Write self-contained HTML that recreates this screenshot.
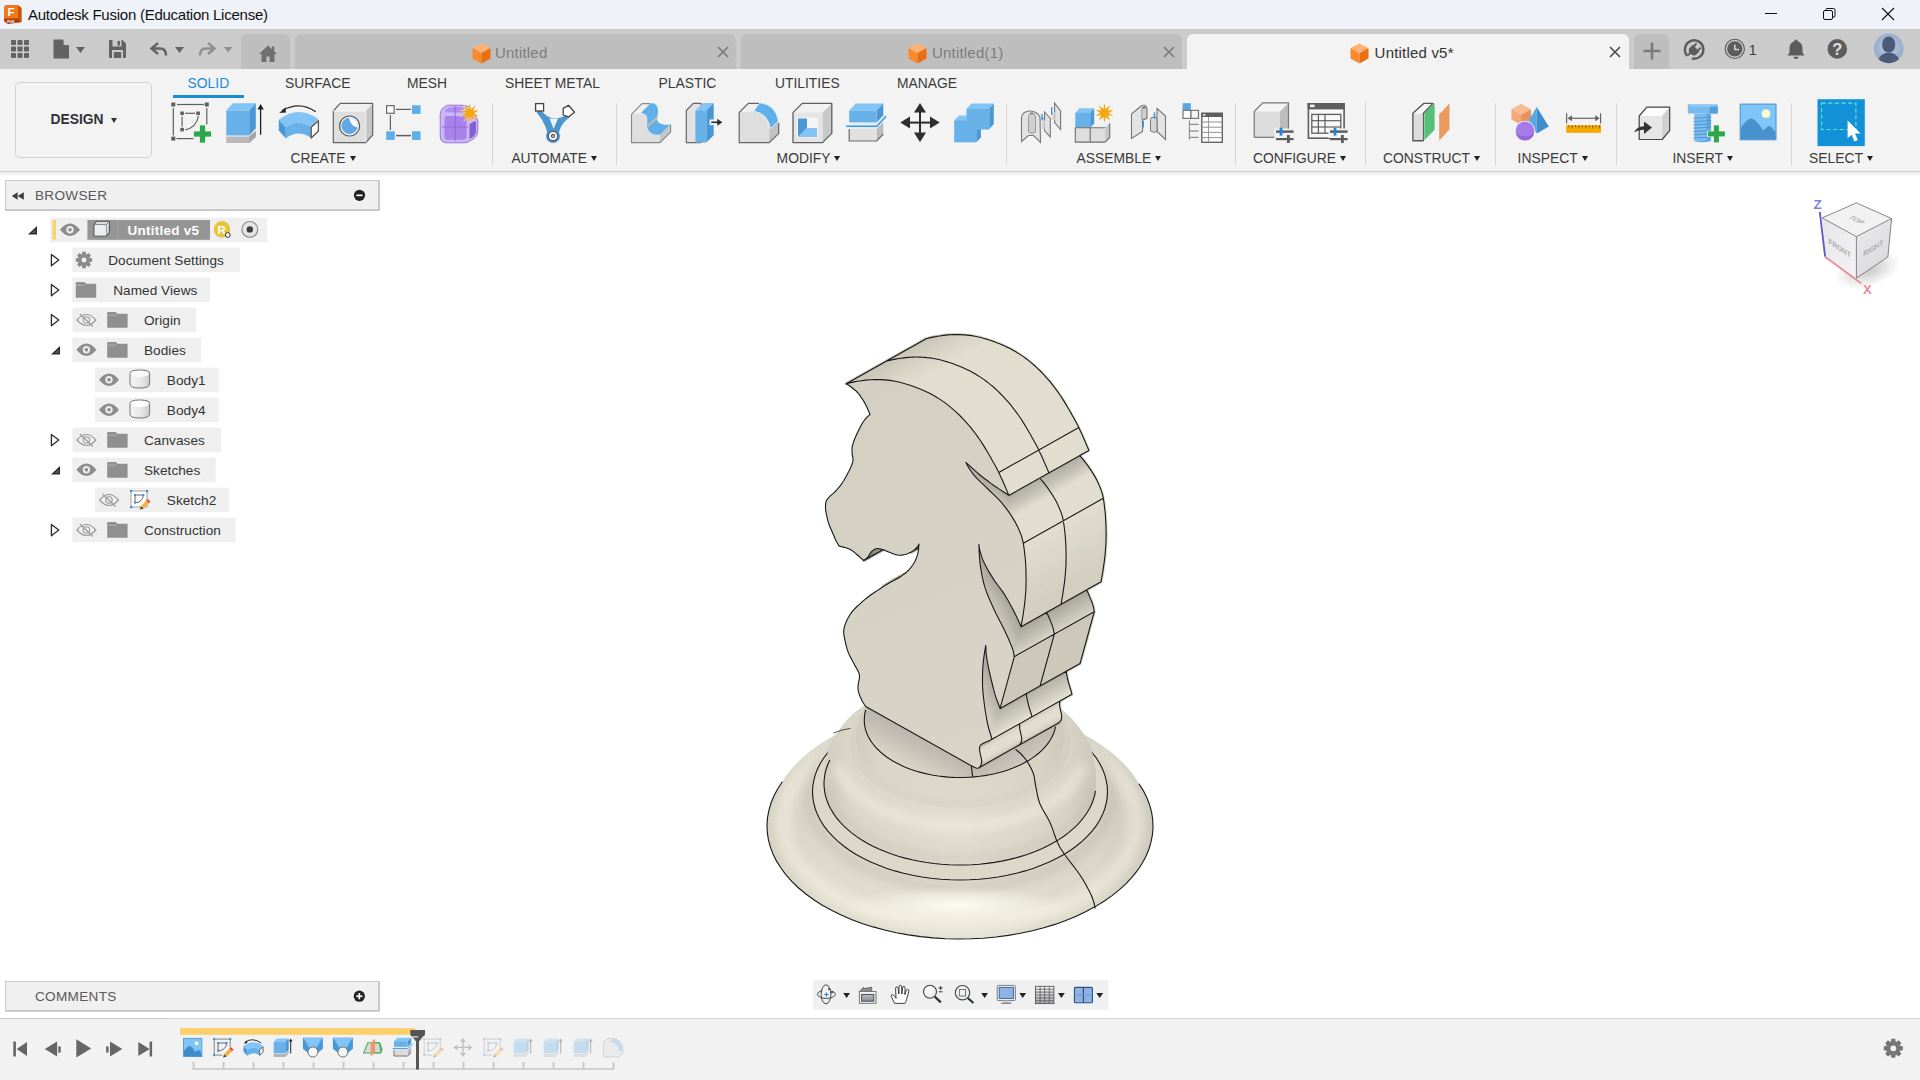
<!DOCTYPE html>
<html lang="en">
<head>
<meta charset="utf-8">
<title>Autodesk Fusion (Education License)</title>
<style>
*{box-sizing:border-box;margin:0;padding:0}
html,body{width:1920px;height:1080px;overflow:hidden;background:#fff;font-family:"Liberation Sans",sans-serif;color:#333}
.abs{position:absolute}
#titlebar{position:absolute;left:0;top:0;width:1920px;height:29px;background:#eff3f9}
#titlebar .t{position:absolute;left:28px;top:6px;font-size:15px;line-height:17px;color:#111;white-space:nowrap;letter-spacing:-0.25px}
#tabbar{position:absolute;left:0;top:29px;width:1920px;height:40px;background:#cbcbcb}
.dtab{position:absolute;top:5px;height:35px;background:#bebebe;border-radius:6px 6px 0 0}
.dtab.act{background:#f3f3f3}
.dtab .lbl{position:absolute;top:10.4px;font-size:15px;letter-spacing:0.2px;color:#7c7c7c;white-space:nowrap}
.dtab.act .lbl{color:#333}
#ribbon{position:absolute;left:0;top:69px;width:1920px;height:103px;background:#f3f3f3;border-bottom:1px solid #cfcfcf}
.rt{position:absolute;top:6.4px;font-size:13.85px;color:#3a3a3a;white-space:nowrap}
.gl{position:absolute;top:81.4px;font-size:13.85px;color:#3a3a3a;white-space:nowrap}
.gl i{display:inline-block;width:0;height:0;border-left:3.5px solid transparent;border-right:3.5px solid transparent;border-top:5px solid #222;margin-left:4px;vertical-align:2px}
.sep{position:absolute;top:34px;width:1px;height:62px;background:#d6d6d6}
.ic{position:absolute;top:33px;width:42px;height:42px}
#canvas{position:absolute;left:0;top:172px;width:1920px;height:847px;background:#fff}
#timeline{position:absolute;left:0;top:1018px;width:1920px;height:62px;background:#f2f2f2;border-top:1px solid #d6d6d6}
.panelhdr{position:absolute;left:5px;width:374px;height:30px;background:#f0f0f0;border:1px solid #c9c9c9;font-size:13.55px;color:#555}
.panelhdr span{position:absolute;left:31px;top:7px}
.row{position:absolute;height:25px;background:#ebebeb}
.row .tx{position:absolute;top:5px;font-size:13.55px;color:#333;white-space:nowrap}
</style>
</head>
<body>

<div id="titlebar">
<svg class="abs" style="left:3px;top:4px" width="20" height="21" viewBox="0 0 20 21"><path d="M2.5,1 L15,1 L18.5,4 L18.5,18 L5,20 L1,17 L1,3 Z" fill="#f2761b"/><path d="M15,1 L18.5,4 L18.5,18 L15,15 Z" fill="#c9540f"/><path d="M1,14.5 L15,14.5 L18.5,18 L5,20 L1,17 Z" fill="#a8400a"/><text x="4.6" y="12.2" font-family="Liberation Sans,sans-serif" font-weight="700" font-size="11.5" fill="#fff">F</text><text x="4.2" y="18.6" font-family="Liberation Sans,sans-serif" font-weight="700" font-size="3.6" fill="#fff">FUS</text></svg>
<div class="t">Autodesk Fusion (Education License)</div>
<svg class="abs" style="left:1750px;top:0" width="170" height="29" viewBox="1750 0 170 29"><line x1="1765" y1="13.5" x2="1777" y2="13.5" stroke="#111" stroke-width="1"/><rect x="1823.5" y="10.5" width="9" height="9" rx="1.5" fill="none" stroke="#111" stroke-width="1"/><path d="M1826,10 V9.5 Q1826,8.5 1827,8.5 H1833.5 Q1835,8.5 1835,10 V16 Q1835,17 1834,17 H1833" fill="none" stroke="#111" stroke-width="1"/><path d="M1882,8 L1894,20 M1894,8 L1882,20" stroke="#111" stroke-width="1.1" fill="none"/></svg>
</div>
<div id="tabbar">
<svg class="abs" style="left:0;top:0" width="240" height="40" viewBox="0 29 240 40"><rect x="11.00" y="40.00" width="5.00" height="5.00" fill="#636363" rx="0.8"/><rect x="17.50" y="40.00" width="5.00" height="5.00" fill="#636363" rx="0.8"/><rect x="24.00" y="40.00" width="5.00" height="5.00" fill="#636363" rx="0.8"/><rect x="11.00" y="46.50" width="5.00" height="5.00" fill="#636363" rx="0.8"/><rect x="17.50" y="46.50" width="5.00" height="5.00" fill="#636363" rx="0.8"/><rect x="24.00" y="46.50" width="5.00" height="5.00" fill="#636363" rx="0.8"/><rect x="11.00" y="53.00" width="5.00" height="5.00" fill="#636363" rx="0.8"/><rect x="17.50" y="53.00" width="5.00" height="5.00" fill="#636363" rx="0.8"/><rect x="24.00" y="53.00" width="5.00" height="5.00" fill="#636363" rx="0.8"/><path d="M53.5,39.5 H63 L69,45.5 V58.5 H53.5 Z" fill="#636363" /><path d="M63.6,39 V45 H69.6" fill="#cbcbcb" /><polygon points="76.00,47.00 85.00,47.00 80.50,53.00" fill="#636363" /><path d="M109,41 Q109,40 110,40 H122.5 L126,43.5 V57 Q126,58 125,58 H110 Q109,58 109,57 Z" fill="#636363" /><rect x="112.50" y="40.00" width="9.00" height="6.50" fill="#cbcbcb"/><rect x="117.50" y="41.00" width="2.50" height="4.50" fill="#636363"/><rect x="112.00" y="50.00" width="11.00" height="8.00" fill="#cbcbcb"/><rect x="113.80" y="52.00" width="7.40" height="6.00" fill="#636363"/><path d="M158,43 L151.5,48.5 L158,54 M152.5,48.5 H160 Q166,48.5 166,55.5" fill="none" stroke="#636363" stroke-width="2.4" stroke-linejoin="miter"/><polygon points="175.00,47.00 184.00,47.00 179.50,53.00" fill="#636363" /><path d="M208,43 L214.5,48.5 L208,54 M213.5,48.5 H206 Q200,48.5 200,55.5" fill="none" stroke="#8f8f8f" stroke-width="2.4" /><polygon points="224.00,47.00 232.50,47.00 228.20,52.50" fill="#8f8f8f" /></svg>
<div class="dtab" style="left:241px;width:49px"><svg class="abs" style="left:17px;top:10px" width="20" height="20" viewBox="0 0 20 20"><path d="M10,1.5 L19,10 H16.5 V18 H11.6 V12.5 H8.4 V18 H3.5 V10 H1 Z" fill="#6f6f6f"/><rect x="13.8" y="2.5" width="2.4" height="5" fill="#6f6f6f"/></svg></div>
<div class="dtab" style="left:295px;width:441px"><svg class="abs" style="left:177px;top:9px" width="19" height="21" viewBox="0 0 19 21"><path d="M9.5,0.5 L18.5,5 L9.5,10 L0.5,5 Z" fill="#ffb273"/><path d="M0.5,5 L9.5,10 V20.5 L0.5,15.5 Z" fill="#fb8a2c"/><path d="M18.5,5 L9.5,10 V20.5 L18.5,15.5 Z" fill="#e96f12"/></svg><span class="lbl" style="left:200px">Untitled</span><svg class="abs" style="left:422px;top:12px" width="12" height="12" viewBox="0 0 12 12"><path d="M1,1 L11,11 M11,1 L1,11" stroke="#777" stroke-width="1.5" fill="none"/></svg></div>
<div class="dtab" style="left:741px;width:441px"><svg class="abs" style="left:167px;top:9px" width="19" height="21" viewBox="0 0 19 21"><path d="M9.5,0.5 L18.5,5 L9.5,10 L0.5,5 Z" fill="#ffb273"/><path d="M0.5,5 L9.5,10 V20.5 L0.5,15.5 Z" fill="#fb8a2c"/><path d="M18.5,5 L9.5,10 V20.5 L18.5,15.5 Z" fill="#e96f12"/></svg><span class="lbl" style="left:191px">Untitled(1)</span><svg class="abs" style="left:422px;top:12px" width="12" height="12" viewBox="0 0 12 12"><path d="M1,1 L11,11 M11,1 L1,11" stroke="#777" stroke-width="1.5" fill="none"/></svg></div>
<div class="dtab act" style="left:1187px;width:442px"><svg class="abs" style="left:163px;top:9px" width="19" height="21" viewBox="0 0 19 21"><path d="M9.5,0.5 L18.5,5 L9.5,10 L0.5,5 Z" fill="#ffb273"/><path d="M0.5,5 L9.5,10 V20.5 L0.5,15.5 Z" fill="#fb8a2c"/><path d="M18.5,5 L9.5,10 V20.5 L18.5,15.5 Z" fill="#e96f12"/></svg><span class="lbl" style="left:187.6px">Untitled v5*</span><svg class="abs" style="left:422px;top:12px" width="12" height="12" viewBox="0 0 12 12"><path d="M1,1 L11,11 M11,1 L1,11" stroke="#444" stroke-width="1.5" fill="none"/></svg></div>
<div class="dtab" style="left:1634px;width:35px"><svg class="abs" style="left:8px;top:7px" width="20" height="20" viewBox="0 0 20 20"><path d="M10,1.5 V18.5 M1.5,10 H18.5" stroke="#7b7b7b" stroke-width="2.6" fill="none"/></svg></div>
<svg class="abs" style="left:1670px;top:0" width="250" height="40" viewBox="1670 29 250 40"><g transform="translate(1.2 1.2)"><path d="M1686.2,54.6 A9.2,9.2 0 1 1 1690.5,57.2" fill="none" stroke="#5c5c5c" stroke-width="2.5" /><path d="M1689.6,52.6 L1687.4,54.8 L1686,53.4 L1688.2,51.2 Q1686.6,48.6 1688.6,46.6 L1691.6,43.6 L1698.2,50.2 L1695.2,53.2 Q1693.2,55.2 1690.6,53.6 Z" fill="#5c5c5c" /><path d="M1692.6,45 L1695.4,42.2 M1696.8,49.2 L1699.6,46.4" fill="none" stroke="#5c5c5c" stroke-width="2" /></g><circle cx="1734.80" cy="48.90" r="9.60" fill="none" stroke="#5c5c5c" stroke-width="1.1"/><circle cx="1734.80" cy="48.90" r="7.60" fill="#5c5c5c"/><path d="M1734.8,44.4 V49.4 H1739" fill="none" stroke="#d6d6d6" stroke-width="1.5" /><text x="1748.6" y="54.6" font-family="Liberation Sans,sans-serif" font-size="15" fill="#4a3e3e">1</text><path d="M1796,39.5 Q1797.6,39.5 1797.6,41.2 Q1802.5,42.8 1802.5,48.5 V52.5 L1804.5,55.5 H1787.5 L1789.5,52.5 V48.5 Q1789.5,42.8 1794.4,41.2 Q1794.4,39.5 1796,39.5 Z" fill="#5c5c5c" /><path d="M1793.5,56.7 H1798.5 Q1798.5,59 1796,59 Q1793.5,59 1793.5,56.7 Z" fill="#5c5c5c" /><circle cx="1837.30" cy="48.90" r="9.80" fill="#5c5c5c"/><text x="1837.3" y="54.8" text-anchor="middle" font-family="Liberation Sans,sans-serif" font-weight="700" font-size="16.5" fill="#e0e0e0">?</text><defs><radialGradient id="avg" cx="0.5" cy="0.45" r="0.6"><stop offset="0" stop-color="#b9cce4"/><stop offset="1" stop-color="#8ea6c6"/></radialGradient><clipPath id="avc"><circle cx="1888.7" cy="48.4" r="14.8"/></clipPath></defs><circle cx="1888.70" cy="48.40" r="14.80" fill="url(#avg)"/><g clip-path="url(#avc)"><ellipse cx="1888.7" cy="44.6" rx="6.6" ry="8.2" fill="#4a5a78"/><path d="M1877,66 Q1877.5,55.5 1885.5,53 H1892 Q1900,55.5 1900.5,66 Z" fill="#4a5a78" /></g></svg>
</div>
<div id="ribbon">
<div class="abs" style="left:15px;top:13px;width:137px;height:76px;border:1px solid #d2d2d2;border-radius:5px;background:#f3f3f3"></div>
<div class="abs" style="left:50.6px;top:43.4px;font-size:13.8px;font-weight:700;color:#2e3238;letter-spacing:0">DESIGN<i style="display:inline-block;width:0;height:0;border-left:3.5px solid transparent;border-right:3.5px solid transparent;border-top:5px solid #333;margin-left:7px;vertical-align:1.5px"></i></div>
<div class="rt" style="left:187.6px;color:#1b8dd2">SOLID</div>
<div class="rt" style="left:285px">SURFACE</div>
<div class="rt" style="left:407px">MESH</div>
<div class="rt" style="left:505px">SHEET METAL</div>
<div class="rt" style="left:658.6px">PLASTIC</div>
<div class="rt" style="left:775px">UTILITIES</div>
<div class="rt" style="left:897px">MANAGE</div>
<div class="abs" style="left:173px;top:25.5px;width:71px;height:3.5px;background:#1b8dd2"></div>
<div class="gl" style="left:290.4px">CREATE<i></i></div>
<div class="gl" style="left:511.4px">AUTOMATE<i></i></div>
<div class="gl" style="left:776.6px">MODIFY<i></i></div>
<div class="gl" style="left:1076.6px">ASSEMBLE<i></i></div>
<div class="gl" style="left:1253px">CONFIGURE<i></i></div>
<div class="gl" style="left:1383px">CONSTRUCT<i></i></div>
<div class="gl" style="left:1517.6px">INSPECT<i></i></div>
<div class="gl" style="left:1672.4px">INSERT<i></i></div>
<div class="gl" style="left:1809px">SELECT<i></i></div>
<div class="sep" style="left:492px"></div>
<div class="sep" style="left:616px"></div>
<div class="sep" style="left:1006px"></div>
<div class="sep" style="left:1235px"></div>
<div class="sep" style="left:1364.5px"></div>
<div class="sep" style="left:1495px"></div>
<div class="sep" style="left:1616px"></div>
<div class="sep" style="left:1791px"></div>
<svg class="abs" style="left:0;top:0" width="1920" height="103" viewBox="0 69 1920 103"><rect x="171.30" y="102.50" width="4.00" height="4.00" fill="#5f5f5f"/><rect x="204.80" y="102.50" width="4.00" height="4.00" fill="#5f5f5f"/><rect x="171.30" y="136.60" width="4.00" height="4.00" fill="#5f5f5f"/><line x1="177.00" y1="104.50" x2="204.00" y2="104.50" stroke="#5f5f5f" stroke-width="1.2" /><line x1="173.30" y1="108.00" x2="173.30" y2="135.50" stroke="#5f5f5f" stroke-width="1.2" /><line x1="206.80" y1="108.00" x2="206.80" y2="124.50" stroke="#5f5f5f" stroke-width="1.2" /><line x1="176.50" y1="138.60" x2="193.50" y2="138.60" stroke="#5f5f5f" stroke-width="1.2" /><rect x="180.30" y="111.50" width="3.60" height="3.60" fill="#5f5f5f"/><rect x="196.30" y="111.50" width="3.60" height="3.60" fill="#5f5f5f"/><rect x="180.30" y="127.80" width="3.60" height="3.60" fill="#5f5f5f"/><line x1="185.00" y1="113.30" x2="195.00" y2="113.30" stroke="#5f5f5f" stroke-width="1.2" /><line x1="182.10" y1="116.50" x2="182.10" y2="126.50" stroke="#5f5f5f" stroke-width="1.2" /><path d="M198.4,116 Q196.5,127.5 185.3,129.8" fill="none" stroke="#5f5f5f" stroke-width="1.2" /><rect x="193.90" y="131.40" width="17.20" height="5.20" fill="#2aa84a"/><rect x="199.90" y="125.40" width="5.20" height="17.20" fill="#2aa84a"/><polygon points="226.30,136.60 249.20,136.60 255.80,130.80 255.80,137.00 249.20,143.00 226.30,143.00" fill="#b9b9b9" /><polygon points="249.20,136.60 255.80,130.80 255.80,137.00 249.20,143.00" fill="#a5a5a5" /><polygon points="226.30,110.50 232.90,103.30 255.80,103.30 249.20,110.50" fill="#82c4f5" /><polygon points="249.20,110.50 255.80,103.30 255.80,128.30 249.20,135.50" fill="#4a97d5" /><polygon points="226.30,110.50 249.20,110.50 249.20,135.50 226.30,135.50" fill="#68b1e8" /><line x1="260.60" y1="134.80" x2="260.60" y2="108.00" stroke="#222" stroke-width="1.3" /><polygon points="257.40,109.50 260.60,104.00 263.80,109.50" fill="#222" /><path d="M315.8,111.8 Q300,100.5 282,110.5" fill="none" stroke="#2a2a2a" stroke-width="1.3" /><polygon points="279.30,113.00 285.50,107.20 286.00,112.60" fill="#2a2a2a" /><path d="M278.8,119.8 Q298,104.5 318.6,119.2 L311.2,127.2 Q298,118 285.8,127.5 Z" fill="#82c4f5" /><path d="M278.8,119.8 L285.8,127.5 V138.5 L278.8,130.5 Z" fill="#4a97d5" /><path d="M285.8,127.5 Q298,118 311.2,127.2 V138 Q298,129 285.8,138.5 Z" fill="#68b1e8" /><polygon points="311.20,127.20 318.40,120.80 318.40,131.00 311.20,138.00" fill="#fff" stroke="#555" stroke-width="1.3" stroke-linejoin="round" /><polygon points="333.30,111.00 340.20,103.40 372.70,103.40 365.80,111.00" fill="#efefef" /><polygon points="365.80,111.00 372.70,103.40 372.70,135.00 365.80,142.60" fill="#c4c4c4" /><polygon points="333.30,111.00 365.80,111.00 365.80,142.60 333.30,142.60" fill="#dedede" /><polygon points="333.30,142.60 333.30,111.00 340.20,103.40 372.70,103.40 372.70,135.00 365.80,142.60" fill="none" stroke="#666" stroke-width="1.2" stroke-linejoin="round" /><line x1="333.30" y1="111.00" x2="365.80" y2="111.00" stroke="#f6f6f6" stroke-width="1" /><line x1="365.80" y1="111.00" x2="365.80" y2="142.00" stroke="#f0f0f0" stroke-width="1" /><circle cx="349.60" cy="126.00" r="10.00" fill="#fff" stroke="#555" stroke-width="1.2"/><circle cx="349.60" cy="126.00" r="8.30" fill="#62a9e6"/><path d="M349,118 A8.3,8.3 0 0 1 357.8,127.5 Q351,126.5 349,118 Z" fill="#fff" /><rect x="386.60" y="105.70" width="7.60" height="7.60" fill="#fff" stroke="#666" stroke-width="1.2"/><rect x="412.00" y="105.30" width="8.60" height="8.60" fill="#5eaee9"/><rect x="386.20" y="131.30" width="8.60" height="8.60" fill="#5eaee9"/><rect x="412.00" y="131.30" width="8.60" height="8.60" fill="#5eaee9"/><line x1="396.00" y1="109.40" x2="411.00" y2="109.40" stroke="#5f5f5f" stroke-width="1.2" /><line x1="390.40" y1="115.00" x2="390.40" y2="130.00" stroke="#5f5f5f" stroke-width="1.2" /><line x1="396.00" y1="135.60" x2="411.00" y2="135.60" stroke="#5f5f5f" stroke-width="1.5" /><path d="M447.5,105.2 H462 Q468,105.2 470,108 L477.8,120 V131 Q477.8,136 474,138.5 L468,142 Q466,142.8 463,142.8 H447 Q440.2,142.8 440.2,136 V114.5 Q440.2,108 447.5,105.2 Z" fill="#cdb6f6" stroke="#9b74dd" stroke-width="1" /><path d="M444.5,118.5 Q444.5,116 447.5,116 H462 Q466.5,116 466.5,119 V136 Q466.5,139.8 463,139.8 H447.5 Q444.5,139.8 444.5,136.5 Z" fill="#a981ea" /><path d="M445,110.5 Q448,107 453,107 H462 L466,112.5 H448 Q445.5,112.5 445,110.5 Z" fill="#b18df0" /><path d="M469.5,124 L476,120.5 V131 Q476,135 472,137.5 L469.5,139 Z" fill="#8460cf" /><line x1="455.20" y1="106.00" x2="455.20" y2="141.00" stroke="#8a66d6" stroke-width="0.9" /><line x1="442.00" y1="127.00" x2="468.00" y2="127.00" stroke="#8a66d6" stroke-width="0.9" /><polygon points="469.70,102.40 471.12,108.83 476.05,104.46 473.42,110.50 479.97,109.86 474.30,113.20 479.97,116.54 473.42,115.90 476.05,121.94 471.12,117.57 469.70,124.00 468.28,117.57 463.35,121.94 465.98,115.90 459.43,116.54 465.10,113.20 459.43,109.86 465.98,110.50 463.35,104.46 468.28,108.83" fill="#f3f3f3" /><polygon points="469.70,103.40 471.00,109.21 475.46,105.27 473.10,110.73 479.02,110.17 473.90,113.20 479.02,116.23 473.10,115.67 475.46,121.13 471.00,117.19 469.70,123.00 468.40,117.19 463.94,121.13 466.30,115.67 460.38,116.23 465.50,113.20 460.38,110.17 466.30,110.73 463.94,105.27 468.40,109.21" fill="#f5a611" /><path d="M541,109.5 Q547,119.5 557,118.2 Q563,117.8 566.5,114 L569.5,117.5 Q562.5,122 559.5,130.5 Q558.7,133 558.5,136 L547.5,136 Q547.3,132 546,128 Q543,120 536.5,112 Z" fill="#4b96cf" /><polygon points="549.50,118.60 558.00,118.60 553.60,128.80" fill="#f0f4f8" /><circle cx="553.00" cy="136.00" r="7.00" fill="#4b96cf"/><circle cx="553.00" cy="136.00" r="4.60" fill="#fff" stroke="#555" stroke-width="1.2"/><circle cx="553.00" cy="136.00" r="1.50" fill="#fff" stroke="#555" stroke-width="1.3"/><rect x="535.60" y="103.60" width="8.00" height="7.40" fill="#fff" stroke="#444" stroke-width="1.3"/><polygon points="568.50,105.30 574.50,112.20 568.80,116.80 563.20,115.00 563.20,108.40" fill="#fff" stroke="#444" stroke-width="1.3" stroke-linejoin="round" /><polygon points="631.50,114.30 642.00,103.60 655.50,103.60 645.00,114.30" fill="#f0f0f0" /><path d="M631.5,114.3 H646 C649,117 648,121 647.5,124 C647,131 653,135.5 660,134.5 V142.6 H631.5 Z" fill="#dedede" /><polygon points="660.00,134.50 670.60,124.30 670.60,132.00 660.00,142.60" fill="#c6c6c6" /><path d="M640.8,113 L650.5,103.4 C658.5,102.6 659,110.5 657.2,117 C655.5,123.5 663.5,125.8 670.4,124.4 L660.2,134.6 C652,136 645.6,130.5 647.2,122.5 C648.2,116.5 646.5,113.6 640.8,113 Z" fill="#5fb0ea" /><path d="M647,125 L657.5,115.5 L657,119.5 L647.6,128 Z" fill="#b9b9b9" /><path d="M631.5,114.3 L642,103.6 H650 M631.5,114.3 V142.6 H660 L670.6,132 V124.4" fill="none" stroke="#8a8a8a" stroke-width="1.1" /><polygon points="686.30,142.60 686.30,110.50 693.30,103.40 701.00,103.40 701.00,142.60" fill="#e2e2e2" stroke="#666" stroke-width="1.2" stroke-linejoin="round" /><polygon points="695.40,110.50 702.80,103.10 713.70,103.10 706.30,110.50" fill="#82c4f5" /><polygon points="706.30,110.50 713.70,103.10 713.70,135.20 706.30,142.60" fill="#4a97d5" /><polygon points="695.40,110.50 706.30,110.50 706.30,142.60 695.40,142.60" fill="#68b1e8" /><rect x="709.50" y="119.50" width="6.50" height="5.60" fill="#f3f3f3"/><line x1="711.20" y1="122.30" x2="718.50" y2="122.30" stroke="#2a2a2a" stroke-width="1.6" /><polygon points="717.30,118.80 722.30,122.30 717.30,125.80" fill="#2a2a2a" /><polygon points="739.20,112.60 748.30,103.40 760.00,103.40 754.00,112.00" fill="#f0f0f0" /><path d="M739.2,112.6 L753.8,111.2 Q767.5,113.5 769.2,128.8 V142.6 H739.2 Z" fill="#dedede" /><polygon points="769.20,128.80 778.50,121.30 778.70,133.60 769.20,142.60" fill="#c2c2c2" /><path d="M753.6,111.1 L759.8,102.7 Q776,105 778.4,121.2 L770.3,128.5 Q768,113.5 753.6,111.1 Z" fill="#5fb0ea" stroke="#e8f4fd" stroke-width="0.8" /><path d="M759,103.4 H748.3 L739.2,112.6 V142.6 H769.2 L778.7,133.6 V123" fill="none" stroke="#666" stroke-width="1.2" /><polygon points="793.00,112.60 802.30,103.40 831.80,103.40 822.50,112.60" fill="#f2f2f2" /><polygon points="822.50,112.60 831.80,103.40 831.80,133.40 822.50,142.60" fill="#c8c8c8" /><polygon points="793.00,112.60 822.50,112.60 822.50,142.60 793.00,142.60" fill="#e4e4e4" /><polygon points="793.00,142.60 793.00,112.60 802.30,103.40 831.80,103.40 831.80,133.40 822.50,142.60" fill="none" stroke="#5f5f5f" stroke-width="1.3" stroke-linejoin="round" /><rect x="796.80" y="117.50" width="21.00" height="20.20" fill="#f6f6f6"/><polygon points="798.00,118.40 807.00,118.40 807.00,128.00 798.00,137.00" fill="#4a97d5" /><polygon points="807.00,128.00 817.00,128.00 817.00,137.00 798.00,137.00" fill="#82c4f5" /><polygon points="849.20,128.80 855.80,122.00 883.30,122.00 876.70,128.80" fill="#eeeeee" /><polygon points="876.70,128.80 883.30,122.00 883.30,134.20 876.70,141.00" fill="#bcbcbc" /><polygon points="849.20,128.80 876.70,128.80 876.70,141.00 849.20,141.00" fill="#e0e0e0" /><path d="M849.2,129 V141 H876.7 L883.3,134.2" fill="none" stroke="#6a6a6a" stroke-width="1.2" /><polygon points="849.20,110.50 855.80,103.40 883.30,103.40 876.70,110.50" fill="#82c4f5" /><polygon points="876.70,110.50 883.30,103.40 883.30,115.30 876.70,122.40" fill="#4a97d5" /><polygon points="849.20,110.50 876.70,110.50 876.70,122.40 849.20,122.40" fill="#68b1e8" /><path d="M846.2,126.2 H876.9 L886,116.2" fill="none" stroke="#d4ecfc" stroke-width="3.2" /><path d="M846.2,126.2 H876.9 L886,116.2" fill="none" stroke="#4a97d5" stroke-width="1.4" /><line x1="905.00" y1="122.60" x2="935.00" y2="122.60" stroke="#2e2e2e" stroke-width="2" /><line x1="920.00" y1="108.00" x2="920.00" y2="138.00" stroke="#2e2e2e" stroke-width="2" /><polygon points="914.00,112.60 920.00,103.00 926.00,112.60" fill="#2e2e2e" /><polygon points="914.00,132.60 920.00,142.30 926.00,132.60" fill="#2e2e2e" /><polygon points="910.00,116.60 900.30,122.60 910.00,128.60" fill="#2e2e2e" /><polygon points="930.00,116.60 939.70,122.60 930.00,128.60" fill="#2e2e2e" /><polygon points="966.70,108.80 971.30,103.40 993.80,103.40 989.20,108.80" fill="#82c4f5" /><polygon points="989.20,108.80 993.80,103.40 993.80,123.90 989.20,129.30" fill="#4a97d5" /><polygon points="966.70,108.80 989.20,108.80 989.20,129.30 966.70,129.30" fill="#68b1e8" /><polygon points="954.20,120.20 959.00,115.40 967.00,115.40 967.00,120.20" fill="#82c4f5" /><polygon points="954.20,120.20 976.30,120.20 976.30,142.30 954.20,142.30" fill="#68b1e8" /><polygon points="966.70,108.80 989.20,108.80 989.20,129.30 966.70,129.30" fill="#68b1e8" /><polygon points="976.30,129.30 980.90,129.30 980.90,137.60 976.30,142.30" fill="#4a97d5" /><path d="M1021.5,141.5 V118 Q1022,112 1028,111.2 Q1036,110 1040,117 L1040.5,142.3 L1033.5,135.5 H1028.5 Z" fill="#e3e3e3" stroke="#777" stroke-width="1.1" /><path d="M1028.5,117 Q1028.5,113.5 1032,113.5 Q1035.5,113.5 1035.5,117 V132 Q1032,135 1028.5,132 Z" fill="#cfcfcf" stroke="#8a8a8a" stroke-width="0.8" /><path d="M1030,113.2 h3.4" fill="none" stroke="#555" stroke-width="1" /><path d="M1044.5,112 L1050.3,118.5 V137 L1044.5,130.5 Z" fill="#e3e3e3" stroke="#777" stroke-width="1.1" /><rect x="1041.60" y="120.50" width="3.20" height="8.50" fill="#d6d6d6"/><path d="M1054.6,103.2 L1060.6,111 V129.5 L1054.6,122.5 Z" fill="#e3e3e3" stroke="#777" stroke-width="1.1" /><rect x="1051.60" y="112.00" width="3.20" height="8.00" fill="#d6d6d6"/><path d="M1042,114 V119.5 l1.6,-1.6 M1051.7,107 V114.8" fill="none" stroke="#3a8fdb" stroke-width="1.3" /><polygon points="1075.30,127.80 1075.30,127.80 1090.20,127.80 1090.20,127.80" fill="#eee" /><polygon points="1090.20,127.80 1090.20,127.80 1090.20,142.10 1090.20,142.10" fill="#c6c6c6" /><polygon points="1075.30,127.80 1090.20,127.80 1090.20,142.10 1075.30,142.10" fill="#dedede" /><polygon points="1090.20,127.80 1094.80,123.20 1109.70,123.20 1105.10,127.80" fill="#efefef" /><polygon points="1105.10,127.80 1109.70,123.20 1109.70,137.50 1105.10,142.10" fill="#c6c6c6" /><polygon points="1090.20,127.80 1105.10,127.80 1105.10,142.10 1090.20,142.10" fill="#dedede" /><polygon points="1075.30,112.90 1079.30,108.30 1094.20,108.30 1090.20,112.90" fill="#82c4f5" /><polygon points="1090.20,112.90 1094.20,108.30 1094.20,123.20 1090.20,127.80" fill="#4a97d5" /><polygon points="1075.30,112.90 1090.20,112.90 1090.20,127.80 1075.30,127.80" fill="#68b1e8" /><path d="M1075.3,127.8 V142.1 H1105.1 L1109.7,137.5 V123.2 M1090.2,127.8 V142.1 M1075.3,127.8 H1105.1" fill="none" stroke="#6f6f6f" stroke-width="1.1" /><polygon points="1104.50,102.30 1105.92,108.53 1110.73,104.32 1108.22,110.20 1114.58,109.62 1109.10,112.90 1114.58,116.18 1108.22,115.60 1110.73,121.48 1105.92,117.27 1104.50,123.50 1103.08,117.27 1098.27,121.48 1100.78,115.60 1094.42,116.18 1099.90,112.90 1094.42,109.62 1100.78,110.20 1098.27,104.32 1103.08,108.53" fill="#f3f3f3" /><polygon points="1104.50,103.30 1105.80,108.91 1110.14,105.13 1107.90,110.43 1113.63,109.93 1108.70,112.90 1113.63,115.87 1107.90,115.37 1110.14,120.67 1105.80,116.89 1104.50,122.50 1103.20,116.89 1098.86,120.67 1101.10,115.37 1095.37,115.87 1100.30,112.90 1095.37,109.93 1101.10,110.43 1098.86,105.13 1103.20,108.91" fill="#f5a611" /><path d="M1131.5,138.5 V114 L1141,106 Q1146.5,103.5 1147,109 V118.5 L1142.5,120 V131.5 Z" fill="#e3e3e3" stroke="#777" stroke-width="1.1" /><path d="M1141.8,108 Q1144.5,105.5 1146.5,108.5 V118 L1141.8,119.5 Z" fill="#cfcfcf" stroke="#8a8a8a" stroke-width="0.8" /><path d="M1142.8,107.6 h2.4" fill="none" stroke="#444" stroke-width="1.2" /><path d="M1157,108.5 L1165.5,116 V139.5 L1157,131.5 Z" fill="#e3e3e3" stroke="#777" stroke-width="1.1" /><path d="M1150.5,119.5 Q1150.5,117 1153.7,117 Q1157,117 1157,119.5 V131.5 Q1153.7,133.5 1150.5,131 Z" fill="#d6d6d6" stroke="#777" stroke-width="1" /><path d="M1143.2,121 V127.5 M1154.5,112.5 V118.5" fill="none" stroke="#3a8fdb" stroke-width="1.5" /><rect x="1182.60" y="103.20" width="8.20" height="7.20" fill="#58a6e6"/><rect x="1183.00" y="110.40" width="8.00" height="8.00" fill="#fff" stroke="#777" stroke-width="1.2"/><rect x="1191.00" y="110.40" width="7.50" height="8.00" fill="#f4f4f4" stroke="#777" stroke-width="1.2"/><line x1="1189.40" y1="120.50" x2="1189.40" y2="139.80" stroke="#8c8c8c" stroke-width="1.1" /><line x1="1189.40" y1="124.40" x2="1198.60" y2="124.40" stroke="#8c8c8c" stroke-width="1.3" /><line x1="1189.40" y1="131.00" x2="1198.60" y2="131.00" stroke="#8c8c8c" stroke-width="1.3" /><line x1="1189.40" y1="137.40" x2="1198.60" y2="137.40" stroke="#8c8c8c" stroke-width="1.3" /><rect x="1201.80" y="113.30" width="20.50" height="29.00" fill="#fff" stroke="#666" stroke-width="1.4"/><rect x="1201.40" y="112.80" width="21.40" height="4.20" fill="#5e5e5e"/><rect x="1203.00" y="114.00" width="2.40" height="1.80" fill="#ddd"/><line x1="1202.00" y1="122.00" x2="1222.00" y2="122.00" stroke="#9a9a9a" stroke-width="1.1" /><line x1="1202.00" y1="127.20" x2="1222.00" y2="127.20" stroke="#9a9a9a" stroke-width="1.1" /><line x1="1202.00" y1="132.40" x2="1222.00" y2="132.40" stroke="#9a9a9a" stroke-width="1.1" /><line x1="1202.00" y1="137.60" x2="1222.00" y2="137.60" stroke="#9a9a9a" stroke-width="1.1" /><line x1="1208.50" y1="117.00" x2="1208.50" y2="142.00" stroke="#9a9a9a" stroke-width="1.1" /><polygon points="1254.20,111.50 1262.70,102.90 1288.50,102.90 1280.00,111.50" fill="#f4f4f4" /><polygon points="1280.00,111.50 1288.50,102.90 1288.50,128.70 1280.00,137.30" fill="#bdbdbd" /><polygon points="1254.20,111.50 1280.00,111.50 1280.00,137.30 1254.20,137.30" fill="#dcdcdc" /><path d="M1254.2,137.3 V111.5 L1262.8,102.9 H1288.5 V129" fill="none" stroke="#777" stroke-width="1.2" /><line x1="1254.20" y1="137.30" x2="1276.00" y2="137.30" stroke="#777" stroke-width="1.2" /><rect x="1274.50" y="128.50" width="20.00" height="9.50" fill="#f3f3f3"/><line x1="1276.00" y1="131.60" x2="1293.60" y2="131.60" stroke="#5c5c5c" stroke-width="2.4" /><line x1="1276.00" y1="139.10" x2="1293.60" y2="139.10" stroke="#5c5c5c" stroke-width="2.2" /><rect x="1279.60" y="127.60" width="2.80" height="8.00" fill="#1f86e0"/><rect x="1287.00" y="135.00" width="2.80" height="8.00" fill="#5c5c5c"/><rect x="1308.40" y="103.80" width="35.70" height="34.40" fill="#f7f7f7" stroke="#5e5e5e" stroke-width="1.6"/><rect x="1307.60" y="103.00" width="37.30" height="6.40" fill="#5e5e5e"/><rect x="1310.00" y="104.60" width="4.60" height="2.60" fill="#eee"/><rect x="1311.80" y="114.40" width="29.00" height="18.80" fill="none" stroke="#5e5e5e" stroke-width="1.3"/><line x1="1311.80" y1="120.70" x2="1340.80" y2="120.70" stroke="#5e5e5e" stroke-width="1.2" /><line x1="1311.80" y1="127.00" x2="1340.80" y2="127.00" stroke="#5e5e5e" stroke-width="1.2" /><line x1="1318.40" y1="114.40" x2="1318.40" y2="133.20" stroke="#5e5e5e" stroke-width="1.2" /><line x1="1325.00" y1="114.40" x2="1325.00" y2="133.20" stroke="#5e5e5e" stroke-width="1.2" /><rect x="1328.50" y="128.50" width="20.00" height="9.50" fill="#f3f3f3"/><line x1="1330.00" y1="131.60" x2="1347.60" y2="131.60" stroke="#5c5c5c" stroke-width="2.4" /><line x1="1330.00" y1="139.10" x2="1347.60" y2="139.10" stroke="#5c5c5c" stroke-width="2.2" /><rect x="1333.60" y="127.60" width="2.80" height="8.00" fill="#1f86e0"/><rect x="1341.00" y="135.00" width="2.80" height="8.00" fill="#5c5c5c"/><polygon points="1412.90,140.70 1412.90,113.20 1423.70,103.40 1433.00,103.40 1423.20,113.40 1423.20,140.70" fill="#f6f6f6" stroke="#555" stroke-width="1.4" stroke-linejoin="round" /><rect x="1414.00" y="114.00" width="8.60" height="26.00" fill="#dcdcdc"/><polygon points="1424.30,113.20 1434.60,103.20 1434.60,129.80 1424.30,140.20" fill="#55c07a" /><polygon points="1439.20,114.30 1449.50,103.40 1449.50,129.20 1439.20,140.70" fill="#ea9a5e" /><polygon points="1521.20,104.00 1531.00,109.50 1531.00,119.50 1521.20,125.00 1511.40,119.50 1511.40,109.50" fill="#f0a97a" /><polygon points="1521.20,104.00 1531.00,109.50 1521.20,115.00 1511.40,109.50" fill="#f6bd97" /><polygon points="1521.20,115.00 1531.00,109.50 1531.00,119.50 1521.20,125.00" fill="#e8935c" /><polygon points="1536.70,106.90 1528.60,120.60 1536.70,133.40" fill="#5aa7e2" /><polygon points="1536.70,106.90 1548.80,126.40 1536.70,133.40" fill="#3e8ed0" /><circle cx="1525.00" cy="131.00" r="10.30" fill="#f3f3f3"/><circle cx="1525.00" cy="131.00" r="9.40" fill="#a67cea"/><path d="M1516,133.5 A9.4,9.4 0 0 0 1534,133.5 Q1525,139 1516,133.5 Z" fill="#9268d8" /><line x1="1566.60" y1="113.20" x2="1566.60" y2="123.60" stroke="#666" stroke-width="1.2" /><line x1="1600.60" y1="113.20" x2="1600.60" y2="123.60" stroke="#666" stroke-width="1.2" /><line x1="1569.00" y1="118.30" x2="1598.00" y2="118.30" stroke="#666" stroke-width="1.2" /><polygon points="1567.40,118.30 1572.00,115.30 1572.00,121.30" fill="#666" /><polygon points="1599.80,118.30 1595.20,115.30 1595.20,121.30" fill="#666" /><rect x="1566.20" y="125.20" width="34.80" height="7.60" fill="#f5a800"/><line x1="1568.60" y1="125.20" x2="1568.60" y2="127.20" stroke="#7a5a10" stroke-width="0.9" /><line x1="1572.05" y1="125.20" x2="1572.05" y2="128.40" stroke="#7a5a10" stroke-width="0.9" /><line x1="1575.50" y1="125.20" x2="1575.50" y2="127.20" stroke="#7a5a10" stroke-width="0.9" /><line x1="1578.95" y1="125.20" x2="1578.95" y2="128.40" stroke="#7a5a10" stroke-width="0.9" /><line x1="1582.40" y1="125.20" x2="1582.40" y2="127.20" stroke="#7a5a10" stroke-width="0.9" /><line x1="1585.85" y1="125.20" x2="1585.85" y2="128.40" stroke="#7a5a10" stroke-width="0.9" /><line x1="1589.30" y1="125.20" x2="1589.30" y2="127.20" stroke="#7a5a10" stroke-width="0.9" /><line x1="1592.75" y1="125.20" x2="1592.75" y2="128.40" stroke="#7a5a10" stroke-width="0.9" /><line x1="1596.20" y1="125.20" x2="1596.20" y2="127.20" stroke="#7a5a10" stroke-width="0.9" /><line x1="1599.65" y1="125.20" x2="1599.65" y2="128.40" stroke="#7a5a10" stroke-width="0.9" /><polygon points="1639.20,116.00 1646.80,107.20 1669.70,107.20 1662.10,116.00" fill="#fbfbfb" /><polygon points="1662.10,116.00 1669.70,107.20 1669.70,130.70 1662.10,139.50" fill="#cfcfcf" /><polygon points="1639.20,116.00 1662.10,116.00 1662.10,139.50 1639.20,139.50" fill="#e6e6e6" /><polygon points="1639.20,139.50 1639.20,116.00 1646.80,107.20 1669.70,107.20 1669.70,130.70 1662.10,139.50" fill="none" stroke="#444" stroke-width="1.2" stroke-linejoin="round" /><path d="M1634,132.6 Q1636.5,126.3 1644,126.2 V121.6 L1652,127.6 L1644,133.9 V129.8 Q1638,129.5 1634,132.6 Z" fill="#333" /><path d="M1689,104.3 H1716.6 Q1717.8,104.3 1717.8,105.5 V112.3 Q1717.8,113.5 1716.6,113.5 H1689 Q1687.8,113.5 1687.8,112.3 V105.5 Q1687.8,104.3 1689,104.3 Z" fill="#79bbee" /><polygon points="1689.00,104.30 1716.60,104.30 1715.00,106.60 1690.60,106.60" fill="#95cdf7" /><rect x="1709.50" y="106.60" width="8.30" height="6.90" fill="#559fda"/><rect x="1694.30" y="113.50" width="16.40" height="27.60" fill="#79bbee"/><rect x="1706.60" y="113.50" width="4.10" height="27.60" fill="#5ea8e2"/><path d="M1694.3,141 Q1702.5,143.5 1710.7,141 Z" fill="#5ea8e2" /><line x1="1693.40" y1="118.30" x2="1711.40" y2="117.10" stroke="#4d93cf" stroke-width="0.9" /><line x1="1693.40" y1="121.60" x2="1711.40" y2="120.40" stroke="#4d93cf" stroke-width="0.9" /><line x1="1693.40" y1="124.90" x2="1711.40" y2="123.70" stroke="#4d93cf" stroke-width="0.9" /><line x1="1693.40" y1="128.20" x2="1711.40" y2="127.00" stroke="#4d93cf" stroke-width="0.9" /><line x1="1693.40" y1="131.50" x2="1711.40" y2="130.30" stroke="#4d93cf" stroke-width="0.9" /><line x1="1693.40" y1="134.80" x2="1711.40" y2="133.60" stroke="#4d93cf" stroke-width="0.9" /><line x1="1693.40" y1="138.10" x2="1711.40" y2="136.90" stroke="#4d93cf" stroke-width="0.9" /><rect x="1707.00" y="130.70" width="18.80" height="6.40" fill="#f3f3f3"/><rect x="1713.20" y="124.50" width="6.40" height="18.80" fill="#f3f3f3"/><rect x="1707.90" y="131.40" width="17.00" height="5.00" fill="#2aa84a"/><rect x="1713.90" y="125.40" width="5.00" height="17.00" fill="#2aa84a"/><rect x="1740.20" y="104.10" width="35.80" height="35.70" fill="#80c5f8" stroke="#4a90c8" stroke-width="1"/><path d="M1740.7,128 Q1747,118.5 1751.5,118.5 Q1755,118.5 1763.5,130.5 Q1767.5,126 1769.5,126 Q1771.5,126 1775.5,132.5 V139.3 H1740.7 Z" fill="#4791cd" /><circle cx="1766.00" cy="113.70" r="4.10" fill="#ffffc4" stroke="#d6ecfb" stroke-width="0.8"/><rect x="1817.50" y="99.20" width="47.30" height="46.90" fill="#1391d8"/><rect x="1821.60" y="103.20" width="34.30" height="26.30" fill="none" stroke="#5fe3cf" stroke-width="1.2" stroke-dasharray="4.2 2.4"/><path d="M1847.6,120.6 V138.2 L1851.6,134.8 L1854.4,141.4 L1857.8,140 L1855,133.6 L1860.6,133.4 Z" fill="#fff" /></svg>
</div>
<div id="canvas"><div class="abs" style="left:0;top:0;width:1920px;height:2.5px;background:#efefef"></div>
<svg class="abs" style="left:700px;top:128px" width="520" height="680" viewBox="700 300 520 680"><defs><linearGradient id="kface" gradientUnits="userSpaceOnUse" x1="830" y1="400" x2="980" y2="760"><stop offset="0" stop-color="#d3d0c3"/><stop offset="1" stop-color="#d8d5c8"/></linearGradient><linearGradient id="kmouth" gradientUnits="userSpaceOnUse" x1="866" y1="560" x2="884" y2="549"><stop offset="0" stop-color="#6a6860"/><stop offset="1" stop-color="#aeaca0"/></linearGradient></defs><defs><linearGradient id="brim" gradientUnits="userSpaceOnUse" x1="767" y1="0" x2="1153" y2="0"><stop offset="0" stop-color="#d5d1c3"/><stop offset="0.15" stop-color="#dedacc"/><stop offset="0.5" stop-color="#e3dfd1"/><stop offset="0.85" stop-color="#dad6c8"/><stop offset="1" stop-color="#cdc9bb"/></linearGradient><radialGradient id="brimhl" gradientUnits="userSpaceOnUse" cx="958" cy="906" r="115" gradientTransform="translate(958 906) scale(1 0.17) translate(-958 -906)"><stop offset="0" stop-color="#fffdf4" stop-opacity="0.95"/><stop offset="1" stop-color="#fffdf4" stop-opacity="0"/></radialGradient><linearGradient id="btier" gradientUnits="userSpaceOnUse" x1="823" y1="0" x2="1096" y2="0"><stop offset="0" stop-color="#cfcbbd"/><stop offset="0.1" stop-color="#dad6c8"/><stop offset="0.5" stop-color="#e0dcce"/><stop offset="0.9" stop-color="#d7d3c5"/><stop offset="1" stop-color="#cbc7b9"/></linearGradient><linearGradient id="bneck" gradientUnits="userSpaceOnUse" x1="856" y1="0" x2="1064" y2="0"><stop offset="0" stop-color="#d3cfc1"/><stop offset="0.12" stop-color="#dedacc"/><stop offset="0.5" stop-color="#e1ddcf"/><stop offset="0.88" stop-color="#dcd8ca"/><stop offset="1" stop-color="#d0ccbe"/></linearGradient><linearGradient id="bcove" gradientUnits="userSpaceOnUse" x1="0" y1="0" x2="0" y2="1" ><stop offset="0" stop-color="#000" stop-opacity="0"/><stop offset="1" stop-color="#000" stop-opacity="0"/></linearGradient><linearGradient id="btop" gradientUnits="userSpaceOnUse" x1="870" y1="700" x2="1000" y2="790"><stop offset="0" stop-color="#d6d2c4"/><stop offset="1" stop-color="#dbd7c9"/></linearGradient></defs><path d="M1139.0,783.7 L1134.6,776.8 L1129.5,770.0 L1123.7,763.5 L1117.1,757.2 L1109.9,751.2 L1102.1,745.5 L1093.6,740.1 L1084.6,735.0 L1075.1,730.4 L1065.0,726.0 L1054.5,722.1 L1043.6,718.7 L1032.3,715.6 L1020.8,713.0 L1008.9,710.9 L996.9,709.2 L984.7,708.0 L972.4,707.2 L960.0,707.0 L947.6,707.2 L935.3,708.0 L923.1,709.2 L911.1,710.9 L899.2,713.0 L887.7,715.6 L876.4,718.7 L865.5,722.1 L855.0,726.0 L844.9,730.4 L835.4,735.0 L826.4,740.1 L817.9,745.5 L810.1,751.2 L802.9,757.2 L796.3,763.5 L790.5,770.0 L785.4,776.8 L781.0,783.7 L780.8,784.2 L777.2,789.7 L773.6,796.8 L770.7,804.0 L768.7,811.3 L767.4,818.6 L767.0,826.0 L767.4,833.4 L768.7,840.7 L770.7,848.0 L773.6,855.2 L777.2,862.3 L781.7,869.2 L786.9,876.0 L792.9,882.5 L799.5,888.8 L806.9,894.8 L814.9,900.5 L823.5,905.9 L832.7,911.0 L842.5,915.6 L852.8,920.0 L863.5,923.9 L874.6,927.3 L886.1,930.4 L898.0,933.0 L910.0,935.1 L922.3,936.8 L934.8,938.0 L947.4,938.8 L960.0,939.0 L972.6,938.8 L985.2,938.0 L997.7,936.8 L1010.0,935.1 L1022.0,933.0 L1033.9,930.4 L1045.4,927.3 L1056.5,923.9 L1067.2,920.0 L1077.5,915.6 L1087.3,911.0 L1096.5,905.9 L1105.1,900.5 L1113.1,894.8 L1120.5,888.8 L1127.1,882.5 L1133.1,876.0 L1138.3,869.2 L1142.8,862.3 L1146.4,855.2 L1149.3,848.0 L1151.3,840.7 L1152.6,833.4 L1153.0,826.0 L1152.6,818.6 L1151.3,811.3 L1149.3,804.0 L1146.4,796.8 L1142.8,789.7 L1139.2,784.2 L1139.0,783.7Z" fill="url(#brim)"/><clipPath id="rimclip"><path d="M1139.0,783.7 L1134.6,776.8 L1129.5,770.0 L1123.7,763.5 L1117.1,757.2 L1109.9,751.2 L1102.1,745.5 L1093.6,740.1 L1084.6,735.0 L1075.1,730.4 L1065.0,726.0 L1054.5,722.1 L1043.6,718.7 L1032.3,715.6 L1020.8,713.0 L1008.9,710.9 L996.9,709.2 L984.7,708.0 L972.4,707.2 L960.0,707.0 L947.6,707.2 L935.3,708.0 L923.1,709.2 L911.1,710.9 L899.2,713.0 L887.7,715.6 L876.4,718.7 L865.5,722.1 L855.0,726.0 L844.9,730.4 L835.4,735.0 L826.4,740.1 L817.9,745.5 L810.1,751.2 L802.9,757.2 L796.3,763.5 L790.5,770.0 L785.4,776.8 L781.0,783.7 L780.8,784.2 L777.2,789.7 L773.6,796.8 L770.7,804.0 L768.7,811.3 L767.4,818.6 L767.0,826.0 L767.4,833.4 L768.7,840.7 L770.7,848.0 L773.6,855.2 L777.2,862.3 L781.7,869.2 L786.9,876.0 L792.9,882.5 L799.5,888.8 L806.9,894.8 L814.9,900.5 L823.5,905.9 L832.7,911.0 L842.5,915.6 L852.8,920.0 L863.5,923.9 L874.6,927.3 L886.1,930.4 L898.0,933.0 L910.0,935.1 L922.3,936.8 L934.8,938.0 L947.4,938.8 L960.0,939.0 L972.6,938.8 L985.2,938.0 L997.7,936.8 L1010.0,935.1 L1022.0,933.0 L1033.9,930.4 L1045.4,927.3 L1056.5,923.9 L1067.2,920.0 L1077.5,915.6 L1087.3,911.0 L1096.5,905.9 L1105.1,900.5 L1113.1,894.8 L1120.5,888.8 L1127.1,882.5 L1133.1,876.0 L1138.3,869.2 L1142.8,862.3 L1146.4,855.2 L1149.3,848.0 L1151.3,840.7 L1152.6,833.4 L1153.0,826.0 L1152.6,818.6 L1151.3,811.3 L1149.3,804.0 L1146.4,796.8 L1142.8,789.7 L1139.2,784.2 L1139.0,783.7Z"/></clipPath><filter id="kblur" x="-20%" y="-20%" width="140%" height="140%"><feGaussianBlur stdDeviation="5"/></filter><g clip-path="url(#rimclip)"><path d="M1137.0,822.0 L1136.0,832.9 L1133.1,843.6 L1128.3,854.1 L1121.7,864.3 L1113.3,874.0 L1103.2,883.1 L1091.5,891.6 L1078.4,899.3 L1064.0,906.1 L1048.5,912.1 L1032.0,917.0 L1014.7,920.9 L996.8,923.7 L978.5,925.4 L960.0,926.0 L941.5,925.4 L923.2,923.7 L905.3,920.9 L888.0,917.0 L871.5,912.1 L856.0,906.1 L841.6,899.3 L828.5,891.6 L816.8,883.1 L806.7,874.0 L798.3,864.3 L791.7,854.1 L786.9,843.6 L784.0,832.9 L783.0,822.0 L784.0,811.1 L786.9,800.4 L791.7,789.9 L798.3,779.7 L806.7,770.0 L816.8,760.9 L828.5,752.4 L841.6,744.7 L856.0,737.9 L871.5,731.9 L888.0,727.0 L905.3,723.1 L923.2,720.3 L941.5,718.6 L960.0,718.0 L978.5,718.6 L996.8,720.3 L1014.7,723.1 L1032.0,727.0 L1048.5,731.9 L1064.0,737.9 L1078.4,744.7 L1091.5,752.4 L1103.2,760.9 L1113.3,770.0 L1121.7,779.7 L1128.3,789.9 L1133.1,800.4 L1136.0,811.1 L1137.0,822.0" fill="none" stroke="#fffdf2" stroke-opacity="0.38" stroke-width="16" filter="url(#kblur)"/><path d="M1112.0,796.0 L1111.2,805.5 L1108.7,814.9 L1104.6,824.1 L1098.9,833.0 L1091.6,841.5 L1083.0,849.5 L1073.0,856.9 L1061.7,863.6 L1049.3,869.6 L1036.0,874.8 L1021.8,879.1 L1007.0,882.5 L991.6,885.0 L975.9,886.5 L960.0,887.0 L944.1,886.5 L928.4,885.0 L913.0,882.5 L898.2,879.1 L884.0,874.8 L870.7,869.6 L858.3,863.6 L847.0,856.9 L837.0,849.5 L828.4,841.5 L821.1,833.0 L815.4,824.1 L811.3,814.9 L808.8,805.5 L808.0,796.0 L808.8,786.5 L811.3,777.1 L815.4,767.9 L821.1,759.0 L828.4,750.5 L837.0,742.5 L847.0,735.1 L858.3,728.4 L870.7,722.4 L884.0,717.2 L898.2,712.9 L913.0,709.5 L928.4,707.0 L944.1,705.5 L960.0,705.0 L975.9,705.5 L991.6,707.0 L1007.0,709.5 L1021.8,712.9 L1036.0,717.2 L1049.3,722.4 L1061.7,728.4 L1073.0,735.1 L1083.0,742.5 L1091.6,750.5 L1098.9,759.0 L1104.6,767.9 L1108.7,777.1 L1111.2,786.5 L1112.0,796.0" fill="none" stroke="#6a685e" stroke-opacity="0.13" stroke-width="12" filter="url(#kblur)"/></g><path d="M1139.0,783.7 L1134.6,776.8 L1129.5,770.0 L1123.7,763.5 L1117.1,757.2 L1109.9,751.2 L1102.1,745.5 L1093.6,740.1 L1084.6,735.0 L1075.1,730.4 L1065.0,726.0 L1054.5,722.1 L1043.6,718.7 L1032.3,715.6 L1020.8,713.0 L1008.9,710.9 L996.9,709.2 L984.7,708.0 L972.4,707.2 L960.0,707.0 L947.6,707.2 L935.3,708.0 L923.1,709.2 L911.1,710.9 L899.2,713.0 L887.7,715.6 L876.4,718.7 L865.5,722.1 L855.0,726.0 L844.9,730.4 L835.4,735.0 L826.4,740.1 L817.9,745.5 L810.1,751.2 L802.9,757.2 L796.3,763.5 L790.5,770.0 L785.4,776.8 L781.0,783.7 L780.8,784.2 L777.2,789.7 L773.6,796.8 L770.7,804.0 L768.7,811.3 L767.4,818.6 L767.0,826.0 L767.4,833.4 L768.7,840.7 L770.7,848.0 L773.6,855.2 L777.2,862.3 L781.7,869.2 L786.9,876.0 L792.9,882.5 L799.5,888.8 L806.9,894.8 L814.9,900.5 L823.5,905.9 L832.7,911.0 L842.5,915.6 L852.8,920.0 L863.5,923.9 L874.6,927.3 L886.1,930.4 L898.0,933.0 L910.0,935.1 L922.3,936.8 L934.8,938.0 L947.4,938.8 L960.0,939.0 L972.6,938.8 L985.2,938.0 L997.7,936.8 L1010.0,935.1 L1022.0,933.0 L1033.9,930.4 L1045.4,927.3 L1056.5,923.9 L1067.2,920.0 L1077.5,915.6 L1087.3,911.0 L1096.5,905.9 L1105.1,900.5 L1113.1,894.8 L1120.5,888.8 L1127.1,882.5 L1133.1,876.0 L1138.3,869.2 L1142.8,862.3 L1146.4,855.2 L1149.3,848.0 L1151.3,840.7 L1152.6,833.4 L1153.0,826.0 L1152.6,818.6 L1151.3,811.3 L1149.3,804.0 L1146.4,796.8 L1142.8,789.7 L1139.2,784.2 L1139.0,783.7Z" fill="url(#brimhl)"/><path d="M1138.9,783.7 L1143.3,790.6 L1146.9,797.7 L1149.6,804.9 L1151.6,812.2 L1152.7,819.6 L1153.0,827.0 L1152.5,834.4 L1151.1,841.7 L1149.0,849.0 L1146.0,856.2 L1142.2,863.3 L1137.7,870.2 L1132.3,876.9 L1126.3,883.4 L1119.5,889.6 L1112.1,895.6 L1104.0,901.2 L1095.3,906.6 L1086.0,911.6 L1076.2,916.2 L1065.8,920.5 L1055.0,924.4 L1043.8,927.8 L1032.3,930.8 L1020.4,933.3 L1008.3,935.4 L996.0,937.0 L983.5,938.2 L970.9,938.8 L958.3,939.0 L945.7,938.7 L933.1,937.9 L920.7,936.6 L908.4,934.9 L896.4,932.7 L884.6,930.0 L873.1,926.9 L862.0,923.4 L851.4,919.4 L841.2,915.0 L831.5,910.3 L822.3,905.2 L813.8,899.8 L805.9,894.0 L798.6,888.0 L792.0,881.6 L786.2,875.1 L781.1,868.3 L776.7,861.4 L773.1,854.3 L770.4,847.1 L768.4,839.8 L767.3,832.4 L767.0,825.0 L767.5,817.6 L768.9,810.3 L771.0,803.0 L774.0,795.8 L777.8,788.7 L782.3,781.8" fill="none" stroke="#181818" stroke-width="1.1"/><path d="M1107.5,791.8 L1107.2,797.6 L1106.2,803.3 L1104.7,809.0 L1102.5,814.6 L1099.7,820.2 L1096.3,825.6 L1092.3,830.8 L1087.7,835.9 L1082.6,840.8 L1077.0,845.5 L1070.9,850.0 L1064.3,854.2 L1057.3,858.1 L1049.8,861.8 L1041.9,865.1 L1033.8,868.2 L1025.2,870.9 L1016.4,873.3 L1007.4,875.3 L998.2,877.0 L988.8,878.3 L979.3,879.3 L969.6,879.8 L960.0,880.0 L950.4,879.8 L940.7,879.3 L931.2,878.3 L921.8,877.0 L912.6,875.3 L903.6,873.3 L894.8,870.9 L886.2,868.2 L878.1,865.1 L870.2,861.8 L862.7,858.1 L855.7,854.2 L849.1,850.0 L843.0,845.5 L837.4,840.8 L832.3,835.9 L827.7,830.8 L823.7,825.6 L820.3,820.2 L817.5,814.6 L815.3,809.0 L813.8,803.3 L812.8,797.6 L812.5,791.8 L812.8,786.0 L813.8,780.3 L815.3,774.6 L817.5,769.0 L820.3,763.4 L823.7,758.0 L827.7,752.8 L832.3,747.7 L837.4,742.8 L843.0,738.1 L849.1,733.6 L855.7,729.4 L862.7,725.5 L870.2,721.8 L878.1,718.5 L886.2,715.4 L894.8,712.7 L903.6,710.3 L912.6,708.3 L921.8,706.6 L931.2,705.3 L940.7,704.3 L950.4,703.8 L960.0,703.6 L969.6,703.8 L979.3,704.3 L988.8,705.3 L998.2,706.6 L1007.4,708.3 L1016.4,710.3 L1025.2,712.7 L1033.8,715.4 L1041.9,718.5 L1049.8,721.8 L1057.3,725.5 L1064.3,729.4 L1070.9,733.6 L1077.0,738.1 L1082.6,742.8 L1087.7,747.7 L1092.3,752.8 L1096.3,758.0 L1099.7,763.4 L1102.5,769.0 L1104.7,774.6 L1106.2,780.3 L1107.2,786.0 L1107.5,791.8Z" fill="#dbd7c9" stroke="#181818" stroke-width="1.1"/><path d="M866.0,704.2 L866.0,704.2 L865.0,704.9 L865.0,704.9 L864.0,705.5 L864.0,705.5 L863.0,706.1 L857.7,710.0 L852.7,714.1 L848.3,718.4 L844.3,722.9 L840.8,727.5 L840.3,728.2 L840.0,728.6 L839.6,729.4 L839.3,729.8 L838.8,730.5 L838.5,730.9 L838.0,731.7 L837.7,732.0 L837.3,732.8 L837.0,733.2 L836.5,733.9 L836.2,734.3 L833.1,739.2 L830.6,744.3 L828.6,749.4 L827.1,754.5 L827.0,755.6 L826.8,756.2 L826.6,757.3 L826.5,757.8 L826.3,758.9 L826.2,759.5 L826.0,760.6 L825.8,761.1 L825.6,762.2 L825.5,762.7 L825.3,763.8 L825.2,764.4 L824.3,769.7 L824.0,775.0 L824.0,775.7 L824.0,776.5 L824.0,777.2 L824.0,777.9 L824.0,778.6 L824.0,779.4 L824.0,780.1 L824.0,780.8 L824.0,781.5 L824.0,782.2 L824.0,783.0 L824.0,783.7 L824.3,789.0 L825.2,794.3 L826.6,799.6 L828.6,804.7 L831.2,809.8 L834.4,814.8 L838.0,819.7 L842.2,824.4 L846.9,828.9 L852.1,833.2 L857.7,837.3 L863.8,841.2 L870.3,844.8 L877.2,848.2 L884.4,851.3 L892.0,854.1 L899.8,856.6 L908.0,858.8 L916.3,860.7 L924.8,862.3 L933.5,863.5 L942.2,864.3 L951.1,864.9 L960.0,865.0 L968.9,864.9 L977.8,864.3 L986.5,863.5 L995.2,862.3 L1003.7,860.7 L1012.0,858.8 L1020.2,856.6 L1028.0,854.1 L1035.6,851.3 L1042.8,848.2 L1049.7,844.8 L1056.2,841.2 L1062.3,837.3 L1067.9,833.2 L1073.1,828.9 L1077.8,824.4 L1082.0,819.7 L1085.6,814.8 L1088.8,809.8 L1091.4,804.7 L1093.4,799.6 L1094.8,794.3 L1095.7,789.0 L1096.0,783.7 L1096.0,783.0 L1096.0,782.2 L1096.0,781.5 L1096.0,780.8 L1096.0,780.1 L1096.0,779.4 L1096.0,778.6 L1096.0,777.9 L1096.0,777.2 L1096.0,776.5 L1096.0,775.7 L1096.0,775.0 L1095.7,769.7 L1094.8,764.4 L1094.7,763.8 L1094.5,762.7 L1094.4,762.2 L1094.2,761.1 L1094.0,760.6 L1093.8,759.5 L1093.7,758.9 L1093.5,757.8 L1093.4,757.3 L1093.2,756.2 L1093.0,755.6 L1092.9,754.5 L1091.4,749.4 L1089.4,744.3 L1086.9,739.2 L1083.8,734.3 L1083.5,733.9 L1083.0,733.2 L1082.7,732.8 L1082.3,732.0 L1082.0,731.7 L1081.5,730.9 L1081.2,730.5 L1080.7,729.8 L1080.4,729.4 L1080.0,728.6 L1079.7,728.2 L1079.2,727.5 L1075.7,722.9 L1071.7,718.4 L1067.3,714.1 L1062.3,710.0 L1057.0,706.1 L1056.0,705.5 L1056.0,705.5 L1055.0,704.9 L1055.0,704.9 L1054.0,704.2 L1054.0,704.2 L1053.0,703.6 L1053.0,703.6 L1052.0,702.9 L1052.0,702.9 L1051.0,702.3 L1051.0,702.3 L1045.6,698.8 L1039.8,695.6 L1033.7,692.6 L1027.2,689.8 L1020.5,687.3 L1019.4,687.0 L1017.8,686.3 L1012.0,684.1 L1006.0,682.2 L999.8,680.5 L993.4,679.1 L986.9,677.9 L980.3,677.0 L973.6,676.3 L966.8,675.9 L960.0,675.8 L953.2,675.9 L946.4,676.3 L939.7,677.0 L933.1,677.9 L926.6,679.1 L920.2,680.5 L914.0,682.2 L908.0,684.1 L902.2,686.3 L900.6,687.0 L899.5,687.3 L892.8,689.8 L886.3,692.6 L880.2,695.6 L874.4,698.8 L869.0,702.3 L869.0,702.3 L868.0,702.9 L868.0,702.9 L867.0,703.6 L867.0,703.6 L866.0,704.2Z" fill="url(#btier)"/><clipPath id="tierclip"><path d="M866.0,704.2 L866.0,704.2 L865.0,704.9 L865.0,704.9 L864.0,705.5 L864.0,705.5 L863.0,706.1 L857.7,710.0 L852.7,714.1 L848.3,718.4 L844.3,722.9 L840.8,727.5 L840.3,728.2 L840.0,728.6 L839.6,729.4 L839.3,729.8 L838.8,730.5 L838.5,730.9 L838.0,731.7 L837.7,732.0 L837.3,732.8 L837.0,733.2 L836.5,733.9 L836.2,734.3 L833.1,739.2 L830.6,744.3 L828.6,749.4 L827.1,754.5 L827.0,755.6 L826.8,756.2 L826.6,757.3 L826.5,757.8 L826.3,758.9 L826.2,759.5 L826.0,760.6 L825.8,761.1 L825.6,762.2 L825.5,762.7 L825.3,763.8 L825.2,764.4 L824.3,769.7 L824.0,775.0 L824.0,775.7 L824.0,776.5 L824.0,777.2 L824.0,777.9 L824.0,778.6 L824.0,779.4 L824.0,780.1 L824.0,780.8 L824.0,781.5 L824.0,782.2 L824.0,783.0 L824.0,783.7 L824.3,789.0 L825.2,794.3 L826.6,799.6 L828.6,804.7 L831.2,809.8 L834.4,814.8 L838.0,819.7 L842.2,824.4 L846.9,828.9 L852.1,833.2 L857.7,837.3 L863.8,841.2 L870.3,844.8 L877.2,848.2 L884.4,851.3 L892.0,854.1 L899.8,856.6 L908.0,858.8 L916.3,860.7 L924.8,862.3 L933.5,863.5 L942.2,864.3 L951.1,864.9 L960.0,865.0 L968.9,864.9 L977.8,864.3 L986.5,863.5 L995.2,862.3 L1003.7,860.7 L1012.0,858.8 L1020.2,856.6 L1028.0,854.1 L1035.6,851.3 L1042.8,848.2 L1049.7,844.8 L1056.2,841.2 L1062.3,837.3 L1067.9,833.2 L1073.1,828.9 L1077.8,824.4 L1082.0,819.7 L1085.6,814.8 L1088.8,809.8 L1091.4,804.7 L1093.4,799.6 L1094.8,794.3 L1095.7,789.0 L1096.0,783.7 L1096.0,783.0 L1096.0,782.2 L1096.0,781.5 L1096.0,780.8 L1096.0,780.1 L1096.0,779.4 L1096.0,778.6 L1096.0,777.9 L1096.0,777.2 L1096.0,776.5 L1096.0,775.7 L1096.0,775.0 L1095.7,769.7 L1094.8,764.4 L1094.7,763.8 L1094.5,762.7 L1094.4,762.2 L1094.2,761.1 L1094.0,760.6 L1093.8,759.5 L1093.7,758.9 L1093.5,757.8 L1093.4,757.3 L1093.2,756.2 L1093.0,755.6 L1092.9,754.5 L1091.4,749.4 L1089.4,744.3 L1086.9,739.2 L1083.8,734.3 L1083.5,733.9 L1083.0,733.2 L1082.7,732.8 L1082.3,732.0 L1082.0,731.7 L1081.5,730.9 L1081.2,730.5 L1080.7,729.8 L1080.4,729.4 L1080.0,728.6 L1079.7,728.2 L1079.2,727.5 L1075.7,722.9 L1071.7,718.4 L1067.3,714.1 L1062.3,710.0 L1057.0,706.1 L1056.0,705.5 L1056.0,705.5 L1055.0,704.9 L1055.0,704.9 L1054.0,704.2 L1054.0,704.2 L1053.0,703.6 L1053.0,703.6 L1052.0,702.9 L1052.0,702.9 L1051.0,702.3 L1051.0,702.3 L1045.6,698.8 L1039.8,695.6 L1033.7,692.6 L1027.2,689.8 L1020.5,687.3 L1019.4,687.0 L1017.8,686.3 L1012.0,684.1 L1006.0,682.2 L999.8,680.5 L993.4,679.1 L986.9,677.9 L980.3,677.0 L973.6,676.3 L966.8,675.9 L960.0,675.8 L953.2,675.9 L946.4,676.3 L939.7,677.0 L933.1,677.9 L926.6,679.1 L920.2,680.5 L914.0,682.2 L908.0,684.1 L902.2,686.3 L900.6,687.0 L899.5,687.3 L892.8,689.8 L886.3,692.6 L880.2,695.6 L874.4,698.8 L869.0,702.3 L869.0,702.3 L868.0,702.9 L868.0,702.9 L867.0,703.6 L867.0,703.6 L866.0,704.2Z"/></clipPath><g clip-path="url(#tierclip)"><path d="M1082.1,764.8 L1081.0,768.2 L1079.6,771.6 L1077.9,774.9 L1076.0,778.1 L1073.9,781.3 L1071.5,784.4 L1068.8,787.5 L1065.9,790.5 L1062.8,793.4 L1059.5,796.2 L1055.9,798.9 L1052.1,801.5 L1048.2,804.0 L1044.0,806.4 L1039.7,808.7 L1035.2,810.8 L1030.5,812.9 L1025.7,814.8 L1020.7,816.5 L1015.7,818.1 L1010.4,819.6 L1005.1,820.9 L999.7,822.1 L994.2,823.1 L988.6,824.0 L983.0,824.7 L977.3,825.3 L971.5,825.7 L965.8,825.9 L960.0,826.0 L954.2,825.9 L948.5,825.7 L942.7,825.3 L937.0,824.7 L931.4,824.0 L925.8,823.1 L920.3,822.1 L914.9,820.9 L909.6,819.6 L904.3,818.1 L899.3,816.5 L894.3,814.8 L889.5,812.9 L884.8,810.8 L880.3,808.7 L876.0,806.4 L871.8,804.0 L867.9,801.5 L864.1,798.9 L860.5,796.2 L857.2,793.4 L854.1,790.5 L851.2,787.5 L848.5,784.4 L846.1,781.3 L844.0,778.1 L842.1,774.9 L840.4,771.6 L839.0,768.2 L837.9,764.8" fill="none" stroke="#fffdf2" stroke-opacity="0.4" stroke-width="10" filter="url(#kblur)"/><path d="M1093.5,786.0 L1092.7,789.9 L1091.7,793.8 L1090.3,797.7 L1088.6,801.5 L1086.6,805.3 L1084.2,809.0 L1081.6,812.6 L1078.7,816.1 L1075.5,819.6 L1072.0,823.0 L1068.2,826.2 L1064.1,829.3 L1059.8,832.4 L1055.3,835.2 L1050.5,838.0 L1045.5,840.6 L1040.3,843.0 L1034.9,845.3 L1029.3,847.5 L1023.6,849.4 L1017.7,851.2 L1011.6,852.8 L1005.5,854.3 L999.2,855.5 L992.8,856.6 L986.3,857.4 L979.8,858.1 L973.2,858.6 L966.6,858.9 L960.0,859.0 L953.4,858.9 L946.8,858.6 L940.2,858.1 L933.7,857.4 L927.2,856.6 L920.8,855.5 L914.5,854.3 L908.4,852.8 L902.3,851.2 L896.4,849.4 L890.7,847.5 L885.1,845.3 L879.7,843.0 L874.5,840.6 L869.5,838.0 L864.7,835.2 L860.2,832.4 L855.9,829.3 L851.8,826.2 L848.0,823.0 L844.5,819.6 L841.3,816.1 L838.4,812.6 L835.8,809.0 L833.4,805.3 L831.4,801.5 L829.7,797.7 L828.3,793.8 L827.3,789.9 L826.5,786.0" fill="none" stroke="#6a685e" stroke-opacity="0.10" stroke-width="9" filter="url(#kblur)"/></g><path d="M861.3,712.9 L858.4,716.8 L855.8,720.9 L853.7,725.0 L852.1,729.2 L850.9,733.4 L850.2,737.7 L850.0,742.0 L850.2,746.3 L850.9,750.6 L852.1,754.8 L853.7,759.0 L855.8,763.1 L858.4,767.2 L861.3,771.1 L864.7,774.9 L868.5,778.5 L872.7,782.0 L877.3,785.4 L882.2,788.5 L887.5,791.5 L893.0,794.2 L898.9,796.7 L905.0,799.0 L911.3,801.0 L917.9,802.8 L924.6,804.3 L931.5,805.5 L938.5,806.5 L945.6,807.2 L952.8,807.6 L960.0,807.8 L967.2,807.6 L974.4,807.2 L981.5,806.5 L988.5,805.5 L995.4,804.3 L1002.1,802.8 L1008.7,801.0 L1015.0,799.0 L1021.1,796.7 L1027.0,794.2 L1032.5,791.5 L1037.8,788.5 L1042.7,785.4 L1047.3,782.0 L1051.5,778.5 L1055.3,774.9 L1058.7,771.1 L1061.6,767.2 L1064.2,763.1 L1066.3,759.0 L1067.9,754.8 L1069.1,750.6 L1069.8,746.3 L1070.0,742.0 L1069.8,737.7 L1069.1,733.4 L1067.9,729.2 L1066.3,725.0 L1064.2,720.9 L1061.6,716.8 L1058.7,712.9 L1056.2,710.2 L1057.1,712.5 L1057.2,712.9 L1057.4,713.4 L1057.5,713.8 L1057.8,714.4 L1057.9,714.8 L1058.1,715.3 L1058.2,715.8 L1058.4,716.3 L1058.5,716.7 L1058.7,717.3 L1058.8,717.7 L1059.1,718.2 L1060.1,722.1 L1060.8,726.0 L1061.0,730.0 L1060.8,734.0 L1060.1,737.9 L1059.1,741.8 L1057.6,745.6 L1055.6,749.4 L1053.3,753.1 L1050.6,756.7 L1047.5,760.2 L1044.0,763.6 L1040.1,766.8 L1035.9,769.8 L1031.4,772.7 L1026.6,775.4 L1021.5,777.9 L1016.1,780.2 L1010.5,782.3 L1004.7,784.2 L998.7,785.8 L992.5,787.2 L986.1,788.3 L979.7,789.2 L973.2,789.9 L966.6,790.3 L960.0,790.4 L953.4,790.3 L946.8,789.9 L940.3,789.2 L933.9,788.3 L927.5,787.2 L921.3,785.8 L915.3,784.2 L909.5,782.3 L903.9,780.2 L898.5,777.9 L893.4,775.4 L888.6,772.7 L884.1,769.8 L879.9,766.8 L876.0,763.6 L872.5,760.2 L869.4,756.7 L866.7,753.1 L864.4,749.4 L862.4,745.6 L860.9,741.8 L859.9,737.9 L859.2,734.0 L859.0,730.0 L859.2,726.0 L859.9,722.1 L860.9,718.2 L861.2,717.7 L861.3,717.3 L861.5,716.7 L861.6,716.3 L861.8,715.8 L861.9,715.3 L862.1,714.8 L862.2,714.4 L862.5,713.8 L862.6,713.4 L862.8,712.9 L862.9,712.5 L863.8,710.2 L861.3,712.9Z" fill="#8a887c" fill-opacity="0.06"/><path d="M1095.5,790.8 L1094.6,795.3 L1093.3,799.8 L1091.6,804.2 L1089.5,808.6 L1087.0,812.8 L1084.0,817.0 L1080.7,821.1 L1077.1,825.1 L1073.0,828.9 L1068.6,832.6 L1063.9,836.2 L1058.8,839.6 L1053.4,842.8 L1047.8,845.8 L1041.8,848.7 L1035.7,851.3 L1029.2,853.7 L1022.6,855.9 L1015.7,857.9 L1008.7,859.6 L1001.6,861.1 L994.3,862.4 L986.9,863.4 L979.4,864.2 L971.9,864.7 L964.3,865.0 L956.7,865.0 L949.1,864.8 L941.5,864.3 L934.0,863.5 L926.6,862.5 L919.3,861.3 L912.1,859.8 L905.1,858.1 L898.3,856.2 L891.6,854.0 L885.1,851.6 L878.9,849.0 L872.9,846.2 L867.2,843.2 L861.8,840.0 L856.7,836.6 L852.0,833.1 L847.5,829.4 L843.4,825.6 L839.7,821.6 L836.3,817.6 L833.4,813.4 L830.8,809.1 L828.6,804.7 L826.9,800.3 L825.5,795.9 L824.6,791.4 L824.1,786.8 L824.0,782.3 L824.4,777.7 L825.1,773.2 L826.3,768.7 L827.9,764.3 L829.9,759.9" fill="none" stroke="#181818" stroke-width="1.1"/><path d="M1053.8,704.8 L1053.7,704.7 L1053.3,704.1 L1053.3,704.0 L1052.8,703.3 L1052.8,703.3 L1052.4,702.6 L1052.3,702.5 L1051.9,701.9 L1051.9,701.8 L1051.5,701.2 L1051.4,701.1 L1051.0,700.5 L1048.3,696.9 L1045.3,693.5 L1045.1,693.4 L1044.9,693.2 L1044.8,693.0 L1044.6,692.8 L1044.4,692.6 L1044.2,692.4 L1044.0,692.2 L1043.9,692.0 L1043.7,691.9 L1043.5,691.7 L1043.3,691.5 L1043.1,691.3 L1039.8,688.1 L1036.2,685.1 L1032.2,682.1 L1027.9,679.4 L1023.3,676.8 L1018.4,674.5 L1013.3,672.3 L1008.0,670.3 L1002.5,668.5 L996.7,667.0 L990.9,665.6 L984.8,664.5 L978.7,663.7 L972.5,663.1 L966.3,662.7 L960.0,662.6 L953.7,662.7 L947.5,663.1 L941.3,663.7 L935.2,664.5 L929.1,665.6 L923.3,667.0 L917.5,668.5 L912.0,670.3 L906.7,672.3 L901.6,674.5 L896.7,676.8 L892.1,679.4 L887.8,682.1 L883.8,685.1 L880.2,688.1 L876.9,691.3 L876.7,691.5 L876.5,691.7 L876.3,691.9 L876.1,692.0 L876.0,692.2 L875.8,692.4 L875.6,692.6 L875.4,692.8 L875.2,693.0 L875.1,693.2 L874.9,693.4 L874.7,693.5 L871.7,696.9 L869.0,700.5 L868.6,701.1 L868.5,701.2 L868.1,701.8 L868.1,701.9 L867.7,702.5 L867.6,702.6 L867.2,703.3 L867.2,703.3 L866.7,704.0 L866.7,704.1 L866.3,704.7 L866.2,704.8 L863.9,708.5 L862.0,712.3 L860.5,716.2 L860.3,716.8 L860.2,717.0 L860.0,717.6 L860.0,717.8 L859.8,718.4 L859.7,718.6 L859.5,719.2 L859.5,719.4 L859.3,720.0 L859.2,720.2 L859.1,720.8 L859.0,721.0 L857.9,725.0 L857.8,725.5 L857.7,725.8 L857.6,726.3 L857.6,726.6 L857.5,727.2 L857.4,727.4 L857.3,728.0 L857.2,728.2 L857.1,728.8 L857.1,729.1 L857.0,729.6 L856.9,729.9 L856.2,733.9 L856.0,738.0 L856.2,742.1 L856.9,746.1 L858.0,750.1 L859.5,754.1 L861.5,758.0 L863.9,761.8 L866.7,765.5 L869.9,769.1 L873.5,772.6 L877.5,775.9 L881.8,779.0 L886.5,782.0 L891.4,784.8 L896.7,787.3 L902.2,789.7 L908.0,791.9 L914.0,793.8 L920.2,795.5 L926.6,796.9 L933.1,798.1 L939.7,799.0 L946.4,799.7 L953.2,800.1 L960.0,800.2 L966.8,800.1 L973.6,799.7 L980.3,799.0 L986.9,798.1 L993.4,796.9 L999.8,795.5 L1006.0,793.8 L1012.0,791.9 L1017.8,789.7 L1023.3,787.3 L1028.6,784.8 L1033.5,782.0 L1038.2,779.0 L1042.5,775.9 L1046.5,772.6 L1050.1,769.1 L1053.3,765.5 L1056.1,761.8 L1058.5,758.0 L1060.5,754.1 L1062.0,750.1 L1063.1,746.1 L1063.8,742.1 L1064.0,738.0 L1063.8,733.9 L1063.1,729.9 L1063.0,729.6 L1062.9,729.1 L1062.9,728.8 L1062.8,728.2 L1062.7,728.0 L1062.6,727.4 L1062.5,727.2 L1062.4,726.6 L1062.4,726.3 L1062.3,725.8 L1062.2,725.5 L1062.1,725.0 L1061.0,721.0 L1060.9,720.8 L1060.8,720.2 L1060.7,720.0 L1060.5,719.4 L1060.5,719.2 L1060.3,718.6 L1060.2,718.4 L1060.0,717.8 L1060.0,717.6 L1059.8,717.0 L1059.7,716.8 L1059.5,716.2 L1058.0,712.3 L1056.1,708.5 L1053.8,704.8Z" fill="url(#bneck)"/><path d="M1059.8,717.1 L1058.3,713.2 L1056.4,709.4 L1054.1,705.7 L1051.3,702.1 L1048.2,698.6 L1044.6,695.2 L1040.8,691.9 L1036.5,688.9 L1032.0,686.0 L1027.1,683.2 L1022.0,680.7 L1016.6,678.4 L1010.9,676.3 L1005.0,674.4 L999.0,672.8 L992.7,671.4 L986.3,670.2 L979.9,669.3 L973.3,668.6 L966.7,668.3 L960.0,668.1 L953.3,668.3 L946.7,668.6 L940.1,669.3 L933.7,670.2 L927.3,671.4 L921.0,672.8 L915.0,674.4 L909.1,676.3 L903.4,678.4 L898.0,680.7 L892.9,683.2 L888.0,686.0 L883.5,688.9 L879.2,691.9 L875.4,695.2 L871.8,698.6 L868.7,702.1 L865.9,705.7 L863.6,709.4 L861.7,713.2 L860.2,717.1 L859.1,721.1 L859.0,721.4 L858.7,722.5 L858.6,722.9 L858.3,724.0 L858.3,724.4 L858.0,725.5 L857.9,725.9 L857.6,726.9 L857.6,727.3 L857.3,728.4 L857.2,728.8 L856.9,729.9 L856.2,733.9 L856.0,738.0 L856.2,742.1 L856.9,746.1 L858.0,750.1 L859.5,754.1 L861.5,758.0 L863.9,761.8 L866.7,765.5 L869.9,769.1 L873.5,772.6 L877.5,775.9 L881.8,779.0 L886.5,782.0 L891.4,784.8 L896.7,787.3 L902.2,789.7 L908.0,791.9 L914.0,793.8 L920.2,795.5 L926.6,796.9 L933.1,798.1 L939.7,799.0 L946.4,799.7 L953.2,800.1 L960.0,800.2 L966.8,800.1 L973.6,799.7 L980.3,799.0 L986.9,798.1 L993.4,796.9 L999.8,795.5 L1006.0,793.8 L1012.0,791.9 L1017.8,789.7 L1023.3,787.3 L1028.6,784.8 L1033.5,782.0 L1038.2,779.0 L1042.5,775.9 L1046.5,772.6 L1050.1,769.1 L1053.3,765.5 L1056.1,761.8 L1058.5,758.0 L1060.5,754.1 L1062.0,750.1 L1063.1,746.1 L1063.8,742.1 L1064.0,738.0 L1063.8,733.9 L1063.1,729.9 L1062.8,728.8 L1062.7,728.4 L1062.4,727.3 L1062.4,726.9 L1062.1,725.9 L1062.0,725.5 L1061.7,724.4 L1061.7,724.0 L1061.4,722.9 L1061.3,722.5 L1061.0,721.4 L1060.9,721.1 L1059.8,717.1Z" fill="#8a887c" fill-opacity="0.05"/><path d="M1056.2,720.0 L1056.0,723.8 L1055.4,727.5 L1054.4,731.2 L1053.0,734.9 L1051.2,738.5 L1048.9,742.0 L1046.3,745.4 L1043.4,748.8 L1040.1,751.9 L1036.4,755.0 L1032.4,757.9 L1028.1,760.7 L1023.5,763.2 L1018.7,765.6 L1013.6,767.8 L1008.2,769.8 L1002.7,771.6 L997.0,773.1 L991.1,774.4 L985.1,775.5 L979.0,776.4 L972.8,777.0 L966.5,777.4 L960.2,777.5 L954.0,777.4 L947.7,777.0 L941.5,776.4 L935.4,775.5 L929.4,774.4 L923.5,773.1 L917.8,771.6 L912.2,769.8 L906.9,767.8 L901.8,765.6 L897.0,763.2 L892.4,760.7 L888.1,757.9 L884.1,755.0 L880.4,751.9 L877.1,748.8 L874.2,745.4 L871.6,742.0 L869.3,738.5 L867.5,734.9 L866.1,731.2 L865.1,727.5 L864.5,723.8 L864.2,720.0 L864.5,716.2 L865.1,712.5 L866.1,708.8 L867.5,705.1 L869.3,701.5 L871.6,698.0 L874.2,694.6 L877.1,691.2 L880.4,688.1 L884.1,685.0 L888.1,682.1 L892.4,679.3 L897.0,676.8 L901.8,674.4 L906.9,672.2 L912.2,670.2 L917.8,668.4 L923.5,666.9 L929.4,665.6 L935.4,664.5 L941.5,663.6 L947.7,663.0 L954.0,662.6 L960.2,662.5 L966.5,662.6 L972.8,663.0 L979.0,663.6 L985.1,664.5 L991.1,665.6 L997.0,666.9 L1002.7,668.4 L1008.2,670.2 L1013.6,672.2 L1018.7,674.4 L1023.5,676.8 L1028.1,679.3 L1032.4,682.1 L1036.4,685.0 L1040.1,688.1 L1043.4,691.2 L1046.3,694.6 L1048.9,698.0 L1051.2,701.5 L1053.0,705.1 L1054.4,708.8 L1055.4,712.5 L1056.0,716.2 L1056.2,720.0Z" fill="url(#btop)"/><path d="M977.5,768.3 L971.2,765.7 L866.8,707.1 L866.1,708.8 L865.8,710.0 L969.8,768.3 L970.1,768.5 L976.3,771.1 L976.6,771.2 L976.9,771.2 L977.2,771.3 L977.5,771.3 L977.8,771.3 L978.1,771.2 L978.4,771.2 L978.7,771.0 L979.0,770.9 L1055.3,728.0 L1055.4,727.5 L1056.0,724.2 L977.5,768.3Z" fill="#3c3a32" fill-opacity="0.017"/><path d="M977.5,768.3 L971.2,765.7 L866.8,707.1 L866.1,708.8 L865.1,712.5 L865.0,713.0 L968.3,770.9 L968.9,771.2 L975.2,773.8 L975.8,774.0 L976.4,774.2 L976.9,774.3 L977.6,774.3 L978.2,774.3 L978.8,774.2 L979.3,774.0 L979.9,773.8 L980.4,773.5 L1054.1,732.1 L1054.4,731.2 L1055.4,727.5 L1056.0,724.2 L977.5,768.3Z" fill="#3c3a32" fill-opacity="0.017"/><path d="M977.5,768.3 L971.2,765.7 L866.8,707.1 L866.1,708.8 L865.1,712.5 L864.5,716.1 L966.8,773.5 L967.8,774.0 L974.0,776.6 L974.6,776.8 L979.0,776.4 L982.3,775.9 L1052.1,736.7 L1053.0,734.9 L1054.4,731.2 L1055.4,727.5 L1056.0,724.2 L977.5,768.3Z" fill="#3c3a32" fill-opacity="0.017"/><path d="M977.5,768.3 L971.2,765.7 L866.8,707.1 L866.1,708.8 L865.1,712.5 L864.5,716.2 L864.3,719.5 L965.4,776.2 L966.6,776.8 L967.9,777.3 L972.8,777.0 L979.0,776.4 L985.1,775.5 L991.0,774.5 L1049.1,741.8 L1051.2,738.5 L1053.0,734.9 L1054.4,731.2 L1055.4,727.5 L1056.0,724.2 L977.5,768.3Z" fill="#3c3a32" fill-opacity="0.017"/><path d="M977.5,768.3 L971.2,765.7 L866.8,707.1 L866.1,708.8 L865.1,712.5 L864.5,716.2 L864.2,720.0 L864.4,723.0 L961.6,777.5 L966.5,777.4 L972.8,777.0 L979.0,776.4 L985.1,775.5 L991.1,774.4 L997.0,773.1 L1001.9,771.8 L1043.9,748.1 L1046.3,745.4 L1048.9,742.0 L1051.2,738.5 L1053.0,734.9 L1054.4,731.2 L1055.4,727.5 L1056.0,724.2 L977.5,768.3Z" fill="#3c3a32" fill-opacity="0.017"/><path d="M977.5,768.3 L971.2,765.7 L866.8,707.1 L866.1,708.8 L865.1,712.5 L864.5,716.2 L864.2,720.0 L864.5,723.8 L864.9,726.7 L955.3,777.4 L960.2,777.5 L966.5,777.4 L972.8,777.0 L979.0,776.4 L985.1,775.5 L991.1,774.4 L997.0,773.1 L1002.7,771.6 L1008.2,769.8 L1013.6,767.8 L1018.7,765.6 L1021.0,764.5 L1030.6,759.1 L1032.4,757.9 L1036.4,755.0 L1040.1,751.9 L1043.4,748.8 L1046.3,745.4 L1048.9,742.0 L1051.2,738.5 L1053.0,734.9 L1054.4,731.2 L1055.4,727.5 L1056.0,724.2 L977.5,768.3Z" fill="#3c3a32" fill-opacity="0.017"/><path d="M977.5,768.3 L971.2,765.7 L866.8,707.1 L866.1,708.8 L865.1,712.5 L864.5,716.2 L864.2,720.0 L864.5,723.8 L865.1,727.5 L866.0,730.7 L948.6,777.1 L954.0,777.4 L960.2,777.5 L966.5,777.4 L972.8,777.0 L979.0,776.4 L985.1,775.5 L991.1,774.4 L997.0,773.1 L1002.7,771.6 L1008.2,769.8 L1013.6,767.8 L1018.7,765.6 L1023.5,763.2 L1028.1,760.7 L1032.4,757.9 L1036.4,755.0 L1040.1,751.9 L1043.4,748.8 L1046.3,745.4 L1048.9,742.0 L1051.2,738.5 L1053.0,734.9 L1054.4,731.2 L1055.4,727.5 L1056.0,724.2 L977.5,768.3Z" fill="#3c3a32" fill-opacity="0.017"/><path d="M977.5,768.3 L971.2,765.7 L866.8,707.1 L866.1,708.8 L865.1,712.5 L864.5,716.2 L864.2,720.0 L864.5,723.8 L865.1,727.5 L866.1,731.2 L867.5,734.9 L867.6,735.1 L941.2,776.3 L941.5,776.4 L947.7,777.0 L954.0,777.4 L960.2,777.5 L966.5,777.4 L972.8,777.0 L979.0,776.4 L985.1,775.5 L991.1,774.4 L997.0,773.1 L1002.7,771.6 L1008.2,769.8 L1013.6,767.8 L1018.7,765.6 L1023.5,763.2 L1028.1,760.7 L1032.4,757.9 L1036.4,755.0 L1040.1,751.9 L1043.4,748.8 L1046.3,745.4 L1048.9,742.0 L1051.2,738.5 L1053.0,734.9 L1054.4,731.2 L1055.4,727.5 L1056.0,724.2 L977.5,768.3Z" fill="#3c3a32" fill-opacity="0.017"/><path d="M977.5,768.3 L971.2,765.7 L866.8,707.1 L866.1,708.8 L865.1,712.5 L864.5,716.2 L864.2,720.0 L864.5,723.8 L865.1,727.5 L866.1,731.2 L867.5,734.9 L869.3,738.5 L870.3,740.1 L932.7,775.1 L935.4,775.5 L941.5,776.4 L947.7,777.0 L954.0,777.4 L960.2,777.5 L966.5,777.4 L972.8,777.0 L979.0,776.4 L985.1,775.5 L991.1,774.4 L997.0,773.1 L1002.7,771.6 L1008.2,769.8 L1013.6,767.8 L1018.7,765.6 L1023.5,763.2 L1028.1,760.7 L1032.4,757.9 L1036.4,755.0 L1040.1,751.9 L1043.4,748.8 L1046.3,745.4 L1048.9,742.0 L1051.2,738.5 L1053.0,734.9 L1054.4,731.2 L1055.4,727.5 L1056.0,724.2 L977.5,768.3Z" fill="#3c3a32" fill-opacity="0.017"/><path d="M977.5,768.3 L971.2,765.7 L866.8,707.1 L866.1,708.8 L865.1,712.5 L864.5,716.2 L864.2,720.0 L864.5,723.8 L865.1,727.5 L866.1,731.2 L867.5,734.9 L869.3,738.5 L871.6,742.0 L874.2,745.4 L874.5,745.8 L922.8,772.9 L923.5,773.1 L929.4,774.4 L935.4,775.5 L941.5,776.4 L947.7,777.0 L954.0,777.4 L960.2,777.5 L966.5,777.4 L972.8,777.0 L979.0,776.4 L985.1,775.5 L991.1,774.4 L997.0,773.1 L1002.7,771.6 L1008.2,769.8 L1013.6,767.8 L1018.7,765.6 L1023.5,763.2 L1028.1,760.7 L1032.4,757.9 L1036.4,755.0 L1040.1,751.9 L1043.4,748.8 L1046.3,745.4 L1048.9,742.0 L1051.2,738.5 L1053.0,734.9 L1054.4,731.2 L1055.4,727.5 L1056.0,724.2 L977.5,768.3Z" fill="#3c3a32" fill-opacity="0.017"/><path d="M1056.0,724.0 L1055.5,727.1 L1054.7,730.2 L1053.7,733.2 L1052.3,736.2 L1050.7,739.2 L1048.9,742.1 L1046.8,744.9 L1044.4,747.7 L1041.8,750.4 L1038.9,753.0 L1035.8,755.5 L1032.5,757.9 L1029.0,760.2 L1025.2,762.3 L1021.3,764.4 L1017.2,766.3 L1013.0,768.1 L1008.5,769.7 L1004.0,771.2 L999.3,772.5 L994.5,773.7 L989.6,774.7 L984.6,775.6 L979.6,776.3 L974.4,776.9 L969.3,777.2 L964.1,777.5 L958.9,777.5 L953.7,777.4 L948.6,777.1 L943.4,776.6 L938.3,776.0 L933.3,775.2 L928.4,774.2 L923.5,773.1 L918.8,771.9 L914.1,770.4 L909.7,768.9 L905.3,767.2 L901.1,765.3 L897.1,763.3 L893.3,761.2 L889.7,759.0 L886.3,756.7 L883.1,754.2 L880.1,751.7 L877.4,749.0 L874.9,746.3 L872.6,743.5 L870.6,740.6 L868.9,737.7 L867.4,734.7 L866.2,731.7 L865.3,728.6 L864.7,725.5 L864.3,722.4 L864.3,719.3 L864.5,716.2 L864.9,713.1 L865.7,710.0" fill="none" stroke="#181818" stroke-width="1.1"/><path d="M1017.9,744.8 L1017.2,745.4 L1016.2,746.2 L1015.3,747.3 L1015.2,748.4 L1016.1,749.6 L1017.6,751.0 L1019.4,752.5 L1021.0,754.0 L1022.4,755.5 L1023.8,757.0 L1025.2,758.7 L1026.7,760.8 L1028.4,763.5 L1030.2,766.6 L1031.9,770.0 L1033.3,773.3 L1034.2,776.5 L1034.7,779.7 L1035.2,783.1 L1035.8,786.7 L1036.6,790.7 L1037.4,795.0 L1038.5,799.5 L1040.0,804.0 L1042.2,808.5 L1044.8,813.1 L1047.5,817.7 L1050.0,822.5 L1052.1,827.6 L1053.9,832.9 L1055.7,838.0 L1057.5,842.5 L1059.2,846.0 L1060.8,848.8 L1062.6,851.5 L1065.0,855.0 L1068.3,859.5 L1072.3,864.7 L1076.4,870.0 L1080.0,875.0 L1083.0,879.7 L1085.7,884.3 L1088.0,888.7 L1090.0,892.5 L1091.5,895.7 L1092.6,898.5 L1093.4,900.9 L1094.0,903.0 L1094.5,904.9 L1094.8,906.4 L1094.9,907.6 L1095.0,908.5" fill="none" stroke="#181818" stroke-width="1.1"/><path d="M971.3,765.7 L972.7,777" fill="none" stroke="#181818" stroke-width="1.1"/><path d="M833.5,733 Q842,729.5 850.5,728.4" fill="none" stroke="#181818" stroke-width="0.9" stroke-opacity="0.8"/><defs><g id="kl"><polygon points="846.2,383.8 848.1,383.3 850.8,382.6 854.0,381.9 857.5,381.2 861.4,380.7 865.7,380.1 870.3,379.7 875.0,379.5 879.8,379.6 884.8,379.9 889.9,380.4 895.0,381.2 900.0,382.3 905.0,383.7 910.0,385.2 915.0,387.0 920.1,389.0 925.2,391.2 930.2,393.6 935.0,396.2 939.6,399.1 944.1,402.1 948.4,405.4 952.5,408.8 956.5,412.3 960.3,416.0 964.0,419.9 967.5,423.8 970.9,427.7 974.1,431.8 977.1,435.9 980.0,440.0 982.7,444.1 985.2,448.1 987.6,452.2 990.0,456.2 992.3,460.4 994.6,464.5 996.8,468.6 998.8,472.5 1000.5,476.2 1002.2,479.8 1003.7,483.2 1005.0,486.2 1006.2,489.1 1007.3,491.7 1008.3,493.9 1008.9,495.4 1006.4,493.8 1002.9,491.5 998.9,488.9 995.0,486.2 991.3,483.6 987.5,480.8 983.7,478.0 980.0,475.0 976.1,471.6 972.0,467.9 968.3,464.6 965.8,462.3 967.0,464.4 968.6,467.4 970.7,470.8 973.3,474.4 976.7,478.1 980.7,482.1 985.0,486.2 988.9,490.0 992.4,493.4 995.8,496.6 999.1,499.9 1002.2,503.3 1005.2,507.1 1008.2,511.1 1010.9,515.1 1013.3,518.9 1015.4,522.4 1017.1,525.8 1018.7,529.1 1020.0,532.2 1021.1,534.9 1021.9,537.3 1022.6,540.0 1023.3,543.3 1024.0,547.6 1024.6,552.6 1025.2,557.9 1025.6,563.3 1025.9,568.8 1026.0,574.4 1026.1,580.1 1026.0,585.6 1025.8,590.7 1025.4,595.7 1025.0,600.6 1024.4,605.6 1023.6,611.3 1022.7,617.4 1021.7,622.9 1021.1,626.7 1020.0,624.2 1018.4,620.6 1016.5,616.4 1014.4,612.2 1012.2,607.9 1009.7,603.4 1007.1,598.8 1004.4,594.4 1001.7,590.4 998.8,586.5 995.9,582.7 993.3,578.9 990.8,574.9 988.4,570.9 986.3,567.0 984.4,563.3 982.9,559.9 981.7,556.6 980.8,553.6 980.0,551.0 979.5,548.8 979.2,546.9 979.0,545.5 978.9,544.4 979.0,547.7 979.2,552.5 979.5,557.9 980.0,563.3 980.8,568.6 981.7,574.2 982.9,580.0 984.4,585.6 986.3,591.2 988.4,596.7 990.8,602.3 993.3,607.8 996.0,613.5 998.9,619.2 1001.8,624.8 1004.4,630.0 1006.7,635.0 1008.9,639.7 1010.7,644.1 1012.2,647.8 1013.2,650.9 1013.7,653.4 1014.1,655.3 1014.3,656.7 1000.1,708.4 999.2,706.0 997.9,702.7 996.4,698.7 995.0,694.4 993.7,689.7 992.4,684.5 991.1,679.1 989.9,674.0 988.8,669.1 987.9,664.2 987.0,659.7 986.4,655.7 986.0,652.3 985.9,649.3 985.8,646.9 985.8,645.2 985.3,648.0 984.6,652.1 983.9,656.8 983.3,661.7 982.9,666.8 982.6,672.3 982.5,677.9 982.5,683.3 982.7,688.4 983.1,693.4 983.6,698.3 984.2,703.3 984.9,708.4 985.7,713.5 986.6,718.6 987.5,723.3 988.6,728.0 990.0,732.5 991.2,736.5 992.0,739.3 990.6,739.9 988.5,740.9 986.2,741.9 984.4,742.8 983.0,743.5 981.9,744.1 981.0,744.7 980.3,745.5 979.8,746.4 979.6,747.4 979.6,748.5 979.6,749.7 979.7,751.0 980.0,752.5 980.3,754.0 980.6,755.5 980.9,756.9 981.3,758.2 981.5,759.6 981.7,760.8 981.7,761.9 981.6,763.0 981.4,764.0 981.0,765.0 980.4,766.0 979.6,767.1 978.6,767.9 977.5,768.3 976.0,768.0 974.2,767.2 972.4,766.3 971.2,765.7 865.7,706.5 865.1,705.6 864.2,704.3 863.2,702.7 862.2,701.0 861.3,699.1 860.3,697.0 859.4,694.8 858.8,692.8 858.3,691.1 858.1,689.5 858.0,687.8 858.0,685.8 858.4,683.3 859.0,680.5 859.5,677.6 859.4,674.7 858.5,671.9 857.1,669.2 855.4,666.4 853.9,663.6 852.5,660.9 851.0,658.1 849.5,655.4 848.3,652.5 847.2,649.4 846.3,646.2 845.5,643.0 844.9,640.0 844.4,637.3 843.9,634.8 843.7,632.4 843.8,630.0 844.2,627.5 845.0,624.9 845.9,622.4 847.0,620.0 848.2,617.7 849.5,615.5 850.9,613.3 852.5,611.2 854.2,609.3 856.0,607.5 857.9,605.6 860.0,603.8 862.3,601.7 864.8,599.6 867.4,597.5 870.0,595.5 872.5,593.7 875.0,592.0 877.5,590.4 880.0,588.8 882.5,587.1 885.0,585.5 887.5,584.0 890.0,582.5 892.5,581.1 895.1,579.8 897.6,578.5 900.0,577.0 902.3,575.4 904.6,573.7 906.8,571.9 908.8,570.0 910.6,567.9 912.2,565.7 913.7,563.5 915.0,561.2 916.0,559.1 916.8,556.9 917.5,554.7 918.0,552.5 918.4,550.2 918.7,547.7 918.9,545.5 919.0,544.0 918.8,544.4 918.6,545.0 918.2,545.7 917.5,546.5 916.6,547.6 915.4,548.8 914.0,550.1 912.5,551.2 910.8,552.2 908.9,553.1 906.9,553.9 905.0,554.5 903.1,554.9 901.2,555.1 899.4,555.2 897.5,555.0 895.6,554.6 893.8,554.0 891.9,553.2 890.0,552.5 888.1,551.7 886.2,550.9 884.3,550.1 882.5,549.5 880.8,549.1 879.2,548.7 877.7,548.6 876.2,548.8 874.9,549.2 873.6,550.0 872.4,550.9 871.2,552.0 870.2,553.3 869.3,554.8 868.4,556.2 867.5,557.5 866.5,558.5 865.4,559.3 864.4,560.0 863.8,560.5 862.6,559.5 861.0,558.1 859.2,556.5 857.5,555.0 855.9,553.7 854.4,552.3 852.8,551.1 851.2,550.0 849.7,549.2 848.1,548.5 846.5,548.0 845.0,547.5 843.4,547.1 841.7,546.7 840.3,546.4 839.2,546.2 838.7,545.4 838.0,544.2 837.1,542.8 836.2,541.2 835.5,539.6 834.7,537.7 833.9,535.8 833.0,533.8 832.1,531.7 831.1,529.5 830.1,527.2 829.2,525.0 828.5,522.8 827.8,520.6 827.3,518.4 826.8,516.2 826.3,514.0 825.9,511.7 825.6,509.5 825.5,507.5 825.5,505.7 825.6,504.1 825.8,502.7 826.2,501.2 826.9,499.9 827.8,498.7 828.8,497.5 830.0,496.2 831.4,494.9 833.0,493.6 834.6,492.1 836.2,490.5 837.8,488.7 839.5,486.7 841.0,484.6 842.5,482.5 843.9,480.3 845.2,478.1 846.4,475.9 847.5,473.8 848.6,471.8 849.6,469.8 850.5,468.0 851.2,466.2 851.9,464.5 852.4,462.9 852.8,461.4 853.0,460.0 853.0,459.0 852.9,458.2 852.7,457.4 852.5,456.2 852.3,454.6 852.1,452.7 852.0,450.7 852.0,448.8 852.2,446.9 852.6,445.1 853.1,443.2 853.8,441.2 854.5,439.2 855.5,437.0 856.5,434.7 857.5,432.5 858.6,430.2 859.7,427.9 860.9,425.7 862.0,423.8 863.1,422.0 864.2,420.5 865.2,419.2 866.2,418.0 867.3,416.9 868.4,415.9 869.3,415.1 870.0,414.5 869.5,413.3 868.8,411.5 867.9,409.4 867.0,407.5 866.1,405.7 865.2,403.8 864.1,401.9 863.0,400.0 861.7,398.1 860.4,396.1 859.0,394.2 857.5,392.5 856.0,390.9 854.3,389.5 852.7,388.2 851.2,387.0 849.8,386.0 848.4,385.0 847.1,384.3" fill="#d6d2c4"/><path d="M846.2,383.8L848.1,383.3L850.8,382.6" fill="none" stroke="#c9c3b7" stroke-width="3" stroke-linecap="round" stroke-linejoin="round"/><path d="M850.8,382.6L854.0,381.9" fill="none" stroke="#c9c6b7" stroke-width="3" stroke-linecap="round" stroke-linejoin="round"/><path d="M854.0,381.9L857.5,381.2" fill="none" stroke="#c9c6ba" stroke-width="3" stroke-linecap="round" stroke-linejoin="round"/><path d="M857.5,381.2L861.4,380.7L865.7,380.1M1014.3,656.7L1000.1,708.4" fill="none" stroke="#ccc9ba" stroke-width="3" stroke-linecap="round" stroke-linejoin="round"/><path d="M865.7,380.1L870.3,379.7" fill="none" stroke="#ccc9bd" stroke-width="3" stroke-linecap="round" stroke-linejoin="round"/><path d="M870.3,379.7L875.0,379.5M979.8,746.4L979.6,747.4M981.6,763.0L981.4,764.0" fill="none" stroke="#cfccbd" stroke-width="3" stroke-linecap="round" stroke-linejoin="round"/><path d="M875.0,379.5L879.8,379.6M1024.4,605.6L1023.6,611.3L1022.7,617.4L1021.7,622.9L1021.1,626.7M984.6,652.1L983.9,656.8" fill="none" stroke="#d2cfc0" stroke-width="3" stroke-linecap="round" stroke-linejoin="round"/><path d="M879.8,379.6L884.8,379.9M1025.0,600.6L1024.4,605.6" fill="none" stroke="#d5cfc3" stroke-width="3" stroke-linecap="round" stroke-linejoin="round"/><path d="M884.8,379.9L889.9,380.4M1025.8,590.7L1025.4,595.7L1025.0,600.6M983.3,661.7L982.9,666.8M981.7,761.9L981.6,763.0" fill="none" stroke="#d5d2c3" stroke-width="3" stroke-linecap="round" stroke-linejoin="round"/><path d="M889.9,380.4L895.0,381.2M1026.1,580.1L1026.0,585.6M982.6,672.3L982.5,677.9" fill="none" stroke="#d8d5c6" stroke-width="3" stroke-linecap="round" stroke-linejoin="round"/><path d="M895.0,381.2L900.0,382.3M1025.6,563.3L1025.9,568.8L1026.0,574.4M978.9,544.4L979.0,547.7L979.2,552.5L979.5,557.9M982.5,683.3L982.7,688.4M979.6,748.5L979.6,749.7" fill="none" stroke="#dbd8c9" stroke-width="3" stroke-linecap="round" stroke-linejoin="round"/><path d="M900.0,382.3L905.0,383.7M1025.2,557.9L1025.6,563.3M982.7,688.4L983.1,693.4" fill="none" stroke="#ded8cc" stroke-width="3" stroke-linecap="round" stroke-linejoin="round"/><path d="M905.0,383.7L910.0,385.2M1024.6,552.6L1025.2,557.9M979.5,557.9L980.0,563.3M983.1,693.4L983.6,698.3M979.6,749.7L979.7,751.0" fill="none" stroke="#dedbcc" stroke-width="3" stroke-linecap="round" stroke-linejoin="round"/><path d="M910.0,385.2L915.0,387.0L920.1,389.0L925.2,391.2L930.2,393.6L935.0,396.2L939.6,399.1L944.1,402.1L948.4,405.4L952.5,408.8L956.5,412.3L960.3,416.0L964.0,419.9L967.5,423.8L970.9,427.7L974.1,431.8L977.1,435.9L980.0,440.0L982.7,444.1L985.2,448.1L987.6,452.2L990.0,456.2L992.3,460.4L994.6,464.5L996.8,468.6L998.8,472.5L1000.5,476.2L1002.2,479.8L1003.7,483.2L1005.0,486.2L1006.2,489.1L1007.3,491.7L1008.3,493.9L1008.9,495.4M965.8,462.3L967.0,464.4L968.6,467.4L970.7,470.8L973.3,474.4L976.7,478.1L980.7,482.1L985.0,486.2L988.9,490.0L992.4,493.4L995.8,496.6L999.1,499.9L1002.2,503.3L1005.2,507.1L1008.2,511.1L1010.9,515.1L1013.3,518.9L1015.4,522.4L1017.1,525.8L1018.7,529.1L1020.0,532.2L1021.1,534.9L1021.9,537.3L1022.6,540.0L1023.3,543.3L1024.0,547.6M980.0,563.3L980.8,568.6L981.7,574.2L982.9,580.0L984.4,585.6L986.3,591.2L988.4,596.7L990.8,602.3L993.3,607.8L996.0,613.5L998.9,619.2L1001.8,624.8L1004.4,630.0L1006.7,635.0L1008.9,639.7L1010.7,644.1L1012.2,647.8L1013.2,650.9L1013.7,653.4L1014.1,655.3L1014.3,656.7M984.9,708.4L985.7,713.5L986.6,718.6L987.5,723.3L988.6,728.0L990.0,732.5L991.2,736.5L992.0,739.3M979.7,751.0L980.0,752.5L980.3,754.0L980.6,755.5L980.9,756.9L981.3,758.2L981.5,759.6" fill="none" stroke="#e1decf" stroke-width="3" stroke-linecap="round" stroke-linejoin="round"/><path d="M1024.0,547.6L1024.6,552.6M984.2,703.3L984.9,708.4" fill="none" stroke="#e1dbcf" stroke-width="3" stroke-linecap="round" stroke-linejoin="round"/><path d="M1026.0,574.4L1026.1,580.1M982.5,677.9L982.5,683.3" fill="none" stroke="#d8d5c9" stroke-width="3" stroke-linecap="round" stroke-linejoin="round"/><path d="M1026.0,585.6L1025.8,590.7M979.6,747.4L979.6,748.5" fill="none" stroke="#d8d2c6" stroke-width="3" stroke-linecap="round" stroke-linejoin="round"/><path d="M985.8,645.2L985.3,648.0L984.6,652.1" fill="none" stroke="#d2ccc0" stroke-width="3" stroke-linecap="round" stroke-linejoin="round"/><path d="M983.9,656.8L983.3,661.7" fill="none" stroke="#d2cfc3" stroke-width="3" stroke-linecap="round" stroke-linejoin="round"/><path d="M982.9,666.8L982.6,672.3" fill="none" stroke="#d5d2c6" stroke-width="3" stroke-linecap="round" stroke-linejoin="round"/><path d="M983.6,698.3L984.2,703.3M981.5,759.6L981.7,760.8" fill="none" stroke="#dedbcf" stroke-width="3" stroke-linecap="round" stroke-linejoin="round"/><path d="M984.4,742.8L983.0,743.5L981.9,744.1L981.0,744.7M912.5,551.2L910.8,552.2M874.9,549.2L873.6,550.0" fill="none" stroke="#b4aea2" stroke-width="3" stroke-linecap="round" stroke-linejoin="round"/><path d="M981.0,744.7L980.3,745.5M916.6,547.6L915.4,548.8" fill="none" stroke="#bab7a8" stroke-width="3" stroke-linecap="round" stroke-linejoin="round"/><path d="M980.3,745.5L979.8,746.4" fill="none" stroke="#c6c0b4" stroke-width="3" stroke-linecap="round" stroke-linejoin="round"/><path d="M981.7,760.8L981.7,761.9" fill="none" stroke="#dbd5c9" stroke-width="3" stroke-linecap="round" stroke-linejoin="round"/><path d="M981.4,764.0L981.0,765.0M919.0,544.0L918.8,544.4L918.6,545.0" fill="none" stroke="#c6c3b4" stroke-width="3" stroke-linecap="round" stroke-linejoin="round"/><path d="M981.0,765.0L980.4,766.0M869.3,554.8L868.4,556.2" fill="none" stroke="#c3bdb1" stroke-width="3" stroke-linecap="round" stroke-linejoin="round"/><path d="M980.4,766.0L979.6,767.1" fill="none" stroke="#bdbaae" stroke-width="3" stroke-linecap="round" stroke-linejoin="round"/><path d="M979.6,767.1L978.6,767.9" fill="none" stroke="#b7b4a5" stroke-width="3" stroke-linecap="round" stroke-linejoin="round"/><path d="M882.5,587.1L885.0,585.5L887.5,584.0L890.0,582.5M897.6,578.5L900.0,577.0M918.2,545.7L917.5,546.5M871.2,552.0L870.2,553.3" fill="none" stroke="#bdbaab" stroke-width="3" stroke-linecap="round" stroke-linejoin="round"/><path d="M890.0,582.5L892.5,581.1M868.4,556.2L867.5,557.5" fill="none" stroke="#c0baae" stroke-width="3" stroke-linecap="round" stroke-linejoin="round"/><path d="M892.5,581.1L895.1,579.8L897.6,578.5" fill="none" stroke="#c0bdae" stroke-width="3" stroke-linecap="round" stroke-linejoin="round"/><path d="M918.6,545.0L918.2,545.7" fill="none" stroke="#c3c0b1" stroke-width="3" stroke-linecap="round" stroke-linejoin="round"/><path d="M917.5,546.5L916.6,547.6" fill="none" stroke="#bab7ab" stroke-width="3" stroke-linecap="round" stroke-linejoin="round"/><path d="M915.4,548.8L914.0,550.1M872.4,550.9L871.2,552.0" fill="none" stroke="#b7b4a8" stroke-width="3" stroke-linecap="round" stroke-linejoin="round"/><path d="M914.0,550.1L912.5,551.2M873.6,550.0L872.4,550.9M866.5,558.5L865.4,559.3L864.4,560.0L863.8,560.5" fill="none" stroke="#b4b1a2" stroke-width="3" stroke-linecap="round" stroke-linejoin="round"/><path d="M870.2,553.3L869.3,554.8" fill="none" stroke="#c0bdb1" stroke-width="3" stroke-linecap="round" stroke-linejoin="round"/><path d="M867.5,557.5L866.5,558.5" fill="none" stroke="#bab4a8" stroke-width="3" stroke-linecap="round" stroke-linejoin="round"/></g></defs><use href="#kl" x="80.00" y="-45.00"/><use href="#kl" x="79.13" y="-44.51"/><use href="#kl" x="78.26" y="-44.02"/><use href="#kl" x="77.39" y="-43.53"/><use href="#kl" x="76.52" y="-43.04"/><use href="#kl" x="75.65" y="-42.55"/><use href="#kl" x="74.78" y="-42.07"/><use href="#kl" x="73.91" y="-41.58"/><use href="#kl" x="73.04" y="-41.09"/><use href="#kl" x="72.17" y="-40.60"/><use href="#kl" x="71.30" y="-40.11"/><use href="#kl" x="70.43" y="-39.62"/><use href="#kl" x="69.57" y="-39.13"/><use href="#kl" x="68.70" y="-38.64"/><use href="#kl" x="67.83" y="-38.15"/><use href="#kl" x="66.96" y="-37.66"/><use href="#kl" x="66.09" y="-37.17"/><use href="#kl" x="65.22" y="-36.68"/><use href="#kl" x="64.35" y="-36.20"/><use href="#kl" x="63.48" y="-35.71"/><use href="#kl" x="62.61" y="-35.22"/><use href="#kl" x="61.74" y="-34.73"/><use href="#kl" x="60.87" y="-34.24"/><use href="#kl" x="60.00" y="-33.75"/><use href="#kl" x="59.13" y="-33.26"/><use href="#kl" x="58.26" y="-32.77"/><use href="#kl" x="57.39" y="-32.28"/><use href="#kl" x="56.52" y="-31.79"/><use href="#kl" x="55.65" y="-31.30"/><use href="#kl" x="54.78" y="-30.82"/><use href="#kl" x="53.91" y="-30.33"/><use href="#kl" x="53.04" y="-29.84"/><use href="#kl" x="52.17" y="-29.35"/><use href="#kl" x="51.30" y="-28.86"/><use href="#kl" x="50.43" y="-28.37"/><use href="#kl" x="49.57" y="-27.88"/><use href="#kl" x="48.70" y="-27.39"/><use href="#kl" x="47.83" y="-26.90"/><use href="#kl" x="46.96" y="-26.41"/><use href="#kl" x="46.09" y="-25.92"/><use href="#kl" x="45.22" y="-25.43"/><use href="#kl" x="44.35" y="-24.95"/><use href="#kl" x="43.48" y="-24.46"/><use href="#kl" x="42.61" y="-23.97"/><use href="#kl" x="41.74" y="-23.48"/><use href="#kl" x="40.87" y="-22.99"/><use href="#kl" x="40.00" y="-22.50"/><use href="#kl" x="39.13" y="-22.01"/><use href="#kl" x="38.26" y="-21.52"/><use href="#kl" x="37.39" y="-21.03"/><use href="#kl" x="36.52" y="-20.54"/><use href="#kl" x="35.65" y="-20.05"/><use href="#kl" x="34.78" y="-19.57"/><use href="#kl" x="33.91" y="-19.08"/><use href="#kl" x="33.04" y="-18.59"/><use href="#kl" x="32.17" y="-18.10"/><use href="#kl" x="31.30" y="-17.61"/><use href="#kl" x="30.43" y="-17.12"/><use href="#kl" x="29.57" y="-16.63"/><use href="#kl" x="28.70" y="-16.14"/><use href="#kl" x="27.83" y="-15.65"/><use href="#kl" x="26.96" y="-15.16"/><use href="#kl" x="26.09" y="-14.67"/><use href="#kl" x="25.22" y="-14.18"/><use href="#kl" x="24.35" y="-13.70"/><use href="#kl" x="23.48" y="-13.21"/><use href="#kl" x="22.61" y="-12.72"/><use href="#kl" x="21.74" y="-12.23"/><use href="#kl" x="20.87" y="-11.74"/><use href="#kl" x="20.00" y="-11.25"/><use href="#kl" x="19.13" y="-10.76"/><use href="#kl" x="18.26" y="-10.27"/><use href="#kl" x="17.39" y="-9.78"/><use href="#kl" x="16.52" y="-9.29"/><use href="#kl" x="15.65" y="-8.80"/><use href="#kl" x="14.78" y="-8.32"/><use href="#kl" x="13.91" y="-7.83"/><use href="#kl" x="13.04" y="-7.34"/><use href="#kl" x="12.17" y="-6.85"/><use href="#kl" x="11.30" y="-6.36"/><use href="#kl" x="10.43" y="-5.87"/><use href="#kl" x="9.57" y="-5.38"/><use href="#kl" x="8.70" y="-4.89"/><use href="#kl" x="7.83" y="-4.40"/><use href="#kl" x="6.96" y="-3.91"/><use href="#kl" x="6.09" y="-3.42"/><use href="#kl" x="5.22" y="-2.93"/><use href="#kl" x="4.35" y="-2.45"/><use href="#kl" x="3.48" y="-1.96"/><use href="#kl" x="2.61" y="-1.47"/><use href="#kl" x="1.74" y="-0.98"/><use href="#kl" x="0.87" y="-0.49"/><use href="#kl" x="0.00" y="-0.00"/><path d="M1009.2,495.3 L1009.2,495.3 L1009.2,495.3 L1009.2,495.3 L1009.2,495.4 L1009.2,495.4 L1009.2,495.4 L1009.2,495.5 L1009.2,495.5 L1009.2,495.5 L1009.2,495.5 L1009.2,495.6 L1009.1,495.6 L1009.1,495.6 L1009.1,495.6 L1009.1,495.6 L1009.0,495.7 L1009.0,495.7 L1009.0,495.7 L1009.0,495.7 L1008.9,495.7 L1008.9,495.7 L1008.9,495.7 L1008.8,495.7 L1008.8,495.7 L1008.8,495.7 L1008.8,495.7 L1008.7,495.7 L1006.3,494.1 L1002.7,491.8 L1002.7,491.8 L998.7,489.2 L998.7,489.1 L994.8,486.5 L994.8,486.5 L991.1,483.9 L991.1,483.9 L987.3,481.1 L987.3,481.1 L983.5,478.2 L983.5,478.2 L979.8,475.2 L979.8,475.2 L975.9,471.9 L975.9,471.9 L971.8,468.2 L971.8,468.2 L968.1,464.8 L966.9,463.8 L967.2,464.2 L967.2,464.2 L968.8,467.2 L969.6,468.5 L970.6,469.4 L974.7,473.1 L978.7,476.5 L982.5,479.5 L986.3,482.5 L990.1,485.2 L993.9,487.9 L997.8,490.6 L1001.8,493.2 L1005.3,495.5 L1008.8,497.7 L1081.1,457.1 L1079.7,455.6 L1088.9,450.4 L1009.2,495.3Z" fill="#3c3a32" fill-opacity="0.03"/><path d="M1009.2,495.3 L1009.2,495.3 L1009.2,495.3 L1009.2,495.3 L1009.2,495.4 L1009.2,495.4 L1009.2,495.4 L1009.2,495.5 L1009.2,495.5 L1009.2,495.5 L1009.2,495.5 L1009.2,495.6 L1009.1,495.6 L1009.1,495.6 L1009.1,495.6 L1009.1,495.6 L1009.0,495.7 L1009.0,495.7 L1009.0,495.7 L1009.0,495.7 L1008.9,495.7 L1008.9,495.7 L1008.9,495.7 L1008.8,495.7 L1008.8,495.7 L1008.8,495.7 L1008.8,495.7 L1008.7,495.7 L1006.3,494.1 L1002.7,491.8 L1002.7,491.8 L998.7,489.2 L998.7,489.1 L994.8,486.5 L994.8,486.5 L991.1,483.9 L991.1,483.9 L987.3,481.1 L987.3,481.1 L983.5,478.2 L983.5,478.2 L979.8,475.2 L979.8,475.2 L975.9,471.9 L975.9,471.9 L971.8,468.2 L971.8,468.2 L968.1,464.8 L966.9,463.8 L967.2,464.2 L967.2,464.2 L968.8,467.2 L970.9,470.7 L973.5,474.2 L975.7,476.6 L977.5,478.1 L981.3,481.1 L985.1,484.1 L989.0,486.9 L992.7,489.5 L996.7,492.2 L1000.7,494.9 L1004.3,497.2 L1008.8,500.1 L1082.5,458.6 L1082.2,458.3 L1079.7,455.6 L1088.9,450.4 L1009.2,495.3Z" fill="#3c3a32" fill-opacity="0.03"/><path d="M1009.2,495.3 L1009.2,495.3 L1009.2,495.3 L1009.2,495.3 L1009.2,495.4 L1009.2,495.4 L1009.2,495.4 L1009.2,495.5 L1009.2,495.5 L1009.2,495.5 L1009.2,495.5 L1009.2,495.6 L1009.1,495.6 L1009.1,495.6 L1009.1,495.6 L1009.1,495.6 L1009.0,495.7 L1009.0,495.7 L1009.0,495.7 L1009.0,495.7 L1008.9,495.7 L1008.9,495.7 L1008.9,495.7 L1008.8,495.7 L1008.8,495.7 L1008.8,495.7 L1008.8,495.7 L1008.7,495.7 L1006.3,494.1 L1002.7,491.8 L1002.7,491.8 L998.7,489.2 L998.7,489.1 L994.8,486.5 L994.8,486.5 L991.1,483.9 L991.1,483.9 L987.3,481.1 L987.3,481.1 L983.5,478.2 L983.5,478.2 L979.8,475.2 L979.8,475.2 L975.9,471.9 L975.9,471.9 L971.8,468.2 L971.8,468.2 L968.1,464.8 L966.9,463.8 L967.2,464.2 L967.2,464.2 L968.8,467.2 L970.9,470.7 L973.5,474.2 L976.9,477.9 L980.9,481.9 L985.2,486.0 L985.2,486.0 L987.7,488.4 L987.8,488.5 L991.6,491.2 L995.5,493.9 L999.6,496.6 L1003.2,498.8 L1008.7,502.4 L1083.7,460.2 L1082.2,458.3 L1079.7,455.6 L1088.9,450.4 L1009.2,495.3Z" fill="#3c3a32" fill-opacity="0.03"/><path d="M1009.2,495.3 L1009.2,495.3 L1009.2,495.3 L1009.2,495.3 L1009.2,495.4 L1009.2,495.4 L1009.2,495.4 L1009.2,495.5 L1009.2,495.5 L1009.2,495.5 L1009.2,495.5 L1009.2,495.6 L1009.1,495.6 L1009.1,495.6 L1009.1,495.6 L1009.1,495.6 L1009.0,495.7 L1009.0,495.7 L1009.0,495.7 L1009.0,495.7 L1008.9,495.7 L1008.9,495.7 L1008.9,495.7 L1008.8,495.7 L1008.8,495.7 L1008.8,495.7 L1008.8,495.7 L1008.7,495.7 L1006.3,494.1 L1002.7,491.8 L1002.7,491.8 L998.7,489.2 L998.7,489.1 L994.8,486.5 L994.8,486.5 L991.1,483.9 L991.1,483.9 L987.3,481.1 L987.3,481.1 L983.5,478.2 L983.5,478.2 L979.8,475.2 L979.8,475.2 L975.9,471.9 L975.9,471.9 L971.8,468.2 L971.8,468.2 L968.1,464.8 L966.9,463.8 L967.2,464.2 L967.2,464.2 L968.8,467.2 L970.9,470.7 L973.5,474.2 L976.9,477.9 L980.9,481.9 L985.2,486.0 L985.2,486.0 L989.1,489.8 L992.6,493.2 L996.0,496.4 L996.0,496.4 L996.6,496.9 L998.5,498.2 L1002.1,500.5 L1008.6,504.7 L1085.0,461.8 L1082.2,458.3 L1079.7,455.6 L1088.9,450.4 L1009.2,495.3Z" fill="#3c3a32" fill-opacity="0.03"/><path d="M1009.2,495.3 L1009.2,495.3 L1009.2,495.3 L1009.2,495.3 L1009.2,495.4 L1009.2,495.4 L1009.2,495.4 L1009.2,495.5 L1009.2,495.5 L1009.2,495.5 L1009.2,495.5 L1009.2,495.6 L1009.1,495.6 L1009.1,495.6 L1009.1,495.6 L1009.1,495.6 L1009.0,495.7 L1009.0,495.7 L1009.0,495.7 L1009.0,495.7 L1008.9,495.7 L1008.9,495.7 L1008.9,495.7 L1008.8,495.7 L1008.8,495.7 L1008.8,495.7 L1008.8,495.7 L1008.7,495.7 L1006.3,494.1 L1002.7,491.8 L1002.7,491.8 L998.7,489.2 L998.7,489.1 L994.8,486.5 L994.8,486.5 L991.1,483.9 L991.1,483.9 L987.3,481.1 L987.3,481.1 L983.5,478.2 L983.5,478.2 L979.8,475.2 L979.8,475.2 L975.9,471.9 L975.9,471.9 L971.8,468.2 L971.8,468.2 L968.1,464.8 L966.9,463.8 L967.2,464.2 L967.2,464.2 L968.8,467.2 L970.9,470.7 L973.5,474.2 L976.9,477.9 L980.9,481.9 L985.2,486.0 L985.2,486.0 L989.1,489.8 L992.6,493.2 L996.0,496.4 L996.0,496.4 L999.3,499.7 L999.3,499.7 L1002.4,503.1 L1002.4,503.1 L1002.5,503.1 L1008.5,507.1 L1086.2,463.4 L1085.2,462.1 L1082.2,458.3 L1079.7,455.6 L1088.9,450.4 L1009.2,495.3Z" fill="#3c3a32" fill-opacity="0.03"/><path d="M1009.2,495.3 L1009.2,495.3 L1009.2,495.3 L1009.2,495.3 L1009.2,495.4 L1009.2,495.4 L1009.2,495.4 L1009.2,495.5 L1009.2,495.5 L1009.2,495.5 L1009.2,495.5 L1009.2,495.6 L1009.1,495.6 L1009.1,495.6 L1009.1,495.6 L1009.1,495.6 L1009.0,495.7 L1009.0,495.7 L1009.0,495.7 L1009.0,495.7 L1008.9,495.7 L1008.9,495.7 L1008.9,495.7 L1008.8,495.7 L1008.8,495.7 L1008.8,495.7 L1008.8,495.7 L1008.7,495.7 L1006.3,494.1 L1002.7,491.8 L1002.7,491.8 L998.7,489.2 L998.7,489.1 L994.8,486.5 L994.8,486.5 L991.1,483.9 L991.1,483.9 L987.3,481.1 L987.3,481.1 L983.5,478.2 L983.5,478.2 L979.8,475.2 L979.8,475.2 L975.9,471.9 L975.9,471.9 L971.8,468.2 L971.8,468.2 L968.1,464.8 L966.9,463.8 L967.2,464.2 L967.2,464.2 L968.8,467.2 L970.9,470.7 L973.5,474.2 L976.9,477.9 L980.9,481.9 L985.2,486.0 L985.2,486.0 L989.1,489.8 L992.6,493.2 L996.0,496.4 L996.0,496.4 L999.3,499.7 L999.3,499.7 L1002.4,503.1 L1002.4,503.1 L1005.5,506.9 L1005.5,506.9 L1006.2,508.0 L1008.5,509.4 L1087.4,465.0 L1085.2,462.1 L1082.2,458.3 L1079.7,455.6 L1088.9,450.4 L1009.2,495.3Z" fill="#3c3a32" fill-opacity="0.03"/><path d="M1009.2,495.3 L1009.2,495.3 L1009.2,495.3 L1009.2,495.3 L1009.2,495.4 L1009.2,495.4 L1009.2,495.4 L1009.2,495.5 L1009.2,495.5 L1009.2,495.5 L1009.2,495.5 L1009.2,495.6 L1009.1,495.6 L1009.1,495.6 L1009.1,495.6 L1009.1,495.6 L1009.0,495.7 L1009.0,495.7 L1009.0,495.7 L1009.0,495.7 L1008.9,495.7 L1008.9,495.7 L1008.9,495.7 L1008.8,495.7 L1008.8,495.7 L1008.8,495.7 L1008.8,495.7 L1008.7,495.7 L1006.3,494.1 L1002.7,491.8 L1002.7,491.8 L998.7,489.2 L998.7,489.1 L994.8,486.5 L994.8,486.5 L991.1,483.9 L991.1,483.9 L987.3,481.1 L987.3,481.1 L983.5,478.2 L983.5,478.2 L979.8,475.2 L979.8,475.2 L975.9,471.9 L975.9,471.9 L971.8,468.2 L971.8,468.2 L968.1,464.8 L966.9,463.8 L967.2,464.2 L967.2,464.2 L968.8,467.2 L970.9,470.7 L973.5,474.2 L976.9,477.9 L980.9,481.9 L985.2,486.0 L985.2,486.0 L989.1,489.8 L992.6,493.2 L996.0,496.4 L996.0,496.4 L999.3,499.7 L999.3,499.7 L1002.4,503.1 L1002.4,503.1 L1005.5,506.9 L1005.5,506.9 L1008.4,510.9 L1008.4,510.9 L1008.8,511.5 L1088.5,466.7 L1088.2,466.1 L1085.2,462.1 L1082.2,458.3 L1079.7,455.6 L1088.9,450.4 L1009.2,495.3Z" fill="#3c3a32" fill-opacity="0.03"/><path d="M1009.2,495.3 L1009.2,495.3 L1009.2,495.3 L1009.2,495.3 L1009.2,495.4 L1009.2,495.4 L1009.2,495.4 L1009.2,495.5 L1009.2,495.5 L1009.2,495.5 L1009.2,495.5 L1009.2,495.6 L1009.1,495.6 L1009.1,495.6 L1009.1,495.6 L1009.1,495.6 L1009.0,495.7 L1009.0,495.7 L1009.0,495.7 L1009.0,495.7 L1008.9,495.7 L1008.9,495.7 L1008.9,495.7 L1008.8,495.7 L1008.8,495.7 L1008.8,495.7 L1008.8,495.7 L1008.7,495.7 L1006.3,494.1 L1002.7,491.8 L1002.7,491.8 L998.7,489.2 L998.7,489.1 L994.8,486.5 L994.8,486.5 L991.1,483.9 L991.1,483.9 L987.3,481.1 L987.3,481.1 L983.5,478.2 L983.5,478.2 L979.8,475.2 L979.8,475.2 L975.9,471.9 L975.9,471.9 L971.8,468.2 L971.8,468.2 L968.1,464.8 L966.9,463.8 L967.2,464.2 L967.2,464.2 L968.8,467.2 L970.9,470.7 L973.5,474.2 L976.9,477.9 L980.9,481.9 L985.2,486.0 L985.2,486.0 L989.1,489.8 L992.6,493.2 L996.0,496.4 L996.0,496.4 L999.3,499.7 L999.3,499.7 L1002.4,503.1 L1002.4,503.1 L1005.5,506.9 L1005.5,506.9 L1008.4,510.9 L1008.4,510.9 L1009.9,513.2 L1089.7,468.3 L1088.2,466.1 L1085.2,462.1 L1082.2,458.3 L1079.7,455.6 L1088.9,450.4 L1009.2,495.3Z" fill="#3c3a32" fill-opacity="0.03"/><path d="M1009.2,495.3 L1009.2,495.3 L1009.2,495.3 L1009.2,495.3 L1009.2,495.4 L1009.2,495.4 L1009.2,495.4 L1009.2,495.5 L1009.2,495.5 L1009.2,495.5 L1009.2,495.5 L1009.2,495.6 L1009.1,495.6 L1009.1,495.6 L1009.1,495.6 L1009.1,495.6 L1009.0,495.7 L1009.0,495.7 L1009.0,495.7 L1009.0,495.7 L1008.9,495.7 L1008.9,495.7 L1008.9,495.7 L1008.8,495.7 L1008.8,495.7 L1008.8,495.7 L1008.8,495.7 L1008.7,495.7 L1006.3,494.1 L1002.7,491.8 L1002.7,491.8 L998.7,489.2 L998.7,489.1 L994.8,486.5 L994.8,486.5 L991.1,483.9 L991.1,483.9 L987.3,481.1 L987.3,481.1 L983.5,478.2 L983.5,478.2 L979.8,475.2 L979.8,475.2 L975.9,471.9 L975.9,471.9 L971.8,468.2 L971.8,468.2 L968.1,464.8 L966.9,463.8 L967.2,464.2 L967.2,464.2 L968.8,467.2 L970.9,470.7 L973.5,474.2 L976.9,477.9 L980.9,481.9 L985.2,486.0 L985.2,486.0 L989.1,489.8 L992.6,493.2 L996.0,496.4 L996.0,496.4 L999.3,499.7 L999.3,499.7 L1002.4,503.1 L1002.4,503.1 L1005.5,506.9 L1005.5,506.9 L1008.4,510.9 L1008.4,510.9 L1011.1,514.8 L1090.8,470.0 L1088.2,466.1 L1085.2,462.1 L1082.2,458.3 L1079.7,455.6 L1088.9,450.4 L1009.2,495.3Z" fill="#3c3a32" fill-opacity="0.03"/><path d="M1009.2,495.3 L1009.2,495.3 L1009.2,495.3 L1009.2,495.3 L1009.2,495.4 L1009.2,495.4 L1009.2,495.4 L1009.2,495.5 L1009.2,495.5 L1009.2,495.5 L1009.2,495.5 L1009.2,495.6 L1009.1,495.6 L1009.1,495.6 L1009.1,495.6 L1009.1,495.6 L1009.0,495.7 L1009.0,495.7 L1009.0,495.7 L1009.0,495.7 L1008.9,495.7 L1008.9,495.7 L1008.9,495.7 L1008.8,495.7 L1008.8,495.7 L1008.8,495.7 L1008.8,495.7 L1008.7,495.7 L1006.3,494.1 L1002.7,491.8 L1002.7,491.8 L998.7,489.2 L998.7,489.1 L994.8,486.5 L994.8,486.5 L991.1,483.9 L991.1,483.9 L987.3,481.1 L987.3,481.1 L983.5,478.2 L983.5,478.2 L979.8,475.2 L979.8,475.2 L975.9,471.9 L975.9,471.9 L971.8,468.2 L971.8,468.2 L968.1,464.8 L966.9,463.8 L967.2,464.2 L967.2,464.2 L968.8,467.2 L970.9,470.7 L973.5,474.2 L976.9,477.9 L980.9,481.9 L985.2,486.0 L985.2,486.0 L989.1,489.8 L992.6,493.2 L996.0,496.4 L996.0,496.4 L999.3,499.7 L999.3,499.7 L1002.4,503.1 L1002.4,503.1 L1005.5,506.9 L1005.5,506.9 L1008.4,510.9 L1008.4,510.9 L1011.1,514.9 L1011.1,514.9 L1012.1,516.5 L1091.9,471.7 L1090.9,470.1 L1088.2,466.1 L1085.2,462.1 L1082.2,458.3 L1079.7,455.6 L1088.9,450.4 L1009.2,495.3Z" fill="#3c3a32" fill-opacity="0.03"/><path d="M1021.4,626.5 L1021.4,626.7 L1021.4,626.8 L1021.4,626.8 L1021.4,626.8 L1021.4,626.9 L1021.3,626.9 L1021.3,626.9 L1021.3,626.9 L1021.3,626.9 L1021.2,627.0 L1021.2,627.0 L1021.2,627.0 L1021.2,627.0 L1021.1,627.0 L1021.1,627.0 L1021.1,627.0 L1021.0,627.0 L1021.0,627.0 L1021.0,627.0 L1021.0,627.0 L1020.9,627.0 L1020.9,626.9 L1020.9,626.9 L1020.9,626.9 L1020.9,626.9 L1020.8,626.8 L1020.8,626.8 L1019.7,624.3 L1019.7,624.3 L1018.1,620.7 L1016.2,616.5 L1014.1,612.3 L1011.9,608.1 L1009.4,603.5 L1006.8,598.9 L1004.1,594.6 L1001.4,590.5 L998.5,586.7 L995.7,582.9 L995.7,582.9 L993.1,579.1 L993.0,579.1 L990.6,575.1 L990.6,575.1 L988.2,571.1 L988.2,571.0 L986.0,567.1 L986.0,567.1 L984.1,563.4 L984.1,563.4 L982.6,560.0 L982.6,560.0 L981.4,556.7 L981.4,556.7 L980.5,553.7 L980.5,553.7 L979.7,551.1 L979.7,551.1 L979.4,549.7 L979.5,552.4 L979.7,556.9 L979.8,557.2 L981.0,560.6 L982.6,564.2 L984.5,567.9 L986.7,571.9 L989.1,576.0 L991.6,580.0 L994.3,583.9 L997.2,587.7 L1000.0,591.5 L1002.7,595.5 L1005.3,599.8 L1007.9,604.3 L1010.4,608.9 L1012.6,613.1 L1014.7,617.3 L1016.6,621.4 L1018.1,625.0 L1020.2,629.5 L1087.5,591.7 L1086.7,590.0 L1086.7,589.8 L1101.1,581.7 L1021.4,626.5Z" fill="#3c3a32" fill-opacity="0.024"/><path d="M1021.4,626.5 L1021.4,626.7 L1021.4,626.8 L1021.4,626.8 L1021.4,626.8 L1021.4,626.9 L1021.3,626.9 L1021.3,626.9 L1021.3,626.9 L1021.3,626.9 L1021.2,627.0 L1021.2,627.0 L1021.2,627.0 L1021.2,627.0 L1021.1,627.0 L1021.1,627.0 L1021.1,627.0 L1021.0,627.0 L1021.0,627.0 L1021.0,627.0 L1021.0,627.0 L1020.9,627.0 L1020.9,626.9 L1020.9,626.9 L1020.9,626.9 L1020.9,626.9 L1020.8,626.8 L1020.8,626.8 L1019.7,624.3 L1019.7,624.3 L1018.1,620.7 L1016.2,616.5 L1014.1,612.3 L1011.9,608.1 L1009.4,603.5 L1006.8,598.9 L1004.1,594.6 L1001.4,590.5 L998.5,586.7 L995.7,582.9 L995.7,582.9 L993.1,579.1 L993.0,579.1 L990.6,575.1 L990.6,575.1 L988.2,571.1 L988.2,571.0 L986.0,567.1 L986.0,567.1 L984.1,563.4 L984.1,563.4 L982.6,560.0 L982.6,560.0 L981.4,556.7 L981.4,556.7 L980.5,553.7 L980.5,553.7 L979.7,551.1 L979.7,551.1 L979.4,549.7 L979.5,552.4 L979.8,557.9 L980.3,563.3 L980.4,564.2 L980.8,565.0 L982.7,568.8 L985.0,572.9 L987.4,577.0 L990.0,581.1 L992.7,585.1 L995.6,588.9 L998.4,592.7 L1001.0,596.6 L1003.6,600.8 L1006.2,605.3 L1008.6,609.8 L1010.8,614.0 L1012.9,618.1 L1014.7,622.2 L1016.3,625.8 L1019.2,632.3 L1088.3,593.5 L1086.7,590.0 L1086.7,589.8 L1101.1,581.7 L1021.4,626.5Z" fill="#3c3a32" fill-opacity="0.024"/><path d="M1021.4,626.5 L1021.4,626.7 L1021.4,626.8 L1021.4,626.8 L1021.4,626.8 L1021.4,626.9 L1021.3,626.9 L1021.3,626.9 L1021.3,626.9 L1021.3,626.9 L1021.2,627.0 L1021.2,627.0 L1021.2,627.0 L1021.2,627.0 L1021.1,627.0 L1021.1,627.0 L1021.1,627.0 L1021.0,627.0 L1021.0,627.0 L1021.0,627.0 L1021.0,627.0 L1020.9,627.0 L1020.9,626.9 L1020.9,626.9 L1020.9,626.9 L1020.9,626.9 L1020.8,626.8 L1020.8,626.8 L1019.7,624.3 L1019.7,624.3 L1018.1,620.7 L1016.2,616.5 L1014.1,612.3 L1011.9,608.1 L1009.4,603.5 L1006.8,598.9 L1004.1,594.6 L1001.4,590.5 L998.5,586.7 L995.7,582.9 L995.7,582.9 L993.1,579.1 L993.0,579.1 L990.6,575.1 L990.6,575.1 L988.2,571.1 L988.2,571.0 L986.0,567.1 L986.0,567.1 L984.1,563.4 L984.1,563.4 L982.6,560.0 L982.6,560.0 L981.4,556.7 L981.4,556.7 L980.5,553.7 L980.5,553.7 L979.7,551.1 L979.7,551.1 L979.4,549.7 L979.5,552.4 L979.8,557.9 L980.3,563.3 L981.1,568.6 L981.4,570.6 L983.2,573.9 L985.7,578.0 L988.3,582.2 L991.1,586.2 L994.0,590.1 L996.8,593.8 L999.4,597.7 L1001.9,601.8 L1004.4,606.3 L1006.9,610.8 L1009.1,614.9 L1011.0,619.0 L1012.9,623.0 L1014.5,626.6 L1018.3,635.2 L1089.1,595.3 L1088.9,594.7 L1086.7,590.0 L1086.7,589.8 L1101.1,581.7 L1021.4,626.5Z" fill="#3c3a32" fill-opacity="0.024"/><path d="M1021.4,626.5 L1021.4,626.7 L1021.4,626.8 L1021.4,626.8 L1021.4,626.8 L1021.4,626.9 L1021.3,626.9 L1021.3,626.9 L1021.3,626.9 L1021.3,626.9 L1021.2,627.0 L1021.2,627.0 L1021.2,627.0 L1021.2,627.0 L1021.1,627.0 L1021.1,627.0 L1021.1,627.0 L1021.0,627.0 L1021.0,627.0 L1021.0,627.0 L1021.0,627.0 L1020.9,627.0 L1020.9,626.9 L1020.9,626.9 L1020.9,626.9 L1020.9,626.9 L1020.8,626.8 L1020.8,626.8 L1019.7,624.3 L1019.7,624.3 L1018.1,620.7 L1016.2,616.5 L1014.1,612.3 L1011.9,608.1 L1009.4,603.5 L1006.8,598.9 L1004.1,594.6 L1001.4,590.5 L998.5,586.7 L995.7,582.9 L995.7,582.9 L993.1,579.1 L993.0,579.1 L990.6,575.1 L990.6,575.1 L988.2,571.1 L988.2,571.0 L986.0,567.1 L986.0,567.1 L984.1,563.4 L984.1,563.4 L982.6,560.0 L982.6,560.0 L981.4,556.7 L981.4,556.7 L980.5,553.7 L980.5,553.7 L979.7,551.1 L979.7,551.1 L979.4,549.7 L979.5,552.4 L979.8,557.9 L980.3,563.3 L981.1,568.6 L982.0,574.2 L982.5,576.6 L984.0,579.1 L986.6,583.3 L989.5,587.4 L992.4,591.3 L995.1,595.0 L997.7,598.7 L1000.2,602.8 L1002.7,607.3 L1005.1,611.7 L1007.3,615.8 L1009.2,619.8 L1011.1,623.9 L1012.7,627.4 L1017.4,638.0 L1089.9,597.2 L1088.9,594.7 L1086.7,590.0 L1086.7,589.8 L1101.1,581.7 L1021.4,626.5Z" fill="#3c3a32" fill-opacity="0.024"/><path d="M1021.4,626.5 L1021.4,626.7 L1021.4,626.8 L1021.4,626.8 L1021.4,626.8 L1021.4,626.9 L1021.3,626.9 L1021.3,626.9 L1021.3,626.9 L1021.3,626.9 L1021.2,627.0 L1021.2,627.0 L1021.2,627.0 L1021.2,627.0 L1021.1,627.0 L1021.1,627.0 L1021.1,627.0 L1021.0,627.0 L1021.0,627.0 L1021.0,627.0 L1021.0,627.0 L1020.9,627.0 L1020.9,626.9 L1020.9,626.9 L1020.9,626.9 L1020.9,626.9 L1020.8,626.8 L1020.8,626.8 L1019.7,624.3 L1019.7,624.3 L1018.1,620.7 L1016.2,616.5 L1014.1,612.3 L1011.9,608.1 L1009.4,603.5 L1006.8,598.9 L1004.1,594.6 L1001.4,590.5 L998.5,586.7 L995.7,582.9 L995.7,582.9 L993.1,579.1 L993.0,579.1 L990.6,575.1 L990.6,575.1 L988.2,571.1 L988.2,571.0 L986.0,567.1 L986.0,567.1 L984.1,563.4 L984.1,563.4 L982.6,560.0 L982.6,560.0 L981.4,556.7 L981.4,556.7 L980.5,553.7 L980.5,553.7 L979.7,551.1 L979.7,551.1 L979.4,549.7 L979.5,552.4 L979.8,557.9 L980.3,563.3 L981.1,568.6 L982.0,574.2 L983.2,579.9 L984.0,582.9 L984.9,584.4 L987.8,588.6 L990.8,592.5 L993.5,596.2 L996.0,599.8 L998.4,603.8 L1000.9,608.2 L1003.3,612.6 L1005.5,616.7 L1007.4,620.7 L1009.3,624.7 L1010.8,628.2 L1016.4,640.8 L1090.7,599.0 L1088.9,594.7 L1086.7,590.0 L1086.7,589.8 L1101.1,581.7 L1021.4,626.5Z" fill="#3c3a32" fill-opacity="0.024"/><path d="M1021.4,626.5 L1021.4,626.7 L1021.4,626.8 L1021.4,626.8 L1021.4,626.8 L1021.4,626.9 L1021.3,626.9 L1021.3,626.9 L1021.3,626.9 L1021.3,626.9 L1021.2,627.0 L1021.2,627.0 L1021.2,627.0 L1021.2,627.0 L1021.1,627.0 L1021.1,627.0 L1021.1,627.0 L1021.0,627.0 L1021.0,627.0 L1021.0,627.0 L1021.0,627.0 L1020.9,627.0 L1020.9,626.9 L1020.9,626.9 L1020.9,626.9 L1020.9,626.9 L1020.8,626.8 L1020.8,626.8 L1019.7,624.3 L1019.7,624.3 L1018.1,620.7 L1016.2,616.5 L1014.1,612.3 L1011.9,608.1 L1009.4,603.5 L1006.8,598.9 L1004.1,594.6 L1001.4,590.5 L998.5,586.7 L995.7,582.9 L995.7,582.9 L993.1,579.1 L993.0,579.1 L990.6,575.1 L990.6,575.1 L988.2,571.1 L988.2,571.0 L986.0,567.1 L986.0,567.1 L984.1,563.4 L984.1,563.4 L982.6,560.0 L982.6,560.0 L981.4,556.7 L981.4,556.7 L980.5,553.7 L980.5,553.7 L979.7,551.1 L979.7,551.1 L979.4,549.7 L979.5,552.4 L979.8,557.9 L980.3,563.3 L981.1,568.6 L982.0,574.2 L983.2,579.9 L984.7,585.5 L986.0,589.4 L986.2,589.7 L989.2,593.7 L991.9,597.3 L994.3,600.9 L996.7,604.9 L999.2,609.2 L1001.6,613.6 L1003.7,617.6 L1005.6,621.5 L1007.4,625.5 L1009.0,629.0 L1015.5,643.6 L1091.4,600.9 L1090.7,599.1 L1088.9,594.7 L1086.7,590.0 L1086.7,589.8 L1101.1,581.7 L1021.4,626.5Z" fill="#3c3a32" fill-opacity="0.024"/><path d="M1021.4,626.5 L1021.4,626.7 L1021.4,626.8 L1021.4,626.8 L1021.4,626.8 L1021.4,626.9 L1021.3,626.9 L1021.3,626.9 L1021.3,626.9 L1021.3,626.9 L1021.2,627.0 L1021.2,627.0 L1021.2,627.0 L1021.2,627.0 L1021.1,627.0 L1021.1,627.0 L1021.1,627.0 L1021.0,627.0 L1021.0,627.0 L1021.0,627.0 L1021.0,627.0 L1020.9,627.0 L1020.9,626.9 L1020.9,626.9 L1020.9,626.9 L1020.9,626.9 L1020.8,626.8 L1020.8,626.8 L1019.7,624.3 L1019.7,624.3 L1018.1,620.7 L1016.2,616.5 L1014.1,612.3 L1011.9,608.1 L1009.4,603.5 L1006.8,598.9 L1004.1,594.6 L1001.4,590.5 L998.5,586.7 L995.7,582.9 L995.7,582.9 L993.1,579.1 L993.0,579.1 L990.6,575.1 L990.6,575.1 L988.2,571.1 L988.2,571.0 L986.0,567.1 L986.0,567.1 L984.1,563.4 L984.1,563.4 L982.6,560.0 L982.6,560.0 L981.4,556.7 L981.4,556.7 L980.5,553.7 L980.5,553.7 L979.7,551.1 L979.7,551.1 L979.4,549.7 L979.5,552.4 L979.8,557.9 L980.3,563.3 L981.1,568.6 L982.0,574.2 L983.2,579.9 L984.7,585.5 L986.5,591.1 L988.6,596.2 L990.2,598.5 L992.6,602.0 L995.0,605.9 L997.4,610.2 L999.8,614.5 L1001.9,618.5 L1003.8,622.4 L1005.6,626.3 L1007.2,629.9 L1014.6,646.4 L1092.2,602.8 L1090.7,599.1 L1088.9,594.7 L1086.7,590.0 L1086.7,589.8 L1101.1,581.7 L1021.4,626.5Z" fill="#3c3a32" fill-opacity="0.024"/><path d="M1021.4,626.5 L1021.4,626.7 L1021.4,626.8 L1021.4,626.8 L1021.4,626.8 L1021.4,626.9 L1021.3,626.9 L1021.3,626.9 L1021.3,626.9 L1021.3,626.9 L1021.2,627.0 L1021.2,627.0 L1021.2,627.0 L1021.2,627.0 L1021.1,627.0 L1021.1,627.0 L1021.1,627.0 L1021.0,627.0 L1021.0,627.0 L1021.0,627.0 L1021.0,627.0 L1020.9,627.0 L1020.9,626.9 L1020.9,626.9 L1020.9,626.9 L1020.9,626.9 L1020.8,626.8 L1020.8,626.8 L1019.7,624.3 L1019.7,624.3 L1018.1,620.7 L1016.2,616.5 L1014.1,612.3 L1011.9,608.1 L1009.4,603.5 L1006.8,598.9 L1004.1,594.6 L1001.4,590.5 L998.5,586.7 L995.7,582.9 L995.7,582.9 L993.1,579.1 L993.0,579.1 L990.6,575.1 L990.6,575.1 L988.2,571.1 L988.2,571.0 L986.0,567.1 L986.0,567.1 L984.1,563.4 L984.1,563.4 L982.6,560.0 L982.6,560.0 L981.4,556.7 L981.4,556.7 L980.5,553.7 L980.5,553.7 L979.7,551.1 L979.7,551.1 L979.4,549.7 L979.5,552.4 L979.8,557.9 L980.3,563.3 L981.1,568.6 L982.0,574.2 L983.2,579.9 L984.7,585.5 L986.5,591.1 L988.7,596.6 L991.1,602.1 L993.1,606.6 L993.3,606.9 L995.7,611.1 L998.0,615.5 L1000.1,619.4 L1002.0,623.3 L1003.8,627.1 L1005.4,630.7 L1013.6,649.3 L1092.8,604.7 L1092.2,602.8 L1090.7,599.1 L1088.9,594.7 L1086.7,590.0 L1086.7,589.8 L1101.1,581.7 L1021.4,626.5Z" fill="#3c3a32" fill-opacity="0.024"/><path d="M1021.4,626.5 L1021.4,626.7 L1021.4,626.8 L1021.4,626.8 L1021.4,626.8 L1021.4,626.9 L1021.3,626.9 L1021.3,626.9 L1021.3,626.9 L1021.3,626.9 L1021.2,627.0 L1021.2,627.0 L1021.2,627.0 L1021.2,627.0 L1021.1,627.0 L1021.1,627.0 L1021.1,627.0 L1021.0,627.0 L1021.0,627.0 L1021.0,627.0 L1021.0,627.0 L1020.9,627.0 L1020.9,626.9 L1020.9,626.9 L1020.9,626.9 L1020.9,626.9 L1020.8,626.8 L1020.8,626.8 L1019.7,624.3 L1019.7,624.3 L1018.1,620.7 L1016.2,616.5 L1014.1,612.3 L1011.9,608.1 L1009.4,603.5 L1006.8,598.9 L1004.1,594.6 L1001.4,590.5 L998.5,586.7 L995.7,582.9 L995.7,582.9 L993.1,579.1 L993.0,579.1 L990.6,575.1 L990.6,575.1 L988.2,571.1 L988.2,571.0 L986.0,567.1 L986.0,567.1 L984.1,563.4 L984.1,563.4 L982.6,560.0 L982.6,560.0 L981.4,556.7 L981.4,556.7 L980.5,553.7 L980.5,553.7 L979.7,551.1 L979.7,551.1 L979.4,549.7 L979.5,552.4 L979.8,557.9 L980.3,563.3 L981.1,568.6 L982.0,574.2 L983.2,579.9 L984.7,585.5 L986.5,591.1 L988.7,596.6 L991.1,602.1 L993.6,607.7 L996.3,613.3 L999.2,619.0 L1002.1,624.6 L1002.1,624.6 L1004.7,629.9 L1004.7,629.9 L1007.0,634.8 L1007.0,634.8 L1009.1,639.6 L1009.1,639.6 L1011.0,644.0 L1011.0,644.0 L1012.5,647.7 L1012.5,647.7 L1013.5,650.8 L1013.5,650.8 L1013.6,651.5 L1093.4,606.7 L1093.2,605.9 L1092.2,602.8 L1090.7,599.1 L1088.9,594.7 L1086.7,590.0 L1086.7,589.8 L1101.1,581.7 L1021.4,626.5Z" fill="#3c3a32" fill-opacity="0.024"/><path d="M1021.4,626.5 L1021.4,626.7 L1021.4,626.8 L1021.4,626.8 L1021.4,626.8 L1021.4,626.9 L1021.3,626.9 L1021.3,626.9 L1021.3,626.9 L1021.3,626.9 L1021.2,627.0 L1021.2,627.0 L1021.2,627.0 L1021.2,627.0 L1021.1,627.0 L1021.1,627.0 L1021.1,627.0 L1021.0,627.0 L1021.0,627.0 L1021.0,627.0 L1021.0,627.0 L1020.9,627.0 L1020.9,626.9 L1020.9,626.9 L1020.9,626.9 L1020.9,626.9 L1020.8,626.8 L1020.8,626.8 L1019.7,624.3 L1019.7,624.3 L1018.1,620.7 L1016.2,616.5 L1014.1,612.3 L1011.9,608.1 L1009.4,603.5 L1006.8,598.9 L1004.1,594.6 L1001.4,590.5 L998.5,586.7 L995.7,582.9 L995.7,582.9 L993.1,579.1 L993.0,579.1 L990.6,575.1 L990.6,575.1 L988.2,571.1 L988.2,571.0 L986.0,567.1 L986.0,567.1 L984.1,563.4 L984.1,563.4 L982.6,560.0 L982.6,560.0 L981.4,556.7 L981.4,556.7 L980.5,553.7 L980.5,553.7 L979.7,551.1 L979.7,551.1 L979.4,549.7 L979.5,552.4 L979.8,557.9 L980.3,563.3 L981.1,568.6 L982.0,574.2 L983.2,579.9 L984.7,585.5 L986.5,591.1 L988.7,596.6 L991.1,602.1 L993.6,607.7 L996.3,613.3 L999.2,619.0 L1002.1,624.6 L1002.1,624.6 L1004.7,629.9 L1004.7,629.9 L1007.0,634.8 L1007.0,634.8 L1009.1,639.6 L1009.1,639.6 L1011.0,644.0 L1011.0,644.0 L1012.5,647.7 L1012.5,647.7 L1013.5,650.8 L1013.5,650.8 L1014.0,653.3 L1014.0,653.3 L1014.1,653.6 L1093.8,608.8 L1093.7,608.4 L1093.2,605.9 L1092.2,602.8 L1090.7,599.1 L1088.9,594.7 L1086.7,590.0 L1086.7,589.8 L1101.1,581.7 L1021.4,626.5Z" fill="#3c3a32" fill-opacity="0.024"/><path d="M1021.4,626.5 L1021.4,626.7 L1021.4,626.8 L1021.4,626.8 L1021.4,626.8 L1021.4,626.9 L1021.3,626.9 L1021.3,626.9 L1021.3,626.9 L1021.3,626.9 L1021.2,627.0 L1021.2,627.0 L1021.2,627.0 L1021.2,627.0 L1021.1,627.0 L1021.1,627.0 L1021.1,627.0 L1021.0,627.0 L1021.0,627.0 L1021.0,627.0 L1021.0,627.0 L1020.9,627.0 L1020.9,626.9 L1020.9,626.9 L1020.9,626.9 L1020.9,626.9 L1020.8,626.8 L1020.8,626.8 L1019.7,624.3 L1019.7,624.3 L1018.1,620.7 L1016.2,616.5 L1014.1,612.3 L1011.9,608.1 L1009.4,603.5 L1006.8,598.9 L1004.1,594.6 L1001.4,590.5 L998.5,586.7 L995.7,582.9 L995.7,582.9 L993.1,579.1 L993.0,579.1 L990.6,575.1 L990.6,575.1 L988.2,571.1 L988.2,571.0 L986.0,567.1 L986.0,567.1 L984.1,563.4 L984.1,563.4 L982.6,560.0 L982.6,560.0 L981.4,556.7 L981.4,556.7 L980.5,553.7 L980.5,553.7 L979.7,551.1 L979.7,551.1 L979.4,549.7 L979.5,552.4 L979.8,557.9 L980.3,563.3 L981.1,568.6 L982.0,574.2 L983.2,579.9 L984.7,585.5 L986.5,591.1 L988.7,596.6 L991.1,602.1 L993.6,607.7 L996.3,613.3 L999.2,619.0 L1002.1,624.6 L1002.1,624.6 L1004.7,629.9 L1004.7,629.9 L1007.0,634.8 L1007.0,634.8 L1009.1,639.6 L1009.1,639.6 L1011.0,644.0 L1011.0,644.0 L1012.5,647.7 L1012.5,647.7 L1013.5,650.8 L1013.5,650.8 L1014.0,653.3 L1014.0,653.3 L1014.4,655.3 L1014.4,655.7 L1094.2,610.9 L1094.1,610.3 L1093.7,608.4 L1093.2,605.9 L1092.2,602.8 L1090.7,599.1 L1088.9,594.7 L1086.7,590.0 L1086.7,589.8 L1101.1,581.7 L1021.4,626.5Z" fill="#3c3a32" fill-opacity="0.024"/><path d="M1021.4,626.5 L1021.4,626.7 L1021.4,626.8 L1021.4,626.8 L1021.4,626.8 L1021.4,626.9 L1021.3,626.9 L1021.3,626.9 L1021.3,626.9 L1021.3,626.9 L1021.2,627.0 L1021.2,627.0 L1021.2,627.0 L1021.2,627.0 L1021.1,627.0 L1021.1,627.0 L1021.1,627.0 L1021.0,627.0 L1021.0,627.0 L1021.0,627.0 L1021.0,627.0 L1020.9,627.0 L1020.9,626.9 L1020.9,626.9 L1020.9,626.9 L1020.9,626.9 L1020.8,626.8 L1020.8,626.8 L1019.7,624.3 L1019.7,624.3 L1018.1,620.7 L1016.2,616.5 L1014.1,612.3 L1011.9,608.1 L1009.4,603.5 L1006.8,598.9 L1004.1,594.6 L1001.4,590.5 L998.5,586.7 L995.7,582.9 L995.7,582.9 L993.1,579.1 L993.0,579.1 L990.6,575.1 L990.6,575.1 L988.2,571.1 L988.2,571.0 L986.0,567.1 L986.0,567.1 L984.1,563.4 L984.1,563.4 L982.6,560.0 L982.6,560.0 L981.4,556.7 L981.4,556.7 L980.5,553.7 L980.5,553.7 L979.7,551.1 L979.7,551.1 L979.4,549.7 L979.5,552.4 L979.8,557.9 L980.3,563.3 L981.1,568.6 L982.0,574.2 L983.2,579.9 L984.7,585.5 L986.5,591.1 L988.7,596.6 L991.1,602.1 L993.6,607.7 L996.3,613.3 L999.2,619.0 L1002.1,624.6 L1002.1,624.6 L1004.7,629.9 L1004.7,629.9 L1007.0,634.8 L1007.0,634.8 L1009.1,639.6 L1009.1,639.6 L1011.0,644.0 L1011.0,644.0 L1012.5,647.7 L1012.5,647.7 L1013.5,650.8 L1013.5,650.8 L1014.0,653.3 L1014.0,653.3 L1014.4,655.3 L1014.6,656.6 L1014.6,656.7 L1014.6,656.7 L1014.6,656.7 L1014.6,656.8 L1014.2,658.1 L1093.9,613.3 L1094.3,611.7 L1094.1,610.3 L1093.7,608.4 L1093.2,605.9 L1092.2,602.8 L1090.7,599.1 L1088.9,594.7 L1086.7,590.0 L1086.7,589.8 L1101.1,581.7 L1021.4,626.5Z" fill="#3c3a32" fill-opacity="0.024"/><path d="M1021.4,626.5 L1021.4,626.7 L1021.4,626.8 L1021.4,626.8 L1021.4,626.8 L1021.4,626.9 L1021.3,626.9 L1021.3,626.9 L1021.3,626.9 L1021.3,626.9 L1021.2,627.0 L1021.2,627.0 L1021.2,627.0 L1021.2,627.0 L1021.1,627.0 L1021.1,627.0 L1021.1,627.0 L1021.0,627.0 L1021.0,627.0 L1021.0,627.0 L1021.0,627.0 L1020.9,627.0 L1020.9,626.9 L1020.9,626.9 L1020.9,626.9 L1020.9,626.9 L1020.8,626.8 L1020.8,626.8 L1019.7,624.3 L1019.7,624.3 L1018.1,620.7 L1016.2,616.5 L1014.1,612.3 L1011.9,608.1 L1009.4,603.5 L1006.8,598.9 L1004.1,594.6 L1001.4,590.5 L998.5,586.7 L995.7,582.9 L995.7,582.9 L993.1,579.1 L993.0,579.1 L990.6,575.1 L990.6,575.1 L988.2,571.1 L988.2,571.0 L986.0,567.1 L986.0,567.1 L984.1,563.4 L984.1,563.4 L982.6,560.0 L982.6,560.0 L981.4,556.7 L981.4,556.7 L980.5,553.7 L980.5,553.7 L979.7,551.1 L979.7,551.1 L979.4,549.7 L979.5,552.4 L979.8,557.9 L980.3,563.3 L981.1,568.6 L982.0,574.2 L983.2,579.9 L984.7,585.5 L986.5,591.1 L988.7,596.6 L991.1,602.1 L993.6,607.7 L996.3,613.3 L999.2,619.0 L1002.1,624.6 L1002.1,624.6 L1004.7,629.9 L1004.7,629.9 L1007.0,634.8 L1007.0,634.8 L1009.1,639.6 L1009.1,639.6 L1011.0,644.0 L1011.0,644.0 L1012.5,647.7 L1012.5,647.7 L1013.5,650.8 L1013.5,650.8 L1014.0,653.3 L1014.0,653.3 L1014.4,655.3 L1014.6,656.6 L1014.6,656.7 L1014.6,656.7 L1014.6,656.7 L1014.6,656.8 L1013.5,660.8 L1093.1,616.0 L1094.3,611.7 L1094.1,610.3 L1093.7,608.4 L1093.2,605.9 L1092.2,602.8 L1090.7,599.1 L1088.9,594.7 L1086.7,590.0 L1086.7,589.8 L1101.1,581.7 L1021.4,626.5Z" fill="#3c3a32" fill-opacity="0.024"/><path d="M1000.5,708.2 L1000.4,708.5 L1000.4,708.5 L1000.4,708.5 L1000.4,708.6 L1000.3,708.6 L1000.3,708.6 L1000.3,708.6 L1000.3,708.6 L1000.3,708.7 L1000.2,708.7 L1000.2,708.7 L1000.2,708.7 L1000.1,708.7 L1000.1,708.7 L1000.1,708.7 L1000.1,708.7 L1000.0,708.7 L1000.0,708.7 L1000.0,708.7 L999.9,708.7 L999.9,708.6 L999.9,708.6 L999.9,708.6 L999.9,708.6 L999.8,708.6 L999.8,708.5 L999.8,708.5 L998.9,706.1 L997.6,702.8 L997.6,702.8 L996.1,698.8 L996.1,698.8 L994.7,694.5 L994.7,694.5 L993.4,689.8 L993.4,689.8 L992.1,684.5 L992.1,684.5 L990.8,679.2 L990.8,679.2 L989.6,674.1 L989.6,674.1 L988.6,669.2 L988.6,669.2 L987.6,664.3 L987.6,664.3 L986.7,659.7 L986.7,659.7 L986.1,655.7 L986.1,655.7 L985.7,652.3 L985.7,652.3 L985.6,649.3 L985.6,649.3 L985.6,648.3 L984.9,652.1 L984.4,655.5 L984.4,656.0 L985.1,660.0 L985.9,664.6 L986.9,669.5 L987.9,674.4 L989.1,679.6 L990.4,684.9 L991.8,690.2 L993.1,695.0 L994.5,699.3 L996.0,703.4 L997.3,706.8 L999.1,711.3 L1066.5,673.3 L1066.1,671.2 L1000.5,708.2Z" fill="#3c3a32" fill-opacity="0.022"/><path d="M1000.5,708.2 L1000.4,708.5 L1000.4,708.5 L1000.4,708.5 L1000.4,708.6 L1000.3,708.6 L1000.3,708.6 L1000.3,708.6 L1000.3,708.6 L1000.3,708.7 L1000.2,708.7 L1000.2,708.7 L1000.2,708.7 L1000.1,708.7 L1000.1,708.7 L1000.1,708.7 L1000.1,708.7 L1000.0,708.7 L1000.0,708.7 L1000.0,708.7 L999.9,708.7 L999.9,708.6 L999.9,708.6 L999.9,708.6 L999.9,708.6 L999.8,708.6 L999.8,708.5 L999.8,708.5 L998.9,706.1 L997.6,702.8 L997.6,702.8 L996.1,698.8 L996.1,698.8 L994.7,694.5 L994.7,694.5 L993.4,689.8 L993.4,689.8 L992.1,684.5 L992.1,684.5 L990.8,679.2 L990.8,679.2 L989.6,674.1 L989.6,674.1 L988.6,669.2 L988.6,669.2 L987.6,664.3 L987.6,664.3 L986.7,659.7 L986.7,659.7 L986.1,655.7 L986.1,655.7 L985.7,652.3 L985.7,652.3 L985.6,649.3 L985.6,649.3 L985.6,648.3 L984.9,652.1 L984.2,656.9 L983.6,661.7 L983.5,662.7 L983.9,665.0 L984.9,669.9 L986.0,674.9 L987.2,680.0 L988.5,685.4 L989.8,690.7 L991.2,695.6 L992.6,700.0 L994.1,704.1 L995.5,707.5 L998.0,714.1 L1066.9,675.4 L1066.6,673.6 L1066.1,671.2 L1000.5,708.2Z" fill="#3c3a32" fill-opacity="0.022"/><path d="M1000.5,708.2 L1000.4,708.5 L1000.4,708.5 L1000.4,708.5 L1000.4,708.6 L1000.3,708.6 L1000.3,708.6 L1000.3,708.6 L1000.3,708.6 L1000.3,708.7 L1000.2,708.7 L1000.2,708.7 L1000.2,708.7 L1000.1,708.7 L1000.1,708.7 L1000.1,708.7 L1000.1,708.7 L1000.0,708.7 L1000.0,708.7 L1000.0,708.7 L999.9,708.7 L999.9,708.6 L999.9,708.6 L999.9,708.6 L999.9,708.6 L999.8,708.6 L999.8,708.5 L999.8,708.5 L998.9,706.1 L997.6,702.8 L997.6,702.8 L996.1,698.8 L996.1,698.8 L994.7,694.5 L994.7,694.5 L993.4,689.8 L993.4,689.8 L992.1,684.5 L992.1,684.5 L990.8,679.2 L990.8,679.2 L989.6,674.1 L989.6,674.1 L988.6,669.2 L988.6,669.2 L987.6,664.3 L987.6,664.3 L986.7,659.7 L986.7,659.7 L986.1,655.7 L986.1,655.7 L985.7,652.3 L985.7,652.3 L985.6,649.3 L985.6,649.3 L985.6,648.3 L984.9,652.1 L984.2,656.9 L983.6,661.7 L983.2,666.8 L983.0,670.6 L984.0,675.3 L985.2,680.5 L986.5,685.9 L987.9,691.3 L989.3,696.1 L990.7,700.6 L992.3,704.8 L993.6,708.2 L997.0,717.0 L1067.3,677.5 L1066.6,673.6 L1066.1,671.2 L1000.5,708.2Z" fill="#3c3a32" fill-opacity="0.022"/><path d="M1000.5,708.2 L1000.4,708.5 L1000.4,708.5 L1000.4,708.5 L1000.4,708.6 L1000.3,708.6 L1000.3,708.6 L1000.3,708.6 L1000.3,708.6 L1000.3,708.7 L1000.2,708.7 L1000.2,708.7 L1000.2,708.7 L1000.1,708.7 L1000.1,708.7 L1000.1,708.7 L1000.1,708.7 L1000.0,708.7 L1000.0,708.7 L1000.0,708.7 L999.9,708.7 L999.9,708.6 L999.9,708.6 L999.9,708.6 L999.9,708.6 L999.8,708.6 L999.8,708.5 L999.8,708.5 L998.9,706.1 L997.6,702.8 L997.6,702.8 L996.1,698.8 L996.1,698.8 L994.7,694.5 L994.7,694.5 L993.4,689.8 L993.4,689.8 L992.1,684.5 L992.1,684.5 L990.8,679.2 L990.8,679.2 L989.6,674.1 L989.6,674.1 L988.6,669.2 L988.6,669.2 L987.6,664.3 L987.6,664.3 L986.7,659.7 L986.7,659.7 L986.1,655.7 L986.1,655.7 L985.7,652.3 L985.7,652.3 L985.6,649.3 L985.6,649.3 L985.6,648.3 L984.9,652.1 L984.2,656.9 L983.6,661.7 L983.2,666.8 L982.9,672.3 L982.8,677.9 L982.8,678.8 L983.3,680.9 L984.6,686.4 L986.0,691.8 L987.3,696.7 L988.8,701.3 L990.4,705.5 L991.7,708.9 L996.0,719.9 L1067.8,679.5 L1067.5,678.3 L1066.6,673.6 L1066.1,671.2 L1000.5,708.2Z" fill="#3c3a32" fill-opacity="0.022"/><path d="M1000.5,708.2 L1000.4,708.5 L1000.4,708.5 L1000.4,708.5 L1000.4,708.6 L1000.3,708.6 L1000.3,708.6 L1000.3,708.6 L1000.3,708.6 L1000.3,708.7 L1000.2,708.7 L1000.2,708.7 L1000.2,708.7 L1000.1,708.7 L1000.1,708.7 L1000.1,708.7 L1000.1,708.7 L1000.0,708.7 L1000.0,708.7 L1000.0,708.7 L999.9,708.7 L999.9,708.6 L999.9,708.6 L999.9,708.6 L999.9,708.6 L999.8,708.6 L999.8,708.5 L999.8,708.5 L998.9,706.1 L997.6,702.8 L997.6,702.8 L996.1,698.8 L996.1,698.8 L994.7,694.5 L994.7,694.5 L993.4,689.8 L993.4,689.8 L992.1,684.5 L992.1,684.5 L990.8,679.2 L990.8,679.2 L989.6,674.1 L989.6,674.1 L988.6,669.2 L988.6,669.2 L987.6,664.3 L987.6,664.3 L986.7,659.7 L986.7,659.7 L986.1,655.7 L986.1,655.7 L985.7,652.3 L985.7,652.3 L985.6,649.3 L985.6,649.3 L985.6,648.3 L984.9,652.1 L984.2,656.9 L983.6,661.7 L983.2,666.8 L982.9,672.3 L982.8,677.9 L982.8,683.3 L983.0,688.3 L984.0,692.3 L985.4,697.3 L986.9,702.0 L988.5,706.2 L989.9,709.7 L994.9,722.8 L1068.3,681.5 L1067.5,678.3 L1066.6,673.6 L1066.1,671.2 L1000.5,708.2Z" fill="#3c3a32" fill-opacity="0.022"/><path d="M1000.5,708.2 L1000.4,708.5 L1000.4,708.5 L1000.4,708.5 L1000.4,708.6 L1000.3,708.6 L1000.3,708.6 L1000.3,708.6 L1000.3,708.6 L1000.3,708.7 L1000.2,708.7 L1000.2,708.7 L1000.2,708.7 L1000.1,708.7 L1000.1,708.7 L1000.1,708.7 L1000.1,708.7 L1000.0,708.7 L1000.0,708.7 L1000.0,708.7 L999.9,708.7 L999.9,708.6 L999.9,708.6 L999.9,708.6 L999.9,708.6 L999.8,708.6 L999.8,708.5 L999.8,708.5 L998.9,706.1 L997.6,702.8 L997.6,702.8 L996.1,698.8 L996.1,698.8 L994.7,694.5 L994.7,694.5 L993.4,689.8 L993.4,689.8 L992.1,684.5 L992.1,684.5 L990.8,679.2 L990.8,679.2 L989.6,674.1 L989.6,674.1 L988.6,669.2 L988.6,669.2 L987.6,664.3 L987.6,664.3 L986.7,659.7 L986.7,659.7 L986.1,655.7 L986.1,655.7 L985.7,652.3 L985.7,652.3 L985.6,649.3 L985.6,649.3 L985.6,648.3 L984.9,652.1 L984.2,656.9 L983.6,661.7 L983.2,666.8 L982.9,672.3 L982.8,677.9 L982.8,683.3 L983.0,688.4 L983.4,693.4 L983.9,698.3 L984.0,699.5 L985.1,702.6 L986.7,706.9 L988.0,710.4 L993.9,725.6 L1068.8,683.5 L1068.6,683.0 L1067.5,678.3 L1066.6,673.6 L1066.1,671.2 L1000.5,708.2Z" fill="#3c3a32" fill-opacity="0.022"/><path d="M1000.5,708.2 L1000.4,708.5 L1000.4,708.5 L1000.4,708.5 L1000.4,708.6 L1000.3,708.6 L1000.3,708.6 L1000.3,708.6 L1000.3,708.6 L1000.3,708.7 L1000.2,708.7 L1000.2,708.7 L1000.2,708.7 L1000.1,708.7 L1000.1,708.7 L1000.1,708.7 L1000.1,708.7 L1000.0,708.7 L1000.0,708.7 L1000.0,708.7 L999.9,708.7 L999.9,708.6 L999.9,708.6 L999.9,708.6 L999.9,708.6 L999.8,708.6 L999.8,708.5 L999.8,708.5 L998.9,706.1 L997.6,702.8 L997.6,702.8 L996.1,698.8 L996.1,698.8 L994.7,694.5 L994.7,694.5 L993.4,689.8 L993.4,689.8 L992.1,684.5 L992.1,684.5 L990.8,679.2 L990.8,679.2 L989.6,674.1 L989.6,674.1 L988.6,669.2 L988.6,669.2 L987.6,664.3 L987.6,664.3 L986.7,659.7 L986.7,659.7 L986.1,655.7 L986.1,655.7 L985.7,652.3 L985.7,652.3 L985.6,649.3 L985.6,649.3 L985.6,648.3 L984.9,652.1 L984.2,656.9 L983.6,661.7 L983.2,666.8 L982.9,672.3 L982.8,677.9 L982.8,683.3 L983.0,688.4 L983.4,693.4 L983.9,698.3 L984.5,703.3 L985.2,708.4 L985.3,708.9 L986.1,711.1 L992.9,728.5 L1069.4,685.5 L1068.6,683.0 L1067.5,678.3 L1066.6,673.6 L1066.1,671.2 L1000.5,708.2Z" fill="#3c3a32" fill-opacity="0.022"/><path d="M1000.5,708.2 L1000.4,708.5 L1000.4,708.5 L1000.4,708.5 L1000.4,708.6 L1000.3,708.6 L1000.3,708.6 L1000.3,708.6 L1000.3,708.6 L1000.3,708.7 L1000.2,708.7 L1000.2,708.7 L1000.2,708.7 L1000.1,708.7 L1000.1,708.7 L1000.1,708.7 L1000.1,708.7 L1000.0,708.7 L1000.0,708.7 L1000.0,708.7 L999.9,708.7 L999.9,708.6 L999.9,708.6 L999.9,708.6 L999.9,708.6 L999.8,708.6 L999.8,708.5 L999.8,708.5 L998.9,706.1 L997.6,702.8 L997.6,702.8 L996.1,698.8 L996.1,698.8 L994.7,694.5 L994.7,694.5 L993.4,689.8 L993.4,689.8 L992.1,684.5 L992.1,684.5 L990.8,679.2 L990.8,679.2 L989.6,674.1 L989.6,674.1 L988.6,669.2 L988.6,669.2 L987.6,664.3 L987.6,664.3 L986.7,659.7 L986.7,659.7 L986.1,655.7 L986.1,655.7 L985.7,652.3 L985.7,652.3 L985.6,649.3 L985.6,649.3 L985.6,648.3 L984.9,652.1 L984.2,656.9 L983.6,661.7 L983.2,666.8 L982.9,672.3 L982.8,677.9 L982.8,683.3 L983.0,688.4 L983.4,693.4 L983.9,698.3 L984.5,703.3 L985.2,708.4 L986.0,713.5 L986.8,718.5 L991.9,731.4 L1069.9,687.5 L1068.6,683.0 L1067.5,678.3 L1066.6,673.6 L1066.1,671.2 L1000.5,708.2Z" fill="#3c3a32" fill-opacity="0.022"/><path d="M1000.5,708.2 L1000.4,708.5 L1000.4,708.5 L1000.4,708.5 L1000.4,708.6 L1000.3,708.6 L1000.3,708.6 L1000.3,708.6 L1000.3,708.6 L1000.3,708.7 L1000.2,708.7 L1000.2,708.7 L1000.2,708.7 L1000.1,708.7 L1000.1,708.7 L1000.1,708.7 L1000.1,708.7 L1000.0,708.7 L1000.0,708.7 L1000.0,708.7 L999.9,708.7 L999.9,708.6 L999.9,708.6 L999.9,708.6 L999.9,708.6 L999.8,708.6 L999.8,708.5 L999.8,708.5 L998.9,706.1 L997.6,702.8 L997.6,702.8 L996.1,698.8 L996.1,698.8 L994.7,694.5 L994.7,694.5 L993.4,689.8 L993.4,689.8 L992.1,684.5 L992.1,684.5 L990.8,679.2 L990.8,679.2 L989.6,674.1 L989.6,674.1 L988.6,669.2 L988.6,669.2 L987.6,664.3 L987.6,664.3 L986.7,659.7 L986.7,659.7 L986.1,655.7 L986.1,655.7 L985.7,652.3 L985.7,652.3 L985.6,649.3 L985.6,649.3 L985.6,648.3 L984.9,652.1 L984.2,656.9 L983.6,661.7 L983.2,666.8 L982.9,672.3 L982.8,677.9 L982.8,683.3 L983.0,688.4 L983.4,693.4 L983.9,698.3 L984.5,703.3 L985.2,708.4 L986.0,713.5 L986.8,718.5 L987.8,723.2 L988.9,727.9 L990.2,732.5 L990.7,734.0 L990.8,734.3 L1070.5,689.4 L1070.0,687.5 L1068.6,683.0 L1067.5,678.3 L1066.6,673.6 L1066.1,671.2 L1000.5,708.2Z" fill="#3c3a32" fill-opacity="0.022"/><path d="M1000.5,708.2 L1000.4,708.5 L1000.4,708.5 L1000.4,708.5 L1000.4,708.6 L1000.3,708.6 L1000.3,708.6 L1000.3,708.6 L1000.3,708.6 L1000.3,708.7 L1000.2,708.7 L1000.2,708.7 L1000.2,708.7 L1000.1,708.7 L1000.1,708.7 L1000.1,708.7 L1000.1,708.7 L1000.0,708.7 L1000.0,708.7 L1000.0,708.7 L999.9,708.7 L999.9,708.6 L999.9,708.6 L999.9,708.6 L999.9,708.6 L999.8,708.6 L999.8,708.5 L999.8,708.5 L998.9,706.1 L997.6,702.8 L997.6,702.8 L996.1,698.8 L996.1,698.8 L994.7,694.5 L994.7,694.5 L993.4,689.8 L993.4,689.8 L992.1,684.5 L992.1,684.5 L990.8,679.2 L990.8,679.2 L989.6,674.1 L989.6,674.1 L988.6,669.2 L988.6,669.2 L987.6,664.3 L987.6,664.3 L986.7,659.7 L986.7,659.7 L986.1,655.7 L986.1,655.7 L985.7,652.3 L985.7,652.3 L985.6,649.3 L985.6,649.3 L985.6,648.3 L984.9,652.1 L984.2,656.9 L983.6,661.7 L983.2,666.8 L982.9,672.3 L982.8,677.9 L982.8,683.3 L983.0,688.4 L983.4,693.4 L983.9,698.3 L984.5,703.3 L985.2,708.4 L986.0,713.5 L986.8,718.5 L987.8,723.2 L988.9,727.9 L990.2,732.5 L991.4,736.2 L1071.1,691.4 L1070.0,687.5 L1068.6,683.0 L1067.5,678.3 L1066.6,673.6 L1066.1,671.2 L1000.5,708.2Z" fill="#3c3a32" fill-opacity="0.022"/><path d="M882.8,549.8 L882.4,549.7 L880.8,549.3 L879.2,548.9 L877.7,548.8 L876.3,548.9 L875.0,549.4 L873.7,550.2 L872.5,551.1 L871.4,552.1 L870.4,553.4 L869.5,554.9 L868.6,556.4 L868.6,556.4 L867.7,557.6 L867.7,557.6 L867.6,557.6 L866.6,558.6 L866.6,558.7 L865.5,559.5 L865.5,559.5 L865.5,559.5 L882.8,549.8Z" fill="url(#kmouth)"/><polygon points="846.2,383.8 848.1,383.3 850.8,382.6 854.0,381.9 857.5,381.2 861.4,380.7 865.7,380.1 870.3,379.7 875.0,379.5 879.8,379.6 884.8,379.9 889.9,380.4 895.0,381.2 900.0,382.3 905.0,383.7 910.0,385.2 915.0,387.0 920.1,389.0 925.2,391.2 930.2,393.6 935.0,396.2 939.6,399.1 944.1,402.1 948.4,405.4 952.5,408.8 956.5,412.3 960.3,416.0 964.0,419.9 967.5,423.8 970.9,427.7 974.1,431.8 977.1,435.9 980.0,440.0 982.7,444.1 985.2,448.1 987.6,452.2 990.0,456.2 992.3,460.4 994.6,464.5 996.8,468.6 998.8,472.5 1000.5,476.2 1002.2,479.8 1003.7,483.2 1005.0,486.2 1006.2,489.1 1007.3,491.7 1008.3,493.9 1008.9,495.4 1006.4,493.8 1002.9,491.5 998.9,488.9 995.0,486.2 991.3,483.6 987.5,480.8 983.7,478.0 980.0,475.0 976.1,471.6 972.0,467.9 968.3,464.6 965.8,462.3 967.0,464.4 968.6,467.4 970.7,470.8 973.3,474.4 976.7,478.1 980.7,482.1 985.0,486.2 988.9,490.0 992.4,493.4 995.8,496.6 999.1,499.9 1002.2,503.3 1005.2,507.1 1008.2,511.1 1010.9,515.1 1013.3,518.9 1015.4,522.4 1017.1,525.8 1018.7,529.1 1020.0,532.2 1021.1,534.9 1021.9,537.3 1022.6,540.0 1023.3,543.3 1024.0,547.6 1024.6,552.6 1025.2,557.9 1025.6,563.3 1025.9,568.8 1026.0,574.4 1026.1,580.1 1026.0,585.6 1025.8,590.7 1025.4,595.7 1025.0,600.6 1024.4,605.6 1023.6,611.3 1022.7,617.4 1021.7,622.9 1021.1,626.7 1020.0,624.2 1018.4,620.6 1016.5,616.4 1014.4,612.2 1012.2,607.9 1009.7,603.4 1007.1,598.8 1004.4,594.4 1001.7,590.4 998.8,586.5 995.9,582.7 993.3,578.9 990.8,574.9 988.4,570.9 986.3,567.0 984.4,563.3 982.9,559.9 981.7,556.6 980.8,553.6 980.0,551.0 979.5,548.8 979.2,546.9 979.0,545.5 978.9,544.4 979.0,547.7 979.2,552.5 979.5,557.9 980.0,563.3 980.8,568.6 981.7,574.2 982.9,580.0 984.4,585.6 986.3,591.2 988.4,596.7 990.8,602.3 993.3,607.8 996.0,613.5 998.9,619.2 1001.8,624.8 1004.4,630.0 1006.7,635.0 1008.9,639.7 1010.7,644.1 1012.2,647.8 1013.2,650.9 1013.7,653.4 1014.1,655.3 1014.3,656.7 1000.1,708.4 999.2,706.0 997.9,702.7 996.4,698.7 995.0,694.4 993.7,689.7 992.4,684.5 991.1,679.1 989.9,674.0 988.8,669.1 987.9,664.2 987.0,659.7 986.4,655.7 986.0,652.3 985.9,649.3 985.8,646.9 985.8,645.2 985.3,648.0 984.6,652.1 983.9,656.8 983.3,661.7 982.9,666.8 982.6,672.3 982.5,677.9 982.5,683.3 982.7,688.4 983.1,693.4 983.6,698.3 984.2,703.3 984.9,708.4 985.7,713.5 986.6,718.6 987.5,723.3 988.6,728.0 990.0,732.5 991.2,736.5 992.0,739.3 990.6,739.9 988.5,740.9 986.2,741.9 984.4,742.8 983.0,743.5 981.9,744.1 981.0,744.7 980.3,745.5 979.8,746.4 979.6,747.4 979.6,748.5 979.6,749.7 979.7,751.0 980.0,752.5 980.3,754.0 980.6,755.5 980.9,756.9 981.3,758.2 981.5,759.6 981.7,760.8 981.7,761.9 981.6,763.0 981.4,764.0 981.0,765.0 980.4,766.0 979.6,767.1 978.6,767.9 977.5,768.3 976.0,768.0 974.2,767.2 972.4,766.3 971.2,765.7 865.7,706.5 865.1,705.6 864.2,704.3 863.2,702.7 862.2,701.0 861.3,699.1 860.3,697.0 859.4,694.8 858.8,692.8 858.3,691.1 858.1,689.5 858.0,687.8 858.0,685.8 858.4,683.3 859.0,680.5 859.5,677.6 859.4,674.7 858.5,671.9 857.1,669.2 855.4,666.4 853.9,663.6 852.5,660.9 851.0,658.1 849.5,655.4 848.3,652.5 847.2,649.4 846.3,646.2 845.5,643.0 844.9,640.0 844.4,637.3 843.9,634.8 843.7,632.4 843.8,630.0 844.2,627.5 845.0,624.9 845.9,622.4 847.0,620.0 848.2,617.7 849.5,615.5 850.9,613.3 852.5,611.2 854.2,609.3 856.0,607.5 857.9,605.6 860.0,603.8 862.3,601.7 864.8,599.6 867.4,597.5 870.0,595.5 872.5,593.7 875.0,592.0 877.5,590.4 880.0,588.8 882.5,587.1 885.0,585.5 887.5,584.0 890.0,582.5 892.5,581.1 895.1,579.8 897.6,578.5 900.0,577.0 902.3,575.4 904.6,573.7 906.8,571.9 908.8,570.0 910.6,567.9 912.2,565.7 913.7,563.5 915.0,561.2 916.0,559.1 916.8,556.9 917.5,554.7 918.0,552.5 918.4,550.2 918.7,547.7 918.9,545.5 919.0,544.0 918.8,544.4 918.6,545.0 918.2,545.7 917.5,546.5 916.6,547.6 915.4,548.8 914.0,550.1 912.5,551.2 910.8,552.2 908.9,553.1 906.9,553.9 905.0,554.5 903.1,554.9 901.2,555.1 899.4,555.2 897.5,555.0 895.6,554.6 893.8,554.0 891.9,553.2 890.0,552.5 888.1,551.7 886.2,550.9 884.3,550.1 882.5,549.5 880.8,549.1 879.2,548.7 877.7,548.6 876.2,548.8 874.9,549.2 873.6,550.0 872.4,550.9 871.2,552.0 870.2,553.3 869.3,554.8 868.4,556.2 867.5,557.5 866.5,558.5 865.4,559.3 864.4,560.0 863.8,560.5 862.6,559.5 861.0,558.1 859.2,556.5 857.5,555.0 855.9,553.7 854.4,552.3 852.8,551.1 851.2,550.0 849.7,549.2 848.1,548.5 846.5,548.0 845.0,547.5 843.4,547.1 841.7,546.7 840.3,546.4 839.2,546.2 838.7,545.4 838.0,544.2 837.1,542.8 836.2,541.2 835.5,539.6 834.7,537.7 833.9,535.8 833.0,533.8 832.1,531.7 831.1,529.5 830.1,527.2 829.2,525.0 828.5,522.8 827.8,520.6 827.3,518.4 826.8,516.2 826.3,514.0 825.9,511.7 825.6,509.5 825.5,507.5 825.5,505.7 825.6,504.1 825.8,502.7 826.2,501.2 826.9,499.9 827.8,498.7 828.8,497.5 830.0,496.2 831.4,494.9 833.0,493.6 834.6,492.1 836.2,490.5 837.8,488.7 839.5,486.7 841.0,484.6 842.5,482.5 843.9,480.3 845.2,478.1 846.4,475.9 847.5,473.8 848.6,471.8 849.6,469.8 850.5,468.0 851.2,466.2 851.9,464.5 852.4,462.9 852.8,461.4 853.0,460.0 853.0,459.0 852.9,458.2 852.7,457.4 852.5,456.2 852.3,454.6 852.1,452.7 852.0,450.7 852.0,448.8 852.2,446.9 852.6,445.1 853.1,443.2 853.8,441.2 854.5,439.2 855.5,437.0 856.5,434.7 857.5,432.5 858.6,430.2 859.7,427.9 860.9,425.7 862.0,423.8 863.1,422.0 864.2,420.5 865.2,419.2 866.2,418.0 867.3,416.9 868.4,415.9 869.3,415.1 870.0,414.5 869.5,413.3 868.8,411.5 867.9,409.4 867.0,407.5 866.1,405.7 865.2,403.8 864.1,401.9 863.0,400.0 861.7,398.1 860.4,396.1 859.0,394.2 857.5,392.5 856.0,390.9 854.3,389.5 852.7,388.2 851.2,387.0 849.8,386.0 848.4,385.0 847.1,384.3" fill="url(#kface)"/><path d="M847.1,384.3 L848.4,385.0 L849.8,386.0 L851.2,387.0 L852.7,388.2 L854.3,389.5 L856.0,390.9 L857.5,392.5 L859.0,394.2 L860.4,396.1 L861.7,398.1 L863.0,400.0 L864.1,401.9 L865.2,403.8 L866.1,405.7 L867.0,407.5 L867.9,409.4 L868.8,411.5 L869.5,413.3 L870.0,414.5 L869.3,415.1 L868.4,415.9 L867.3,416.9 L866.2,418.0 L865.2,419.2 L864.2,420.5 L863.1,422.0 L862.0,423.8 L860.9,425.7 L859.7,427.9 L858.6,430.2 L857.5,432.5 L856.5,434.7 L855.5,437.0 L854.5,439.2 L853.8,441.2 L853.1,443.2 L852.6,445.1 L852.2,446.9 L852.0,448.8 L852.0,450.7 L852.1,452.7 L852.3,454.6 L852.5,456.2 L852.7,457.4 L852.9,458.2 L853.0,459.0 L853.0,460.0 L852.8,461.4 L852.4,462.9 L851.9,464.5 L851.2,466.2 L850.5,468.0 L849.6,469.8 L848.6,471.8 L847.5,473.8 L846.4,475.9 L845.2,478.1 L843.9,480.3 L842.5,482.5 L841.0,484.6 L839.5,486.7 L837.8,488.7 L836.2,490.5 L834.6,492.1 L833.0,493.6 L831.4,494.9 L830.0,496.2 L828.8,497.5 L827.8,498.7 L826.9,499.9 L826.2,501.2 L825.8,502.7 L825.6,504.1 L825.5,505.7 L825.5,507.5 L825.6,509.5 L825.9,511.7 L826.3,514.0 L826.8,516.2 L827.3,518.4 L827.8,520.6 L828.5,522.8 L829.2,525.0 L830.1,527.2 L831.1,529.5 L832.1,531.7 L833.0,533.8 L833.9,535.8 L834.7,537.7 L835.5,539.6 L836.2,541.2 L837.1,542.8 L838.0,544.2 L838.7,545.4 L839.2,546.2 L840.3,546.4 L841.7,546.7 L843.4,547.1 L845.0,547.5 L846.5,548.0 L848.1,548.5 L849.7,549.2 L851.2,550.0 L852.8,551.1 L854.4,552.3 L855.9,553.7 L857.5,555.0 L859.2,556.5 L861.0,558.1 L862.6,559.5 L863.8,560.5 L883.0,549.7 L884.3,550.1 L886.2,550.9 L888.1,551.7 L890.0,552.5 L891.9,553.2 L893.8,554.0 L895.6,554.6 L897.5,555.0 L899.4,555.2 L901.2,555.1 L903.1,554.9 L905.0,554.5 L906.9,553.9 L908.9,553.1 L910.8,552.2 L918.7,547.8 L918.4,550.2 L918.0,552.5 L917.5,554.7 L916.8,556.9 L916.0,559.1 L915.0,561.2 L913.7,563.5 L912.2,565.7 L910.6,567.9 L908.8,570.0 L906.8,571.9 L904.6,573.7 L902.3,575.4 L901.0,576.3 L890.0,582.5 L887.5,584.0 L885.0,585.5 L882.5,587.1 L880.0,588.8 L877.5,590.4 L875.0,592.0 L872.5,593.7 L870.0,595.5 L867.4,597.5 L864.8,599.6 L862.3,601.7 L860.0,603.8 L857.9,605.6 L856.0,607.5 L854.2,609.3 L852.5,611.2 L850.9,613.3 L849.5,615.5 L848.2,617.7 L847.0,620.0 L845.9,622.4 L845.0,624.9 L844.2,627.5 L843.8,630.0 L843.7,632.4 L843.9,634.8 L844.4,637.3 L844.9,640.0 L845.5,643.0 L846.3,646.2 L847.2,649.4 L848.3,652.5 L849.5,655.4 L851.0,658.1 L852.5,660.9 L853.9,663.6 L855.4,666.4 L857.1,669.2 L858.5,671.9 L859.4,674.7 L859.5,677.6 L859.0,680.5 L858.4,683.3 L858.0,685.8 L858.0,687.8 L858.1,689.5 L858.3,691.1 L858.8,692.8 L859.4,694.8 L860.3,697.0 L861.3,699.1 L862.2,701.0 L863.2,702.7 L864.2,704.3 L865.1,705.6 L865.7,706.5 L971.2,765.7 L972.4,766.3 L974.2,767.2 L976.0,768.0 L977.5,768.3 L978.6,767.9 L1058.6,722.9 L1059.6,722.1 L1060.4,721.0 L1061.0,720.0 L1061.4,719.0 L1061.6,718.0 L1061.7,716.9 L1061.7,715.8 L1061.5,714.6 L1061.3,713.2 L1060.9,711.9 L1060.6,710.5 L1060.3,709.0 L1060.0,707.5 L1059.7,706.0 L1059.6,704.7 L1059.6,703.5 L1059.6,702.4 L1059.8,701.4 L1060.0,701.0 L1072.0,694.3 L1071.2,691.5 L1070.0,687.5 L1068.6,683.0 L1067.5,678.3 L1066.6,673.6 L1066.1,671.2 L1080.1,663.4 L1094.3,611.7 L1094.1,610.3 L1093.7,608.4 L1093.2,605.9 L1092.2,602.8 L1090.7,599.1 L1088.9,594.7 L1086.7,590.0 L1086.7,589.8 L1101.1,581.7 L1101.7,577.9 L1102.7,572.4 L1103.6,566.3 L1104.4,560.6 L1105.0,555.6 L1105.4,550.7 L1105.8,545.7 L1106.0,540.6 L1106.1,535.1 L1106.0,529.4 L1105.9,523.8 L1105.6,518.3 L1105.2,512.9 L1104.6,507.6 L1104.0,502.6 L1103.3,498.3 L1102.6,495.0 L1101.9,492.3 L1101.1,489.9 L1100.0,487.2 L1098.7,484.1 L1097.1,480.8 L1095.4,477.4 L1093.3,473.9 L1090.9,470.1 L1088.2,466.1 L1085.2,462.1 L1082.2,458.3 L1079.7,455.6 L1088.9,450.4 L1088.3,448.9 L1087.3,446.7 L1086.2,444.1 L1085.0,441.2 L1083.7,438.2 L1082.2,434.8 L1080.5,431.2 L1078.8,427.5 L1076.8,423.6 L1074.6,419.5 L1072.3,415.4 L1070.0,411.2 L1067.6,407.2 L1065.2,403.1 L1062.7,399.1 L1060.0,395.0 L1057.1,390.9 L1054.1,386.8 L1050.9,382.7 L1047.5,378.8 L1044.0,374.9 L1040.3,371.0 L1036.5,367.3 L1032.5,363.8 L1028.4,360.4 L1024.1,357.1 L1019.6,354.1 L1015.0,351.2 L1010.2,348.6 L1005.2,346.2 L1000.1,344.0 L995.0,342.0 L990.0,340.2 L985.0,338.7 L980.0,337.3 L975.0,336.2 L969.9,335.4 L964.8,334.9 L959.8,334.6 L955.0,334.5 L950.3,334.7 L945.7,335.1 L941.4,335.7 L937.5,336.2 L934.0,336.9 L930.8,337.6 L928.1,338.3 L926.2,338.8 L846.2,383.8 L847.1,384.3ZM886.2,361.2 L887.2,361.0 L888.1,360.8 L889.5,360.4 L890.8,360.1 L892.4,359.7 L894.0,359.4 L895.7,359.1 L897.5,358.8 L899.4,358.5 L901.4,358.2 L903.5,357.9 L905.7,357.6 L908.0,357.4 L910.3,357.2 L912.7,357.1 L915.0,357.0 L917.4,357.0 L919.8,357.1 L922.3,357.3 L924.8,357.4 L927.4,357.7 L929.9,357.9 L932.5,358.3 L935.0,358.8 L937.5,359.3 L940.0,359.8 L942.5,360.5 L945.0,361.2 L947.5,361.9 L950.0,362.7 L952.5,363.6 L955.0,364.5 L957.5,365.5 L960.1,366.5 L962.6,367.6 L965.2,368.7 L967.7,369.9 L970.2,371.1 L972.6,372.4 L975.0,373.8 L977.3,375.2 L979.6,376.6 L981.8,378.1 L984.1,379.6 L986.2,381.3 L988.4,382.9 L990.4,384.6 L992.5,386.2 L994.5,388.0 L996.5,389.8 L998.4,391.7 L1000.3,393.5 L1002.1,395.4 L1004.0,397.4 L1005.7,399.3 L1007.5,401.2 L1009.2,403.2 L1010.9,405.2 L1012.5,407.3 L1014.1,409.3 L1015.6,411.4 L1017.1,413.4 L1018.6,415.5 L1020.0,417.5 L1021.4,419.5 L1022.7,421.6 L1024.0,423.6 L1025.2,425.6 L1026.4,427.7 L1027.6,429.7 L1028.8,431.7 L1030.0,433.8 L1031.2,435.8 L1032.3,437.9 L1033.5,440.0 L1034.6,442.0 L1035.7,444.1 L1036.8,446.1 L1037.8,448.1 L1038.8,450.0 L1039.6,451.9 L1040.5,453.7 L1041.4,455.5 L1042.2,457.3 L1042.9,459.0 L1043.7,460.7 L1044.3,462.2 L1045.0,463.8 L1045.6,465.2 L1046.2,466.6 L1046.8,467.9 L1047.3,469.2 L1047.8,470.3 L1048.3,471.4 L1048.6,472.1 L1048.9,472.9M1040.6,479.1 L1042.2,480.8 L1043.7,482.7 L1045.2,484.6 L1046.7,486.6 L1048.2,488.6 L1049.5,490.6 L1050.9,492.6 L1052.1,494.5 L1053.3,496.4 L1054.3,498.2 L1055.4,499.9 L1056.3,501.6 L1057.1,503.3 L1057.9,505.0 L1058.7,506.6 L1059.3,508.1 L1060.0,509.7 L1060.5,511.1 L1061.1,512.4 L1061.5,513.6 L1061.9,514.8 L1062.3,516.1 L1062.6,517.5 L1063.0,519.1 L1063.3,520.8 L1063.6,523.0 L1064.0,525.1 L1064.3,527.6 L1064.6,530.1 L1064.9,532.8 L1065.2,535.4 L1065.4,538.1 L1065.6,540.8 L1065.7,543.5 L1065.9,546.3 L1066.0,549.1 L1066.0,551.9 L1066.1,554.8 L1066.1,557.6 L1066.0,560.4 L1066.0,563.1 L1065.9,565.7 L1065.8,568.2 L1065.6,570.7 L1065.4,573.2 L1065.2,575.6 L1065.0,578.1 L1064.7,580.6 L1064.4,583.1 L1064.0,585.9 L1063.6,588.8 L1063.1,591.8 L1062.7,594.9 L1062.2,597.6 L1061.7,600.4 L1061.4,602.3 L1061.1,604.2M1046.7,612.5 L1047.8,614.8 L1048.9,617.2 L1049.8,619.4 L1050.7,621.6 L1051.5,623.4 L1052.2,625.3 L1052.7,626.8 L1053.2,628.4 L1053.5,629.6 L1053.7,630.9 L1053.9,631.8 L1054.1,632.8 L1054.2,633.5 L1054.3,634.2 L1047.2,660.0 L1040.1,685.9M1026.1,693.6 L1026.6,696.1 L1027.0,698.4 L1027.5,700.8 L1028.1,703.1 L1028.6,705.5 L1029.3,707.8 L1030.0,710.0 L1030.6,712.0 L1031.2,714.0 L1031.6,715.4 L1032.0,716.8 L1031.3,717.1 L1030.6,717.4 L1029.5,717.9M1020.1,723.5 L1019.8,723.9 L1019.7,724.4 L1019.6,724.9 L1019.6,725.5 L1019.6,726.0 L1019.6,726.6 L1019.6,727.2 L1019.7,727.9 L1019.7,728.5 L1019.9,729.3 L1020.0,730.0 L1020.1,730.8 L1020.3,731.5 L1020.5,732.3 L1020.6,733.0 L1020.8,733.7 L1020.9,734.4 L1021.1,735.1 L1021.3,735.7 L1021.4,736.4 L1021.5,737.1 L1021.6,737.7 L1021.7,738.3 L1021.7,738.9 L1021.7,739.4 L1021.7,740.0 L1021.6,740.5 L1021.5,741.0 L1021.4,741.5 L1021.2,742.0 L1021.0,742.5 L1020.7,743.0 L1020.4,743.5 L1020.0,744.1 L1019.6,744.6 L1019.1,745.0 L1018.6,745.4 L1018.1,745.6 L1017.5,745.8M886.2,361.2 L887.2,361.0M926.2,338.8 L927.2,338.5 L928.1,338.3 L929.5,337.9 L930.8,337.6 L932.4,337.2 L934.0,336.9 L935.7,336.6 L937.5,336.2 L939.4,336.0 L941.4,335.7 L943.5,335.4 L945.7,335.1 L948.0,334.9 L950.3,334.7 L952.7,334.6 L955.0,334.5 L957.4,334.5 L959.8,334.6 L962.3,334.8 L964.8,334.9 L967.4,335.2 L969.9,335.4 L972.5,335.8 L975.0,336.2 L977.5,336.8 L980.0,337.3 L982.5,338.0 L985.0,338.7 L987.5,339.4 L990.0,340.2 L992.5,341.1 L995.0,342.0 L997.5,343.0 L1000.1,344.0 L1002.6,345.1 L1005.2,346.2 L1007.7,347.4 L1010.2,348.6 L1012.6,349.9 L1015.0,351.2 L1017.3,352.7 L1019.6,354.1 L1021.8,355.6 L1024.1,357.1 L1026.2,358.8 L1028.4,360.4 L1030.4,362.1 L1032.5,363.8 L1034.5,365.5 L1036.5,367.3 L1038.4,369.2 L1040.3,371.0 L1042.1,372.9 L1044.0,374.9 L1045.7,376.8 L1047.5,378.8 L1049.2,380.7 L1050.9,382.7 L1052.5,384.8 L1054.1,386.8 L1055.6,388.9 L1057.1,390.9 L1058.6,393.0 L1060.0,395.0 L1061.4,397.0 L1062.7,399.1 L1064.0,401.1 L1065.2,403.1 L1066.4,405.2 L1067.6,407.2 L1068.8,409.2 L1070.0,411.2 L1071.2,413.3 L1072.3,415.4 L1073.5,417.5 L1074.6,419.5 L1075.7,421.6 L1076.8,423.6 L1077.8,425.6 L1078.8,427.5 L1079.6,429.4 L1080.5,431.2 L1081.4,433.0 L1082.2,434.8 L1082.9,436.5 L1083.7,438.2 L1084.3,439.7 L1085.0,441.2 L1085.6,442.7 L1086.2,444.1 L1086.8,445.4 L1087.3,446.7 L1087.8,447.8 L1088.3,448.9 L1088.6,449.6 L1088.9,450.4M1080.6,456.6 L1082.2,458.3 L1083.7,460.2 L1085.2,462.1 L1086.7,464.1 L1088.2,466.1 L1089.5,468.1 L1090.9,470.1 L1092.1,472.0 L1093.3,473.9 L1094.3,475.7 L1095.4,477.4 L1096.3,479.1 L1097.1,480.8 L1097.9,482.5 L1098.7,484.1 L1099.3,485.6 L1100.0,487.2 L1100.5,488.6 L1101.1,489.9 L1101.5,491.1 L1101.9,492.3 L1102.3,493.6 L1102.6,495.0 L1103.0,496.6 L1103.3,498.3 L1103.6,500.5 L1104.0,502.6 L1104.3,505.1 L1104.6,507.6 L1104.9,510.3 L1105.2,512.9 L1105.4,515.6 L1105.6,518.3 L1105.7,521.0 L1105.9,523.8 L1106.0,526.6 L1106.0,529.4 L1106.1,532.3 L1106.1,535.1 L1106.0,537.9 L1106.0,540.6 L1105.9,543.2 L1105.8,545.7 L1105.6,548.2 L1105.4,550.7 L1105.2,553.1 L1105.0,555.6 L1104.7,558.1 L1104.4,560.6 L1104.0,563.4 L1103.6,566.3 L1103.1,569.3 L1102.7,572.4 L1102.2,575.1 L1101.7,577.9 L1101.4,579.8 L1101.1,581.7M1086.7,590.0 L1087.8,592.3 L1088.9,594.7 L1089.8,596.9 L1090.7,599.1 L1091.5,600.9 L1092.2,602.8 L1092.7,604.3 L1093.2,605.9 L1093.5,607.1 L1093.7,608.4 L1093.9,609.3 L1094.1,610.3 L1094.2,611.0 L1094.3,611.7 L1087.2,637.5 L1080.1,663.4M1066.1,671.1 L1066.6,673.6 L1067.0,675.9 L1067.5,678.3 L1068.1,680.6 L1068.6,683.0 L1069.3,685.3 L1070.0,687.5 L1070.6,689.5 L1071.2,691.5 L1071.6,692.9 L1072.0,694.3 L1071.3,694.6 L1070.6,694.9 L1069.5,695.4M1060.1,701.0 L1059.8,701.4 L1059.7,701.9 L1059.6,702.4 L1059.6,703.0 L1059.6,703.5 L1059.6,704.1 L1059.6,704.7 L1059.7,705.4 L1059.7,706.0 L1059.9,706.8 L1060.0,707.5 L1060.1,708.3 L1060.3,709.0 L1060.5,709.8 L1060.6,710.5 L1060.8,711.2 L1060.9,711.9 L1061.1,712.6 L1061.3,713.2 L1061.4,713.9 L1061.5,714.6 L1061.6,715.2 L1061.7,715.8 L1061.7,716.4 L1061.7,716.9 L1061.7,717.5 L1061.6,718.0 L1061.5,718.5 L1061.4,719.0 L1061.2,719.5 L1061.0,720.0 L1060.7,720.5 L1060.4,721.0 L1060.0,721.6 L1059.6,722.1 L1059.1,722.5 L1058.6,722.9 L1058.1,723.1 L1057.5,723.3M926.2,338.8 L927.2,338.5M846.2,383.8 L926.2,338.8M1008.9,495.4 L1088.9,450.4M1021.1,626.7 L1101.1,581.7M1014.3,656.7 L1094.3,611.7M1000.1,708.4 L1080.1,663.4M992.0,739.3 L1072.0,694.3M863.8,560.5 L882.4,550.0M998.8,472.5 L1078.8,427.5M1023.3,543.3 L1103.3,498.3M846.2,383.8 L848.1,383.3 L850.8,382.6 L854.0,381.9 L857.5,381.2 L861.4,380.7 L865.7,380.1 L870.3,379.7 L875.0,379.5 L879.8,379.6 L884.8,379.9 L889.9,380.4 L895.0,381.2 L900.0,382.3 L905.0,383.7 L910.0,385.2 L915.0,387.0 L920.1,389.0 L925.2,391.2 L930.2,393.6 L935.0,396.2 L939.6,399.1 L944.1,402.1 L948.4,405.4 L952.5,408.8 L956.5,412.3 L960.3,416.0 L964.0,419.9 L967.5,423.8 L970.9,427.7 L974.1,431.8 L977.1,435.9 L980.0,440.0 L982.7,444.1 L985.2,448.1 L987.6,452.2 L990.0,456.2 L992.3,460.4 L994.6,464.5 L996.8,468.6 L998.8,472.5 L1000.5,476.2 L1002.2,479.8 L1003.7,483.2 L1005.0,486.2 L1006.2,489.1 L1007.3,491.7 L1008.3,493.9 L1008.9,495.4 L1006.4,493.8 L1002.9,491.5 L998.9,488.9 L995.0,486.2 L991.3,483.6 L987.5,480.8 L983.7,478.0 L980.0,475.0 L976.1,471.6 L972.0,467.9 L968.3,464.6 L965.8,462.3 L967.0,464.4 L968.6,467.4 L970.7,470.8 L973.3,474.4 L976.7,478.1 L980.7,482.1 L985.0,486.2 L988.9,490.0 L992.4,493.4 L995.8,496.6 L999.1,499.9 L1002.2,503.3 L1005.2,507.1 L1008.2,511.1 L1010.9,515.1 L1013.3,518.9 L1015.4,522.4 L1017.1,525.8 L1018.7,529.1 L1020.0,532.2 L1021.1,534.9 L1021.9,537.3 L1022.6,540.0 L1023.3,543.3 L1024.0,547.6 L1024.6,552.6 L1025.2,557.9 L1025.6,563.3 L1025.9,568.8 L1026.0,574.4 L1026.1,580.1 L1026.0,585.6 L1025.8,590.7 L1025.4,595.7 L1025.0,600.6 L1024.4,605.6 L1023.6,611.3 L1022.7,617.4 L1021.7,622.9 L1021.1,626.7 L1020.0,624.2 L1018.4,620.6 L1016.5,616.4 L1014.4,612.2 L1012.2,607.9 L1009.7,603.4 L1007.1,598.8 L1004.4,594.4 L1001.7,590.4 L998.8,586.5 L995.9,582.7 L993.3,578.9 L990.8,574.9 L988.4,570.9 L986.3,567.0 L984.4,563.3 L982.9,559.9 L981.7,556.6 L980.8,553.6 L980.0,551.0 L979.5,548.8 L979.2,546.9 L979.0,545.5 L978.9,544.4 L979.0,547.7 L979.2,552.5 L979.5,557.9 L980.0,563.3 L980.8,568.6 L981.7,574.2 L982.9,580.0 L984.4,585.6 L986.3,591.2 L988.4,596.7 L990.8,602.3 L993.3,607.8 L996.0,613.5 L998.9,619.2 L1001.8,624.8 L1004.4,630.0 L1006.7,635.0 L1008.9,639.7 L1010.7,644.1 L1012.2,647.8 L1013.2,650.9 L1013.7,653.4 L1014.1,655.3 L1014.3,656.7 L1000.1,708.4 L999.2,706.0 L997.9,702.7 L996.4,698.7 L995.0,694.4 L993.7,689.7 L992.4,684.5 L991.1,679.1 L989.9,674.0 L988.8,669.1 L987.9,664.2 L987.0,659.7 L986.4,655.7 L986.0,652.3 L985.9,649.3 L985.8,646.9 L985.8,645.2 L985.3,648.0 L984.6,652.1 L983.9,656.8 L983.3,661.7 L982.9,666.8 L982.6,672.3 L982.5,677.9 L982.5,683.3 L982.7,688.4 L983.1,693.4 L983.6,698.3 L984.2,703.3 L984.9,708.4 L985.7,713.5 L986.6,718.6 L987.5,723.3 L988.6,728.0 L990.0,732.5 L991.2,736.5 L992.0,739.3 L990.6,739.9 L988.5,740.9 L986.2,741.9 L984.4,742.8 L983.0,743.5 L981.9,744.1 L981.0,744.7 L980.3,745.5 L979.8,746.4 L979.6,747.4 L979.6,748.5 L979.6,749.7 L979.7,751.0 L980.0,752.5 L980.3,754.0 L980.6,755.5 L980.9,756.9 L981.3,758.2 L981.5,759.6 L981.7,760.8 L981.7,761.9 L981.6,763.0 L981.4,764.0 L981.0,765.0 L980.4,766.0 L979.6,767.1 L978.6,767.9 L977.5,768.3 L976.0,768.0 L974.2,767.2 L972.4,766.3 L971.2,765.7 L865.7,706.5 L865.1,705.6 L864.2,704.3 L863.2,702.7 L862.2,701.0 L861.3,699.1 L860.3,697.0 L859.4,694.8 L858.8,692.8 L858.3,691.1 L858.1,689.5 L858.0,687.8 L858.0,685.8 L858.4,683.3 L859.0,680.5 L859.5,677.6 L859.4,674.7 L858.5,671.9 L857.1,669.2 L855.4,666.4 L853.9,663.6 L852.5,660.9 L851.0,658.1 L849.5,655.4 L848.3,652.5 L847.2,649.4 L846.3,646.2 L845.5,643.0 L844.9,640.0 L844.4,637.3 L843.9,634.8 L843.7,632.4 L843.8,630.0 L844.2,627.5 L845.0,624.9 L845.9,622.4 L847.0,620.0 L848.2,617.7 L849.5,615.5 L850.9,613.3 L852.5,611.2 L854.2,609.3 L856.0,607.5 L857.9,605.6 L860.0,603.8 L862.3,601.7 L864.8,599.6 L867.4,597.5 L870.0,595.5 L872.5,593.7 L875.0,592.0 L877.5,590.4 L880.0,588.8 L882.5,587.1 L885.0,585.5 L887.5,584.0 L890.0,582.5 L892.5,581.1 L895.1,579.8 L897.6,578.5 L900.0,577.0 L902.3,575.4 L904.6,573.7 L906.8,571.9 L908.8,570.0 L910.6,567.9 L912.2,565.7 L913.7,563.5 L915.0,561.2 L916.0,559.1 L916.8,556.9 L917.5,554.7 L918.0,552.5 L918.4,550.2 L918.7,547.7 L918.9,545.5 L919.0,544.0 L918.8,544.4 L918.6,545.0 L918.2,545.7 L917.5,546.5 L916.6,547.6 L915.4,548.8 L914.0,550.1 L912.5,551.2 L910.8,552.2 L908.9,553.1 L906.9,553.9 L905.0,554.5 L903.1,554.9 L901.2,555.1 L899.4,555.2 L897.5,555.0 L895.6,554.6 L893.8,554.0 L891.9,553.2 L890.0,552.5 L888.1,551.7 L886.2,550.9 L884.3,550.1 L882.5,549.5 L880.8,549.1 L879.2,548.7 L877.7,548.6 L876.2,548.8 L874.9,549.2 L873.6,550.0 L872.4,550.9 L871.2,552.0 L870.2,553.3 L869.3,554.8 L868.4,556.2 L867.5,557.5 L866.5,558.5 L865.4,559.3 L864.4,560.0 L863.8,560.5 L862.6,559.5 L861.0,558.1 L859.2,556.5 L857.5,555.0 L855.9,553.7 L854.4,552.3 L852.8,551.1 L851.2,550.0 L849.7,549.2 L848.1,548.5 L846.5,548.0 L845.0,547.5 L843.4,547.1 L841.7,546.7 L840.3,546.4 L839.2,546.2 L838.7,545.4 L838.0,544.2 L837.1,542.8 L836.2,541.2 L835.5,539.6 L834.7,537.7 L833.9,535.8 L833.0,533.8 L832.1,531.7 L831.1,529.5 L830.1,527.2 L829.2,525.0 L828.5,522.8 L827.8,520.6 L827.3,518.4 L826.8,516.2 L826.3,514.0 L825.9,511.7 L825.6,509.5 L825.5,507.5 L825.5,505.7 L825.6,504.1 L825.8,502.7 L826.2,501.2 L826.9,499.9 L827.8,498.7 L828.8,497.5 L830.0,496.2 L831.4,494.9 L833.0,493.6 L834.6,492.1 L836.2,490.5 L837.8,488.7 L839.5,486.7 L841.0,484.6 L842.5,482.5 L843.9,480.3 L845.2,478.1 L846.4,475.9 L847.5,473.8 L848.6,471.8 L849.6,469.8 L850.5,468.0 L851.2,466.2 L851.9,464.5 L852.4,462.9 L852.8,461.4 L853.0,460.0 L853.0,459.0 L852.9,458.2 L852.7,457.4 L852.5,456.2 L852.3,454.6 L852.1,452.7 L852.0,450.7 L852.0,448.8 L852.2,446.9 L852.6,445.1 L853.1,443.2 L853.8,441.2 L854.5,439.2 L855.5,437.0 L856.5,434.7 L857.5,432.5 L858.6,430.2 L859.7,427.9 L860.9,425.7 L862.0,423.8 L863.1,422.0 L864.2,420.5 L865.2,419.2 L866.2,418.0 L867.3,416.9 L868.4,415.9 L869.3,415.1 L870.0,414.5 L869.5,413.3 L868.8,411.5 L867.9,409.4 L867.0,407.5 L866.1,405.7 L865.2,403.8 L864.1,401.9 L863.0,400.0 L861.7,398.1 L860.4,396.1 L859.0,394.2 L857.5,392.5 L856.0,390.9 L854.3,389.5 L852.7,388.2 L851.2,387.0 L849.8,386.0 L848.4,385.0 L847.1,384.3Z" fill="none" stroke="#181818" stroke-width="1.1" stroke-linejoin="round" stroke-linecap="round"/></svg>
<svg class="abs" style="left:1780px;top:8px" width="140" height="140" viewBox="1780 180 140 140"><defs><radialGradient id="vcs" cx="0.5" cy="0.5" r="0.5"><stop offset="0" stop-color="#000" stop-opacity="0.22"/><stop offset="1" stop-color="#000" stop-opacity="0"/></radialGradient><linearGradient id="vcf" x1="0" y1="0" x2="1" y2="1"><stop offset="0" stop-color="#e6e6e8"/><stop offset="1" stop-color="#f3f3f4"/></linearGradient><linearGradient id="vcr" x1="0" y1="0" x2="0.6" y2="1"><stop offset="0" stop-color="#ececee"/><stop offset="1" stop-color="#d9d9dc"/></linearGradient></defs><ellipse cx="1868" cy="270" rx="34" ry="17" fill="url(#vcs)" transform="rotate(-18 1868 270)"/><polygon points="1856.40,202.90 1891.60,218.50 1856.40,236.60 1822.10,217.90" fill="#f1f1f2" /><polygon points="1822.10,217.90 1856.40,236.60 1856.40,278.10 1825.10,257.00" fill="url(#vcf)" /><polygon points="1856.40,236.60 1891.60,218.50 1887.90,257.00 1856.40,278.10" fill="url(#vcr)" /><path d="M1822.1,217.9 L1856.4,202.9 L1891.6,218.5 L1887.9,257 L1856.4,278.1 M1822.1,217.9 L1856.4,236.6 L1891.6,218.5 M1856.4,236.6 L1856.4,278.1" fill="none" stroke="#6a6a6a" stroke-width="0.8" /><line x1="1819.80" y1="212.00" x2="1825.10" y2="256.60" stroke="#5858c8" stroke-width="1.8" /><line x1="1825.10" y1="256.80" x2="1861.20" y2="283.40" stroke="#e88a94" stroke-width="1.8" /><text x="1813.6" y="209" font-family="Liberation Sans,sans-serif" font-size="13.5" font-weight="700" fill="#8080ea">Z</text><text x="1863" y="294" font-family="Liberation Sans,sans-serif" font-size="13" font-weight="700" fill="#f08692">X</text><text transform="matrix(0.86,0.42,-0.86,0.42,1856.8,220) " text-anchor="middle" font-family="Liberation Sans,sans-serif" font-size="7.6" font-weight="700" fill="#ababaf" y="2.6">TOP</text><text transform="matrix(0.82,0.54,0,1,1839.6,248)" text-anchor="middle" font-family="Liberation Sans,sans-serif" font-size="7.8" font-weight="700" fill="#ababaf" y="2.8">FRONT</text><text transform="matrix(0.82,-0.5,0,1,1873.2,248)" text-anchor="middle" font-family="Liberation Sans,sans-serif" font-size="7.8" font-weight="700" fill="#ababaf" y="2.8">RIGHT</text></svg>
<svg class="abs" style="left:0;top:0" width="400" height="400" viewBox="0 172 400 400"><defs><linearGradient id="cylg" x1="0" x2="1"><stop offset="0" stop-color="#f4f4f4"/><stop offset="0.6" stop-color="#e6e6e6"/><stop offset="1" stop-color="#c9c9c9"/></linearGradient></defs><rect x="5.50" y="180.50" width="373.50" height="29.50" fill="#f0f0f0" stroke="#cbcbcb" stroke-width="1"/><path d="M5.5,210.2 H379 V180.5" fill="none" stroke="#bcbcbc" stroke-width="1.3" /><polygon points="11.80,196.00 17.60,192.20 17.60,199.80" fill="#3a3a3a" /><polygon points="17.80,196.00 23.80,192.20 23.80,199.80" fill="#3a3a3a" /><circle cx="359.50" cy="195.30" r="5.60" fill="#222"/><rect x="356.40" y="194.50" width="6.20" height="1.70" fill="#fff"/><rect x="50.00" y="217.70" width="217.30" height="24.50" fill="#efefef"/><rect x="52.40" y="220.00" width="3.60" height="19.60" fill="#f8d26e"/><polygon points="37.00,226.00 37.00,234.40 28.00,234.40" fill="#2b2b2b" /><polygon points="35.60,229.20 35.60,233.00 31.40,233.00" fill="#5a5a5a" /><path d="M60,229.8 Q70,217.4 80,229.8 Q70,242.20000000000002 60,229.8 Z" fill="#8c8c8c" /><circle cx="70.00" cy="229.80" r="3.70" fill="#ececec"/><circle cx="70.00" cy="229.80" r="1.80" fill="#8c8c8c"/><rect x="87.40" y="220.00" width="122.60" height="19.80" fill="#959595"/><line x1="118.00" y1="220.00" x2="118.00" y2="239.80" stroke="#a4a4a4" stroke-width="1" /><path d="M94,224.4 L96.6,221.2 H108.6 Q109.4,221.2 109.4,222 V232.4 L106.4,236 H94.8 Q94,236 94,235.2 Z" fill="#d9dce2" stroke="#555" stroke-width="1.1" /><path d="M94.6,224.6 H106.2 V235.6 M106.2,224.6 L109,221.6" fill="none" stroke="#777" stroke-width="0.9" /><rect x="94.80" y="225.20" width="11.00" height="10.20" fill="#eceef2"/><circle cx="222.00" cy="229.40" r="8.30" fill="#e8c43b"/><text x="217.6" y="234.2" font-family="Liberation Sans,sans-serif" font-weight="700" font-size="11.5" fill="#fff">R</text><circle cx="227.80" cy="235.00" r="2.40" fill="#fff" stroke="#333" stroke-width="1"/><circle cx="249.80" cy="229.40" r="7.90" fill="#e4e4e4" stroke="#8e8e8e" stroke-width="1.2"/><circle cx="249.80" cy="229.40" r="3.20" fill="#3c3c3c"/><rect x="72.40" y="247.70" width="167.60" height="24.50" fill="#efefef"/><polygon points="51.40,254.40 58.80,260.10 51.40,265.80" fill="#fbfbfb" stroke="#2b2b2b" stroke-width="1.3" stroke-linejoin="round" /><polygon points="92.13,258.35 92.13,261.65 89.59,262.11 89.44,262.47 90.92,264.59 88.59,266.92 86.47,265.44 86.11,265.59 85.65,268.13 82.35,268.13 81.89,265.59 81.53,265.44 79.41,266.92 77.08,264.59 78.56,262.47 78.41,262.11 75.87,261.65 75.87,258.35 78.41,257.89 78.56,257.53 77.08,255.41 79.41,253.08 81.53,254.56 81.89,254.41 82.35,251.87 85.65,251.87 86.11,254.41 86.47,254.56 88.59,253.08 90.92,255.41 89.44,257.53 89.59,257.89" fill="#8a8a8a" /><circle cx="84.00" cy="260.00" r="2.49" fill="#efefef"/><rect x="72.40" y="277.70" width="137.60" height="24.50" fill="#efefef"/><polygon points="51.40,284.40 58.80,290.10 51.40,295.80" fill="#fbfbfb" stroke="#2b2b2b" stroke-width="1.3" stroke-linejoin="round" /><path d="M75.8,282.8 Q75.8,282 76.6,282 H84.39999999999999 L86.0,283.8 H96.19999999999999 V297.8 H75.8 Z" fill="#8f8f8f" /><line x1="76.20" y1="285.10" x2="85.40" y2="285.10" stroke="#b4b4b4" stroke-width="0.9" /><rect x="72.40" y="307.70" width="123.60" height="24.50" fill="#efefef"/><polygon points="51.40,314.40 58.80,320.10 51.40,325.80" fill="#fbfbfb" stroke="#2b2b2b" stroke-width="1.3" stroke-linejoin="round" /><path d="M77.0,320 Q86.4,309 95.80000000000001,320 Q86.4,331 77.0,320 Z" fill="none" stroke="#9a9a9a" stroke-width="1.2" /><circle cx="86.40" cy="320.00" r="3.20" fill="none" stroke="#9a9a9a" stroke-width="1.1"/><line x1="79.90" y1="314.00" x2="92.90" y2="326.50" stroke="#9a9a9a" stroke-width="1.2" /><path d="M107.2,312.8 Q107.2,312 108.0,312 H115.8 L117.4,313.8 H127.6 V327.8 H107.2 Z" fill="#8f8f8f" /><line x1="107.60" y1="315.10" x2="116.80" y2="315.10" stroke="#b4b4b4" stroke-width="0.9" /><rect x="72.40" y="337.70" width="128.60" height="24.50" fill="#efefef"/><polygon points="60.00,346.00 60.00,354.40 51.00,354.40" fill="#2b2b2b" /><polygon points="58.60,349.20 58.60,353.00 54.40,353.00" fill="#5a5a5a" /><path d="M76.4,349.8 Q86.4,337.40000000000003 96.4,349.8 Q86.4,362.2 76.4,349.8 Z" fill="#8c8c8c" /><circle cx="86.40" cy="349.80" r="3.70" fill="#ececec"/><circle cx="86.40" cy="349.80" r="1.80" fill="#8c8c8c"/><path d="M107.2,342.8 Q107.2,342 108.0,342 H115.8 L117.4,343.8 H127.6 V357.8 H107.2 Z" fill="#8f8f8f" /><line x1="107.60" y1="345.10" x2="116.80" y2="345.10" stroke="#b4b4b4" stroke-width="0.9" /><rect x="95.00" y="367.70" width="123.50" height="24.50" fill="#efefef"/><path d="M99,379.8 Q109,367.40000000000003 119,379.8 Q109,392.2 99,379.8 Z" fill="#8c8c8c" /><circle cx="109.00" cy="379.80" r="3.70" fill="#ececec"/><circle cx="109.00" cy="379.80" r="1.80" fill="#8c8c8c"/><g><path d="M130,373.4 V384 Q130,388 139.8,388 Q149.6,388 149.6,384 V373.4 Q149.6,370 139.8,370 Q130,370 130,373.4 Z" fill="url(#cylg)" stroke="#777" stroke-width="1" /><path d="M130.6,373.6 Q130.6,377 139.8,377 Q149,377 149,373.6 Q149,370.7 139.8,370.7 Q130.6,370.7 130.6,373.6 Z" fill="#fbfbfb" /></g><rect x="95.00" y="397.70" width="123.50" height="24.50" fill="#efefef"/><path d="M99,409.8 Q109,397.40000000000003 119,409.8 Q109,422.2 99,409.8 Z" fill="#8c8c8c" /><circle cx="109.00" cy="409.80" r="3.70" fill="#ececec"/><circle cx="109.00" cy="409.80" r="1.80" fill="#8c8c8c"/><g><path d="M130,403.4 V414 Q130,418 139.8,418 Q149.6,418 149.6,414 V403.4 Q149.6,400 139.8,400 Q130,400 130,403.4 Z" fill="url(#cylg)" stroke="#777" stroke-width="1" /><path d="M130.6,403.6 Q130.6,407 139.8,407 Q149,407 149,403.6 Q149,400.7 139.8,400.7 Q130.6,400.7 130.6,403.6 Z" fill="#fbfbfb" /></g><rect x="72.40" y="427.70" width="148.60" height="24.50" fill="#efefef"/><polygon points="51.40,434.40 58.80,440.10 51.40,445.80" fill="#fbfbfb" stroke="#2b2b2b" stroke-width="1.3" stroke-linejoin="round" /><path d="M77.0,440 Q86.4,429 95.80000000000001,440 Q86.4,451 77.0,440 Z" fill="none" stroke="#9a9a9a" stroke-width="1.2" /><circle cx="86.40" cy="440.00" r="3.20" fill="none" stroke="#9a9a9a" stroke-width="1.1"/><line x1="79.90" y1="434.00" x2="92.90" y2="446.50" stroke="#9a9a9a" stroke-width="1.2" /><path d="M107.2,432.8 Q107.2,432 108.0,432 H115.8 L117.4,433.8 H127.6 V447.8 H107.2 Z" fill="#8f8f8f" /><line x1="107.60" y1="435.10" x2="116.80" y2="435.10" stroke="#b4b4b4" stroke-width="0.9" /><rect x="72.40" y="457.70" width="143.20" height="24.50" fill="#efefef"/><polygon points="60.00,466.00 60.00,474.40 51.00,474.40" fill="#2b2b2b" /><polygon points="58.60,469.20 58.60,473.00 54.40,473.00" fill="#5a5a5a" /><path d="M76.4,469.8 Q86.4,457.40000000000003 96.4,469.8 Q86.4,482.2 76.4,469.8 Z" fill="#8c8c8c" /><circle cx="86.40" cy="469.80" r="3.70" fill="#ececec"/><circle cx="86.40" cy="469.80" r="1.80" fill="#8c8c8c"/><path d="M107.2,462.8 Q107.2,462 108.0,462 H115.8 L117.4,463.8 H127.6 V477.8 H107.2 Z" fill="#8f8f8f" /><line x1="107.60" y1="465.10" x2="116.80" y2="465.10" stroke="#b4b4b4" stroke-width="0.9" /><rect x="95.00" y="487.70" width="133.80" height="24.50" fill="#efefef"/><path d="M99.6,500 Q109,489 118.4,500 Q109,511 99.6,500 Z" fill="none" stroke="#9a9a9a" stroke-width="1.2" /><circle cx="109.00" cy="500.00" r="3.20" fill="none" stroke="#9a9a9a" stroke-width="1.1"/><line x1="102.50" y1="494.00" x2="115.50" y2="506.50" stroke="#9a9a9a" stroke-width="1.2" /><rect x="131.00" y="491.00" width="16.00" height="16.00" fill="#fff" stroke="#9a9a9a" stroke-width="0.9"/><rect x="130.00" y="490.00" width="2.20" height="2.20" fill="#3a8fdb"/><rect x="146.00" y="490.00" width="2.20" height="2.20" fill="#3a8fdb"/><rect x="130.00" y="506.00" width="2.20" height="2.20" fill="#3a8fdb"/><path d="M135,495 H143 M135,495 V502.5 M143.4,495.5 Q142.5,502 135.5,502.8" fill="none" stroke="#666" stroke-width="1" /><rect x="134.00" y="494.00" width="2.00" height="2.00" fill="#3a8fdb"/><rect x="142.40" y="494.00" width="2.00" height="2.00" fill="#3a8fdb"/><rect x="134.00" y="501.60" width="2.00" height="2.00" fill="#3a8fdb"/><polygon points="141.00,506.20 146.20,500.60 149.00,503.20 143.60,508.60 140.00,509.40" fill="#f2b13c" /><polygon points="146.20,500.60 147.80,499.00 150.40,501.60 149.00,503.20" fill="#e8483f" /><polygon points="140.00,509.40 141.00,506.20 143.60,508.60" fill="#444" /><rect x="72.40" y="517.70" width="163.20" height="24.50" fill="#efefef"/><polygon points="51.40,524.40 58.80,530.10 51.40,535.80" fill="#fbfbfb" stroke="#2b2b2b" stroke-width="1.3" stroke-linejoin="round" /><path d="M77.0,530 Q86.4,519 95.80000000000001,530 Q86.4,541 77.0,530 Z" fill="none" stroke="#9a9a9a" stroke-width="1.2" /><circle cx="86.40" cy="530.00" r="3.20" fill="none" stroke="#9a9a9a" stroke-width="1.1"/><line x1="79.90" y1="524.00" x2="92.90" y2="536.50" stroke="#9a9a9a" stroke-width="1.2" /><path d="M107.2,522.8 Q107.2,522 108.0,522 H115.8 L117.4,523.8 H127.6 V537.8 H107.2 Z" fill="#8f8f8f" /><line x1="107.60" y1="525.10" x2="116.80" y2="525.10" stroke="#b4b4b4" stroke-width="0.9" /></svg><div class="abs" style="left:35.0px;top:15.900000000000006px;font-size:13.6px;line-height:16px;color:#333;white-space:nowrap;letter-spacing:0.05px;color:#5a5a5a;letter-spacing:0.3px">BROWSER</div><div class="abs" style="left:127.39999999999999px;top:50.599999999999994px;font-size:13.6px;line-height:16px;color:#333;white-space:nowrap;letter-spacing:0.05px;color:#fff;font-weight:700;font-size:13.5px;letter-spacing:0.25px">Untitled v5</div><div class="abs" style="left:108.2px;top:80.69999999999999px;font-size:13.6px;line-height:16px;color:#333;white-space:nowrap;letter-spacing:0.05px;">Document Settings</div><div class="abs" style="left:113.2px;top:110.69999999999999px;font-size:13.6px;line-height:16px;color:#333;white-space:nowrap;letter-spacing:0.05px;">Named Views</div><div class="abs" style="left:144.0px;top:140.7px;font-size:13.6px;line-height:16px;color:#333;white-space:nowrap;letter-spacing:0.05px;">Origin</div><div class="abs" style="left:144.0px;top:170.7px;font-size:13.6px;line-height:16px;color:#333;white-space:nowrap;letter-spacing:0.05px;">Bodies</div><div class="abs" style="left:166.8px;top:200.7px;font-size:13.6px;line-height:16px;color:#333;white-space:nowrap;letter-spacing:0.05px;">Body1</div><div class="abs" style="left:166.8px;top:230.7px;font-size:13.6px;line-height:16px;color:#333;white-space:nowrap;letter-spacing:0.05px;">Body4</div><div class="abs" style="left:144.0px;top:260.7px;font-size:13.6px;line-height:16px;color:#333;white-space:nowrap;letter-spacing:0.05px;">Canvases</div><div class="abs" style="left:144.0px;top:290.7px;font-size:13.6px;line-height:16px;color:#333;white-space:nowrap;letter-spacing:0.05px;">Sketches</div><div class="abs" style="left:166.8px;top:320.7px;font-size:13.6px;line-height:16px;color:#333;white-space:nowrap;letter-spacing:0.05px;">Sketch2</div><div class="abs" style="left:144.0px;top:350.70000000000005px;font-size:13.6px;line-height:16px;color:#333;white-space:nowrap;letter-spacing:0.05px;">Construction</div><svg class="abs" style="left:0;top:805px" width="400" height="42" viewBox="0 977 400 42"><rect x="5.50" y="981.50" width="373.50" height="29.30" fill="#f0f0f0" stroke="#cbcbcb" stroke-width="1"/><path d="M5.5,1010.9 H379 V981.5" fill="none" stroke="#bcbcbc" stroke-width="1.3" /><circle cx="359.30" cy="996.20" r="5.60" fill="#222"/><rect x="356.20" y="995.40" width="6.20" height="1.70" fill="#fff"/><rect x="358.45" y="993.10" width="1.70" height="6.20" fill="#fff"/></svg><div class="abs" style="left:35.0px;top:816.9px;font-size:13.6px;line-height:16px;color:#333;white-space:nowrap;letter-spacing:0.05px;color:#5a5a5a;letter-spacing:0.3px">COMMENTS</div>
<svg class="abs" style="left:800px;top:800px" width="320" height="47" viewBox="800 972 320 47"><defs><linearGradient id="gridg" x1="0" y1="0" x2="0" y2="1"><stop offset="0" stop-color="#fdfdfd"/><stop offset="1" stop-color="#a8a8ae"/></linearGradient><linearGradient id="camg" x1="0" y1="0" x2="0" y2="1"><stop offset="0" stop-color="#b8bac4"/><stop offset="1" stop-color="#8a8d9a"/></linearGradient><radialGradient id="lensg" cx="0.4" cy="0.35" r="0.7"><stop offset="0" stop-color="#ffffff"/><stop offset="1" stop-color="#dfe6ea"/></radialGradient></defs><rect x="813.20" y="980.20" width="295.20" height="29.60" fill="#f0f0f0"/><ellipse cx="826" cy="994.3" rx="4.9" ry="9.5" fill="none" stroke="#4a4a4a" stroke-width="1"/><path d="M835.5,994.5 A9.2,4.6 0 0 1 817.3,994.5 A9.2,4.6 0 0 1 822.5,990.4" fill="none" stroke="#4a4a4a" stroke-width="1" /><path d="M835.5,994.5 A9.2,4.6 0 0 0 832,991" fill="none" stroke="#4a4a4a" stroke-width="1" /><polygon points="828.40,987.40 831.00,989.40 828.20,990.60" fill="#4a4a4a" /><polygon points="831.20,990.40 833.80,992.60 831.00,993.40" fill="#4a4a4a" /><path d="M826.4,992.4 V996.6 M824.3,994.5 H828.5" fill="none" stroke="#2f7fd0" stroke-width="1.2" /><polygon points="843.20,993.00 850.00,993.00 846.60,997.90" fill="#222" /><polygon points="859.30,991.50 863.60,987.20 864.60,988.60 871.60,987.20 871.80,991.50" fill="#8c8c8c" stroke="#555" stroke-width="0.8" stroke-linejoin="round" /><rect x="859.40" y="991.50" width="16.60" height="11.80" fill="#f4f4f4" stroke="#777" stroke-width="1"/><rect x="861.60" y="994.40" width="12.20" height="6.80" fill="url(#camg)" stroke="#444" stroke-width="0.9"/><path d="M894.6,1003.4 L891.4,996.6 Q890.8,994.8 892.4,994.8 Q893.6,994.8 894.6,996.4 L896,998.4 L895.6,988.6 Q895.6,986.8 896.8,986.8 Q898,986.8 898.2,988.6 L898.8,994 L899,986.8 Q899.1,985.2 900.4,985.2 Q901.6,985.2 901.7,986.8 L901.8,994 L902.6,987.8 Q902.8,986.2 904,986.4 Q905.2,986.6 905.1,988.2 L904.8,994.6 L906.4,990.4 Q907,989 908.1,989.4 Q909.2,989.8 908.8,991.4 L906.6,999.4 Q906,1002 904.8,1003.4 Z" fill="#fff" stroke="#333" stroke-width="0.95" /><circle cx="930.00" cy="991.80" r="6.50" fill="url(#lensg)" stroke="#444" stroke-width="1.1"/><line x1="934.80" y1="996.60" x2="940.80" y2="1002.40" stroke="#333" stroke-width="2.2" /><path d="M938.6,988 H942.6 M940.6,986 V990 M938.6,991.8 H942.6" fill="none" stroke="#333" stroke-width="1" /><circle cx="962.50" cy="992.70" r="7.20" fill="url(#lensg)" stroke="#444" stroke-width="1.1"/><rect x="959.30" y="989.40" width="6.20" height="6.60" fill="#eef0f2" stroke="#666" stroke-width="0.9"/><line x1="967.80" y1="998.00" x2="973.40" y2="1003.00" stroke="#333" stroke-width="2.2" /><polygon points="981.20,993.00 988.00,993.00 984.60,997.90" fill="#222" /><rect x="997.20" y="985.40" width="18.20" height="15.20" fill="#ececf0" stroke="#7a7d88" stroke-width="1" rx="1"/><rect x="999.20" y="987.40" width="14.20" height="11.00" fill="#8fb4e3" stroke="#3b5f96" stroke-width="0.9"/><rect x="1004.00" y="1000.60" width="4.60" height="2.00" fill="#c8c8cc"/><rect x="1001.00" y="1002.40" width="10.60" height="1.60" fill="#8a8a90" rx="0.8"/><polygon points="1019.30,993.00 1026.10,993.00 1022.70,997.90" fill="#222" /><rect x="1035.50" y="986.30" width="18.40" height="17.30" fill="url(#gridg)" stroke="#555" stroke-width="0.9"/><line x1="1035.50" y1="989.20" x2="1053.90" y2="989.20" stroke="#555" stroke-width="0.8" /><line x1="1035.50" y1="992.10" x2="1053.90" y2="992.10" stroke="#555" stroke-width="0.8" /><line x1="1035.50" y1="995.00" x2="1053.90" y2="995.00" stroke="#555" stroke-width="0.8" /><line x1="1035.50" y1="997.90" x2="1053.90" y2="997.90" stroke="#555" stroke-width="0.8" /><line x1="1035.50" y1="1000.80" x2="1053.90" y2="1000.80" stroke="#555" stroke-width="0.8" /><line x1="1040.10" y1="986.30" x2="1040.10" y2="1003.60" stroke="#555" stroke-width="0.8" /><line x1="1044.70" y1="986.30" x2="1044.70" y2="1003.60" stroke="#555" stroke-width="0.8" /><line x1="1049.30" y1="986.30" x2="1049.30" y2="1003.60" stroke="#555" stroke-width="0.8" /><polygon points="1058.00,993.00 1064.80,993.00 1061.40,997.90" fill="#222" /><rect x="1074.40" y="987.40" width="18.00" height="15.30" fill="#8fb4e3" stroke="#2c4f86" stroke-width="1.1" rx="1"/><line x1="1083.40" y1="987.40" x2="1083.40" y2="1002.70" stroke="#2c4f86" stroke-width="1.2" /><line x1="1074.40" y1="995.00" x2="1092.40" y2="995.00" stroke="#7398cc" stroke-width="1.1" /><polygon points="1096.30,993.00 1103.10,993.00 1099.70,997.90" fill="#222" /></svg>
</div>
<div id="timeline"><div class="abs" style="left:0;top:-1px;width:168px;height:1px;background:#c6c6c6"></div>
<svg class="abs" style="left:0;top:-1px" width="1920" height="62" viewBox="0 1018 1920 62"><rect x="13.30" y="1041.50" width="2.60" height="15.00" fill="#666"/><polygon points="16.60,1049.00 27.00,1042.00 27.00,1056.00" fill="#666" /><polygon points="44.70,1049.00 57.10,1041.60 57.10,1056.40" fill="#666" /><rect x="58.30" y="1046.40" width="2.40" height="6.20" fill="#666"/><polygon points="76.30,1039.30 91.20,1048.40 76.30,1057.50" fill="#666" /><rect x="106.10" y="1046.40" width="2.50" height="6.20" fill="#666"/><polygon points="110.00,1041.60 122.30,1049.00 110.00,1056.40" fill="#666" /><polygon points="138.30,1042.00 149.60,1049.00 138.30,1056.00" fill="#666" /><rect x="149.60" y="1041.50" width="2.50" height="15.00" fill="#666"/><rect x="180.00" y="1028.10" width="235.20" height="6.70" fill="#fbd06a"/><rect x="192.60" y="1068.20" width="421.40" height="1.60" fill="#c8c8c8"/><rect x="192.60" y="1062.00" width="1.90" height="7.00" fill="#c8c8c8"/><rect x="222.60" y="1062.00" width="1.90" height="7.00" fill="#c8c8c8"/><rect x="252.60" y="1062.00" width="1.90" height="7.00" fill="#c8c8c8"/><rect x="282.60" y="1062.00" width="1.90" height="7.00" fill="#c8c8c8"/><rect x="312.60" y="1062.00" width="1.90" height="7.00" fill="#c8c8c8"/><rect x="342.60" y="1062.00" width="1.90" height="7.00" fill="#c8c8c8"/><rect x="372.60" y="1062.00" width="1.90" height="7.00" fill="#c8c8c8"/><rect x="402.60" y="1062.00" width="1.90" height="7.00" fill="#c8c8c8"/><rect x="432.60" y="1062.00" width="1.90" height="7.00" fill="#c8c8c8"/><rect x="462.60" y="1062.00" width="1.90" height="7.00" fill="#c8c8c8"/><rect x="492.60" y="1062.00" width="1.90" height="7.00" fill="#c8c8c8"/><rect x="522.60" y="1062.00" width="1.90" height="7.00" fill="#c8c8c8"/><rect x="552.60" y="1062.00" width="1.90" height="7.00" fill="#c8c8c8"/><rect x="582.60" y="1062.00" width="1.90" height="7.00" fill="#c8c8c8"/><rect x="612.60" y="1062.00" width="1.90" height="7.00" fill="#c8c8c8"/><rect x="183.60" y="1038.30" width="18.30" height="18.30" fill="#80c5f8" stroke="#4a90c8" stroke-width="0.8"/><path d="M184,1051 Q187.5,1046 189.8,1046 Q191.6,1046 195.6,1052 Q197.4,1050 198.6,1050 Q199.8,1050 201.5,1053.4 V1056.2 H184 Z" fill="#3f8ccc" /><circle cx="196.60" cy="1043.40" r="1.90" fill="#ffffd0"/><rect x="213.10" y="1038.00" width="2.20" height="2.20" fill="#3a8fdb"/><rect x="229.10" y="1038.00" width="2.20" height="2.20" fill="#3a8fdb"/><rect x="213.10" y="1054.00" width="2.20" height="2.20" fill="#3a8fdb"/><path d="M215.5,1039.1 H229.1 M214.2,1040.4 V1054.0 M230.2,1040.4 V1047.0 M215.5,1055.1 H222.1" fill="none" stroke="#777" stroke-width="0.9" /><path d="M218.6,1043.0 H226.1 M218.1,1043.5 V1050.5 M226.7,1043.6 Q225.7,1050.0 218.7,1051.0" fill="none" stroke="#5f6b78" stroke-width="1" /><rect x="217.10" y="1042.00" width="2.00" height="2.00" fill="#3a8fdb"/><rect x="225.50" y="1042.00" width="2.00" height="2.00" fill="#3a8fdb"/><rect x="217.10" y="1049.80" width="2.00" height="2.00" fill="#3a8fdb"/><polygon points="224.10,1054.20 229.30,1048.60 232.10,1051.20 226.70,1056.60 223.10,1057.60" fill="#f2b13c" /><polygon points="229.30,1048.60 230.90,1047.00 233.50,1049.60 232.10,1051.20" fill="#e8483f" /><polygon points="223.10,1057.60 224.10,1054.40 226.70,1056.60" fill="#444" /><path d="M261.1,1043.0 Q252.5,1036.9 245.1,1042.2" fill="none" stroke="#2a2a2a" stroke-width="1" /><polygon points="243.70,1043.60 246.90,1040.20 247.30,1043.20" fill="#2a2a2a" /><path d="M243.5,1046.0 Q253.1,1038.4 263.1,1045.8000000000002 L259.7,1049.8000000000002 Q253.1,1045.2 247.1,1050.0 Z" fill="#82c4f5" /><path d="M243.5,1046.0 L247.1,1050.0 V1055.8000000000002 L243.5,1051.6000000000001 Z" fill="#4a97d5" /><path d="M247.1,1050.0 Q253.1,1045.2 259.7,1049.8000000000002 V1055.4 Q253.1,1051.0 247.1,1055.8000000000002 Z" fill="#68b1e8" /><polygon points="259.70,1049.80 263.10,1046.80 263.10,1052.00 259.70,1055.40" fill="#fff" stroke="#555" stroke-width="0.9" stroke-linejoin="round" /><polygon points="273.70,1054.00 285.30,1054.00 288.70,1050.80 288.70,1053.60 285.30,1057.00 273.70,1057.00" fill="#b5b5b5" /><polygon points="273.70,1041.80 277.10,1038.40 288.70,1038.40 285.30,1041.80" fill="#82c4f5" /><polygon points="285.30,1041.80 288.70,1038.40 288.70,1050.00 285.30,1053.40" fill="#4a97d5" /><polygon points="273.70,1041.80 285.30,1041.80 285.30,1053.40 273.70,1053.40" fill="#68b1e8" /><line x1="290.70" y1="1053.40" x2="290.70" y2="1040.40" stroke="#222" stroke-width="1" /><polygon points="288.90,1041.40 290.70,1038.40 292.50,1041.40" fill="#222" /><polygon points="302.90,1037.80 322.90,1037.80 322.90,1048.80 317.30,1053.20 308.50,1053.20 302.90,1048.80" fill="#4a97d5" /><polygon points="303.30,1037.80 322.50,1037.80 316.50,1047.80 309.30,1047.80" fill="#82c4f5" /><circle cx="312.90" cy="1052.00" r="5.00" fill="#f6f6f6" stroke="#666" stroke-width="0.9"/><polygon points="332.90,1037.80 352.90,1037.80 352.90,1048.80 347.30,1053.20 338.50,1053.20 332.90,1048.80" fill="#4a97d5" /><polygon points="333.30,1037.80 352.50,1037.80 346.50,1047.80 339.30,1047.80" fill="#82c4f5" /><circle cx="342.90" cy="1052.00" r="5.00" fill="#f6f6f6" stroke="#666" stroke-width="0.9"/><polygon points="363.50,1053.00 367.90,1042.80 372.90,1042.80 372.90,1053.00" fill="#d8d8d8" stroke="#4cae6c" stroke-width="1.1" stroke-linejoin="round" /><polygon points="374.10,1042.80 379.30,1042.80 381.90,1049.80 380.50,1053.00 374.10,1053.00" fill="#d8d8d8" stroke="#4cae6c" stroke-width="1.4" stroke-linejoin="round" /><polygon points="378.90,1042.60 380.50,1043.40 382.10,1049.80 380.50,1053.00" fill="#3fb566" /><polygon points="370.70,1042.80 375.10,1038.80 375.10,1052.00 370.70,1056.40" fill="#ea9a5e" /><polygon points="394.00,1050.00 397.60,1046.60 411.20,1046.60 407.60,1050.00" fill="#eee" /><polygon points="407.60,1050.00 411.20,1046.60 411.20,1052.60 407.60,1056.00" fill="#b8b8b8" /><polygon points="394.00,1050.00 407.60,1050.00 407.60,1056.00 394.00,1056.00" fill="#dcdcdc" /><path d="M394,1050.2 V1056.0 H407.6 L411.2,1052.6000000000001" fill="none" stroke="#666" stroke-width="0.9" /><polygon points="394.00,1041.20 397.60,1037.80 411.20,1037.80 407.60,1041.20" fill="#82c4f5" /><polygon points="407.60,1041.20 411.20,1037.80 411.20,1043.40 407.60,1046.80" fill="#4a97d5" /><polygon points="394.00,1041.20 407.60,1041.20 407.60,1046.80 394.00,1046.80" fill="#68b1e8" /><path d="M392.6,1048.6000000000001 H407.8 L412.6,1043.8000000000002" fill="none" stroke="#d4ecfc" stroke-width="2.2" /><path d="M392.6,1048.6000000000001 H407.8 L412.6,1043.8000000000002" fill="none" stroke="#4a97d5" stroke-width="1" /><path d="M410.3,1030.1 H425 V1034 Q425,1036 423,1036.6 L419,1041.4 V1069.6 H416 V1041.4 L412.3,1036.6 Q410.3,1036 410.3,1034 Z" fill="#555" /><rect x="413.00" y="1036.30" width="5.00" height="1.10" fill="#f2f2f2"/><g opacity="0.32"><rect x="423.10" y="1038.00" width="2.20" height="2.20" fill="#3a8fdb"/><rect x="439.10" y="1038.00" width="2.20" height="2.20" fill="#3a8fdb"/><rect x="423.10" y="1054.00" width="2.20" height="2.20" fill="#3a8fdb"/><path d="M425.49999999999994,1039.1 H439.09999999999997 M424.2,1040.4 V1054.0 M440.2,1040.4 V1047.0 M425.49999999999994,1055.1 H432.09999999999997" fill="none" stroke="#777" stroke-width="0.9" /><path d="M428.59999999999997,1043.0 H436.09999999999997 M428.09999999999997,1043.5 V1050.5 M436.7,1043.6 Q435.7,1050.0 428.7,1051.0" fill="none" stroke="#5f6b78" stroke-width="1" /><rect x="427.10" y="1042.00" width="2.00" height="2.00" fill="#3a8fdb"/><rect x="435.50" y="1042.00" width="2.00" height="2.00" fill="#3a8fdb"/><rect x="427.10" y="1049.80" width="2.00" height="2.00" fill="#3a8fdb"/><polygon points="434.10,1054.20 439.30,1048.60 442.10,1051.20 436.70,1056.60 433.10,1057.60" fill="#f2b13c" /><polygon points="439.30,1048.60 440.90,1047.00 443.50,1049.60 442.10,1051.20" fill="#e8483f" /><polygon points="433.10,1057.60 434.10,1054.40 436.70,1056.60" fill="#444" /><line x1="455.90" y1="1047.40" x2="469.90" y2="1047.40" stroke="#555" stroke-width="1.4" /><line x1="462.90" y1="1040.40" x2="462.90" y2="1054.40" stroke="#555" stroke-width="1.4" /><polygon points="459.90,1041.80 462.90,1038.00 465.90,1041.80" fill="#555" /><polygon points="459.90,1053.00 462.90,1056.80 465.90,1053.00" fill="#555" /><polygon points="457.30,1044.40 453.50,1047.40 457.30,1050.40" fill="#555" /><polygon points="468.50,1044.40 472.30,1047.40 468.50,1050.40" fill="#555" /><rect x="483.10" y="1038.00" width="2.20" height="2.20" fill="#3a8fdb"/><rect x="499.10" y="1038.00" width="2.20" height="2.20" fill="#3a8fdb"/><rect x="483.10" y="1054.00" width="2.20" height="2.20" fill="#3a8fdb"/><path d="M485.49999999999994,1039.1 H499.09999999999997 M484.2,1040.4 V1054.0 M500.2,1040.4 V1047.0 M485.49999999999994,1055.1 H492.09999999999997" fill="none" stroke="#777" stroke-width="0.9" /><path d="M488.59999999999997,1043.0 H496.09999999999997 M488.09999999999997,1043.5 V1050.5 M496.7,1043.6 Q495.7,1050.0 488.7,1051.0" fill="none" stroke="#5f6b78" stroke-width="1" /><rect x="487.10" y="1042.00" width="2.00" height="2.00" fill="#3a8fdb"/><rect x="495.50" y="1042.00" width="2.00" height="2.00" fill="#3a8fdb"/><rect x="487.10" y="1049.80" width="2.00" height="2.00" fill="#3a8fdb"/><polygon points="494.10,1054.20 499.30,1048.60 502.10,1051.20 496.70,1056.60 493.10,1057.60" fill="#f2b13c" /><polygon points="499.30,1048.60 500.90,1047.00 503.50,1049.60 502.10,1051.20" fill="#e8483f" /><polygon points="493.10,1057.60 494.10,1054.40 496.70,1056.60" fill="#444" /><polygon points="513.70,1054.00 525.30,1054.00 528.70,1050.80 528.70,1053.60 525.30,1057.00 513.70,1057.00" fill="#b5b5b5" /><polygon points="513.70,1041.80 517.10,1038.40 528.70,1038.40 525.30,1041.80" fill="#82c4f5" /><polygon points="525.30,1041.80 528.70,1038.40 528.70,1050.00 525.30,1053.40" fill="#4a97d5" /><polygon points="513.70,1041.80 525.30,1041.80 525.30,1053.40 513.70,1053.40" fill="#68b1e8" /><line x1="530.70" y1="1053.40" x2="530.70" y2="1040.40" stroke="#222" stroke-width="1" /><polygon points="528.90,1041.40 530.70,1038.40 532.50,1041.40" fill="#222" /><polygon points="543.70,1054.00 555.30,1054.00 558.70,1050.80 558.70,1053.60 555.30,1057.00 543.70,1057.00" fill="#b5b5b5" /><polygon points="543.70,1041.80 547.10,1038.40 558.70,1038.40 555.30,1041.80" fill="#82c4f5" /><polygon points="555.30,1041.80 558.70,1038.40 558.70,1050.00 555.30,1053.40" fill="#4a97d5" /><polygon points="543.70,1041.80 555.30,1041.80 555.30,1053.40 543.70,1053.40" fill="#68b1e8" /><line x1="560.70" y1="1053.40" x2="560.70" y2="1040.40" stroke="#222" stroke-width="1" /><polygon points="558.90,1041.40 560.70,1038.40 562.50,1041.40" fill="#222" /><polygon points="573.70,1054.00 585.30,1054.00 588.70,1050.80 588.70,1053.60 585.30,1057.00 573.70,1057.00" fill="#b5b5b5" /><polygon points="573.70,1041.80 577.10,1038.40 588.70,1038.40 585.30,1041.80" fill="#82c4f5" /><polygon points="585.30,1041.80 588.70,1038.40 588.70,1050.00 585.30,1053.40" fill="#4a97d5" /><polygon points="573.70,1041.80 585.30,1041.80 585.30,1053.40 573.70,1053.40" fill="#68b1e8" /><line x1="590.70" y1="1053.40" x2="590.70" y2="1040.40" stroke="#222" stroke-width="1" /><polygon points="588.90,1041.40 590.70,1038.40 592.50,1041.40" fill="#222" /><path d="M603.5,1042.4 L607.1,1038.4 H612.5 Q622.5,1039.4 622.9,1049.4 V1053.4 L619.5,1056.8000000000002 H603.5 Z" fill="#dcdcdc" stroke="#888" stroke-width="0.9" /><path d="M609.9,1041.8000000000002 L612.5,1038.4 Q622.5,1039.4 622.9,1049.4 L619.5,1052.0 Q618.5,1043.4 609.9,1041.8000000000002 Z" fill="#68b1e8" /></g><polygon points="1902.81,1046.37 1902.81,1050.23 1899.84,1050.76 1899.66,1051.18 1901.38,1053.66 1898.66,1056.38 1896.18,1054.66 1895.76,1054.84 1895.23,1057.81 1891.37,1057.81 1890.84,1054.84 1890.42,1054.66 1887.94,1056.38 1885.22,1053.66 1886.94,1051.18 1886.76,1050.76 1883.79,1050.23 1883.79,1046.37 1886.76,1045.84 1886.94,1045.42 1885.22,1042.94 1887.94,1040.22 1890.42,1041.94 1890.84,1041.76 1891.37,1038.79 1895.23,1038.79 1895.76,1041.76 1896.18,1041.94 1898.66,1040.22 1901.38,1042.94 1899.66,1045.42 1899.84,1045.84" fill="#767676" /><circle cx="1893.30" cy="1048.30" r="2.91" fill="#f2f2f2"/></svg>
</div>
</body></html>
